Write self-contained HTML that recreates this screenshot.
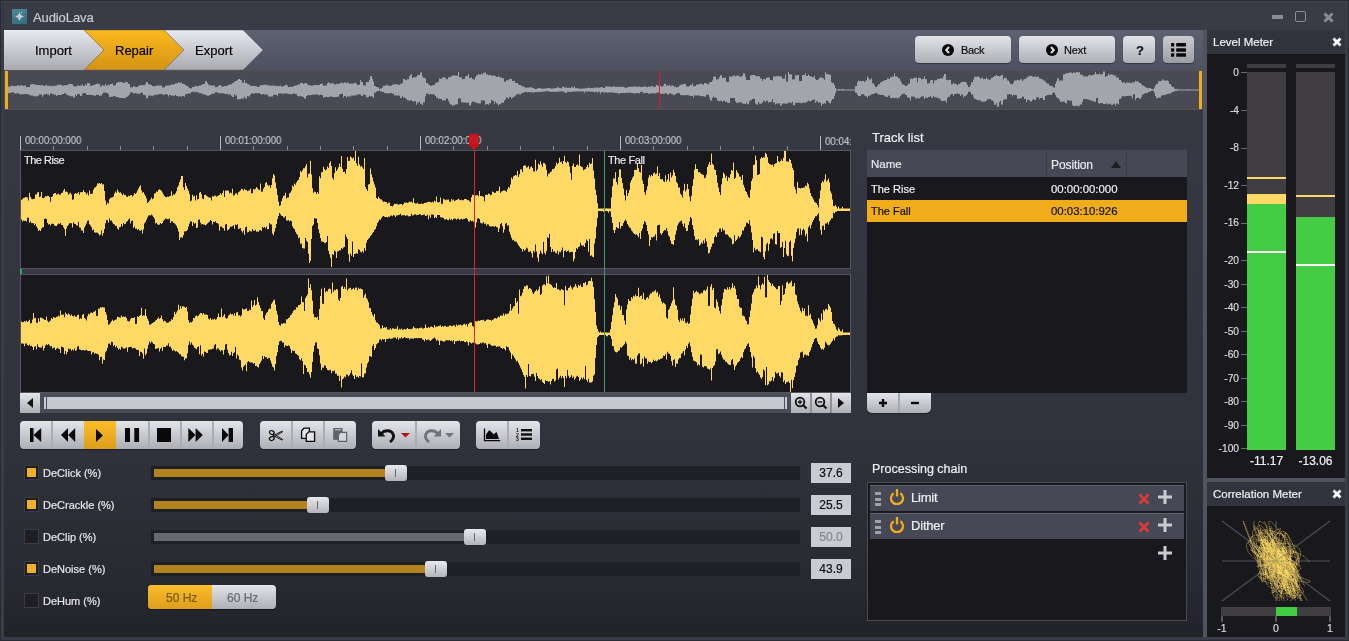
<!DOCTYPE html>
<html><head><meta charset="utf-8">
<style>
*{box-sizing:border-box;margin:0;padding:0}
html,body{width:1349px;height:641px;overflow:hidden;background:#2a2c33;font-family:"Liberation Sans",sans-serif;}
.a{position:absolute}
#frame{left:1px;top:1px;width:1347px;height:639px;background:#393b47}
#title{left:33px;top:9px;font-size:13px;color:#c9cacf;letter-spacing:-0.1px}
#icon{left:12px;top:9px;width:15px;height:15px;background:linear-gradient(160deg,#4a8797,#2f6d7e)}
#main{left:4px;top:30px;width:1199px;height:607px;background:linear-gradient(#363943 13%,#30333c 67%,#282a31 91%,#222329 100%)}
#tabbar{left:4px;top:30px;width:1199px;height:40px;background:linear-gradient(#5d6171,#4d5160)}
#ovbg{left:4px;top:70px;width:1199px;height:40px;background:#494a54;border-bottom:1px solid #56534e}
#split{left:1203px;top:30px;width:4px;height:607px;background:#50545f}
.tab{top:30px;height:40px;font-size:13px;line-height:40px;color:#050505}
.btn{border-radius:4px;background:linear-gradient(#e3e5eb,#aeafb5);box-shadow:0 1px 1px rgba(0,0,0,.35)}
.txt{white-space:nowrap;transform:translateY(1px);will-change:transform;-webkit-text-stroke:0.2px currentColor}
.wf{left:20px;width:831px;background:#19181d;border:1px solid #55555a}
.ruler{font-size:11px;color:#c4c5ca;top:133.8px;transform:translateY(0px) scaleX(0.88);transform-origin:0 0}
.tick{background:#8a8b90;width:1px}
.grp{top:421px;height:28px;border-radius:4px;background:linear-gradient(#e3e5eb,#aeafb5);box-shadow:0 1px 1px rgba(0,0,0,.4)}
.div{position:absolute;top:0;width:1px;height:27px;background:#9c9da3}
.cb{left:24px;width:15px;height:15px;border:1px solid #3c3c40;background:#1f1f23}
.cb i{position:absolute;left:2px;top:2px;width:9px;height:9px;background:#f0b12a}
.lbl{left:43px;font-size:11px;color:#e6e6e8}
.track{left:151px;width:649px;height:14px;background:#1f2025}
.fill{left:154px;height:8px;background:#b3831f}
.thumb{width:22px;height:16px;border-radius:3px;background:linear-gradient(#e8e9ee,#b4b5bb)}
.thumb i{position:absolute;left:10px;top:4px;width:1px;height:8px;background:#66676c}
.val{left:811px;width:40px;height:20px;background:#c9cbd2;font-size:12px;line-height:20px;text-align:center;color:#111;will-change:transform;-webkit-text-stroke:0.2px currentColor}
</style></head><body>
<div id="frame" class="a"></div>
<div class="a" style="left:1px;top:1px;width:1347px;height:2px;background:#3f414d"></div>
<div class="a" style="left:3px;top:3px;width:1342px;height:1px;background:#34363f"></div>
<div class="a" style="left:3px;top:3px;width:1px;height:27px;background:#34363f"></div>
<div id="icon" class="a">
 <svg width="15" height="15" viewBox="0 0 15 15" style="position:absolute;left:0;top:0">
  <path d="M7.5,3 L8.9,6.1 L12,7.5 L8.9,8.9 L7.5,12 L6.1,8.9 L3,7.5 L6.1,6.1Z" fill="#c8cacc"/>
  <circle cx="9.6" cy="3.6" r="0.7" fill="#cfd3d6"/>
 </svg>
</div>
<div id="title" class="a txt">AudioLava</div>
<!-- window controls -->
<div class="a" style="left:1272px;top:15px;width:11px;height:4px;background:#8a8c94"></div>
<div class="a" style="left:1295px;top:11px;width:11px;height:11px;border:1px solid #8a8c94;border-radius:2px"></div>
<svg class="a" style="left:1322px;top:11px" width="13" height="13" viewBox="0 0 13 13"><path d="M2.5,2.5L10.5,10.5M10.5,2.5L2.5,10.5" stroke="#8a8c94" stroke-width="3"/></svg>

<div id="main" class="a"></div>
<div id="tabbar" class="a"></div>
<svg class="a" style="left:4px;top:30px" width="270" height="40" viewBox="0 0 270 40">
 <defs>
  <linearGradient id="gw" x1="0" y1="0" x2="0" y2="1"><stop offset="0" stop-color="#e9eaef"/><stop offset="1" stop-color="#a9aab0"/></linearGradient>
  <linearGradient id="go" x1="0" y1="0" x2="0" y2="1"><stop offset="0" stop-color="#fbb91f"/><stop offset="1" stop-color="#d49414"/></linearGradient>
 </defs>
 <path d="M0,0 H80 L100,20 L80,40 H0Z" fill="url(#gw)"/>
 <path d="M80,0 H160 L180,20 L160,40 H80 L100,20Z" fill="url(#go)" stroke="#7a6a4a" stroke-width="0.6"/>
 <path d="M160,0 H239 L259,20 L239,40 H160 L180,20Z" fill="url(#gw)" stroke="#6a6c74" stroke-width="0.6"/>
</svg>
<div class="a tab txt" style="left:35px">Import</div>
<div class="a tab txt" style="left:115px">Repair</div>
<div class="a tab txt" style="left:195px">Export</div>

<div class="a btn" style="left:915px;top:36px;width:96px;height:27px"></div>
<div class="a btn" style="left:1019px;top:36px;width:96px;height:27px"></div>
<div class="a btn" style="left:1123px;top:36px;width:32px;height:27px"></div>
<div class="a btn" style="left:1163px;top:36px;width:31px;height:27px;background:linear-gradient(#c9cbd1,#9c9da3)"></div>
<svg class="a" style="left:942px;top:44px" width="12" height="12" viewBox="0 0 12 12"><circle cx="6" cy="6" r="6" fill="#0a0a0a"/><path d="M7,3 L4.2,6 L7,9" stroke="#e0e0e0" stroke-width="2" fill="none"/></svg>
<div class="a txt" style="left:961px;top:43px;font-size:11px;color:#111;letter-spacing:-0.3px">Back</div>
<svg class="a" style="left:1046px;top:44px" width="12" height="12" viewBox="0 0 12 12"><circle cx="6" cy="6" r="6" fill="#0a0a0a"/><path d="M5,3 L7.8,6 L5,9" stroke="#e0e0e0" stroke-width="2" fill="none"/></svg>
<div class="a txt" style="left:1064px;top:43px;font-size:11px;color:#111;letter-spacing:-0.1px">Next</div>
<div class="a txt" style="left:1135.5px;top:42px;font-size:13px;font-weight:bold;color:#111">?</div>
<svg class="a" style="left:1171px;top:43px" width="16" height="14" viewBox="0 0 16 14"><g fill="#0a0a0a"><rect x="0" y="0" width="3.2" height="3.6" rx="0.6"/><rect x="5.2" y="0" width="9.8" height="3.6" rx="0.4"/><rect x="0" y="5.3" width="3.2" height="3.4" rx="0.6"/><rect x="5.2" y="5.3" width="9.8" height="3.4" rx="0.4"/><rect x="0" y="10.2" width="3.2" height="3.6" rx="0.6"/><rect x="5.2" y="10.2" width="9.8" height="3.6" rx="0.4"/></g></svg>

<div id="ovbg" class="a"></div>
<div class="a" style="left:4px;top:70px;width:1199px;height:1px;background:#55524e"></div>
<svg class="a" style="left:0;top:0" width="1349" height="641"><path d="M8,86.5H9V86.5H10V86.5H11V85.6H12V85.6H13V86.6H14V86.1H15V86.1H16V86.0H17V85.2H18V85.2H19V86.3H20V85.0H21V85.4H22V85.4H23V85.9H24V85.6H25V85.6H26V87.2H27V87.0H28V87.0H29V87.2H30V84.6H31V84.2H32V84.2H33V83.9H34V84.6H35V84.6H36V85.0H37V85.1H38V85.1H39V85.1H40V85.3H41V85.3H42V85.2H43V85.7H44V85.8H45V85.8H46V84.5H47V86.1H48V86.1H49V85.5H50V86.2H51V86.2H52V85.7H53V85.9H54V85.7H55V85.7H56V85.7H57V84.8H58V84.8H59V84.7H60V84.7H61V84.7H62V86.1H63V85.5H64V85.3H65V85.3H66V85.2H67V84.8H68V84.8H69V83.8H70V84.0H71V84.0H72V84.3H73V86.3H74V86.3H75V86.5H76V86.3H77V85.5H78V85.5H79V85.8H80V85.6H81V85.6H82V84.3H83V85.9H84V85.9H85V84.3H86V85.2H87V82.9H88V82.9H89V83.5H90V85.8H91V85.8H92V85.6H93V85.0H94V85.0H95V84.3H96V84.1H97V83.8H98V83.8H99V84.1H100V86.5H101V86.5H102V84.7H103V85.8H104V85.8H105V83.9H106V85.6H107V85.6H108V84.6H109V85.3H110V83.9H111V83.9H112V83.5H113V85.4H114V85.4H115V85.0H116V82.8H117V82.8H118V82.0H119V82.2H120V82.1H121V82.1H122V82.2H123V83.0H124V83.0H125V81.6H126V82.3H127V82.3H128V83.7H129V84.0H130V87.2H131V87.2H132V87.6H133V86.2H134V86.2H135V87.0H136V87.1H137V87.1H138V86.1H139V85.2H140V85.2H141V85.2H142V85.0H143V85.2H144V85.2H145V84.1H146V82.1H147V82.1H148V84.3H149V84.4H150V84.4H151V84.9H152V86.0H153V86.2H154V86.2H155V86.2H156V85.4H157V85.4H158V85.7H159V85.4H160V85.4H161V85.6H162V87.2H163V87.4H164V87.4H165V85.8H166V85.4H167V85.4H168V85.5H169V85.3H170V85.3H171V84.6H172V84.4H173V84.4H174V84.2H175V83.6H176V83.2H177V83.2H178V82.1H179V82.7H180V82.7H181V82.4H182V83.7H183V83.7H184V84.3H185V85.1H186V85.7H187V85.7H188V87.1H189V88.3H190V88.3H191V88.2H192V87.0H193V87.0H194V86.7H195V85.7H196V86.3H197V86.3H198V85.9H199V85.4H200V85.4H201V84.9H202V84.2H203V84.2H204V83.8H205V81.2H206V81.2H207V83.1H208V84.6H209V85.3H210V85.3H211V85.5H212V85.4H213V85.4H214V85.4H215V87.3H216V87.3H217V86.5H218V86.1H219V84.9H220V84.9H221V86.6H222V86.5H223V86.5H224V86.1H225V85.9H226V85.9H227V85.5H228V85.0H229V84.6H230V84.6H231V84.3H232V83.1H233V83.1H234V81.7H235V81.0H236V81.0H237V80.1H238V78.9H239V78.9H240V80.0H241V80.2H242V82.7H243V82.7H244V79.8H245V83.1H246V83.1H247V84.0H248V84.4H249V84.4H250V85.7H251V85.9H252V85.8H253V85.8H254V85.9H255V85.9H256V85.9H257V86.9H258V86.7H259V86.7H260V85.0H261V85.2H262V85.0H263V85.0H264V84.7H265V84.7H266V84.7H267V85.3H268V85.3H269V85.3H270V86.0H271V85.4H272V85.4H273V85.5H274V85.9H275V85.8H276V85.8H277V86.2H278V86.0H279V86.0H280V85.5H281V86.4H282V86.4H283V86.1H284V86.0H285V84.8H286V84.8H287V85.4H288V86.9H289V86.9H290V86.5H291V87.0H292V87.0H293V86.0H294V86.0H295V85.6H296V85.6H297V84.9H298V84.6H299V84.6H300V82.9H301V83.0H302V83.0H303V84.0H304V83.3H305V83.3H306V82.9H307V84.2H308V84.9H309V84.9H310V85.7H311V85.6H312V85.6H313V85.6H314V85.1H315V85.1H316V85.1H317V85.2H318V85.0H319V85.0H320V84.1H321V83.7H322V83.7H323V86.1H324V85.5H325V85.5H326V85.5H327V83.3H328V82.5H329V82.5H330V83.9H331V83.2H332V83.2H333V83.6H334V84.6H335V84.6H336V83.7H337V83.9H338V83.9H339V83.6H340V83.1H341V82.7H342V82.7H343V83.5H344V82.5H345V82.5H346V83.3H347V82.6H348V82.6H349V83.9H350V83.5H351V83.5H352V83.5H353V84.0H354V82.7H355V82.7H356V83.8H357V85.0H358V85.0H359V84.6H360V80.1H361V82.1H362V82.1H363V85.3H364V85.5H365V85.5H366V82.1H367V82.1H368V82.1H369V79.9H370V76.3H371V76.3H372V79.1H373V81.4H374V86.1H375V86.1H376V86.9H377V87.2H378V87.2H379V88.9H380V88.5H381V88.5H382V87.6H383V85.7H384V85.7H385V85.7H386V84.6H387V85.6H388V85.6H389V85.8H390V85.7H391V85.7H392V84.8H393V84.6H394V84.3H395V84.3H396V83.9H397V84.8H398V84.8H399V84.8H400V83.7H401V83.7H402V82.7H403V78.9H404V78.9H405V80.3H406V79.8H407V79.2H408V79.2H409V76.4H410V74.6H411V74.6H412V78.0H413V77.3H414V77.3H415V77.3H416V76.7H417V74.9H418V74.9H419V75.1H420V72.4H421V72.4H422V76.2H423V77.7H424V77.7H425V78.6H426V83.0H427V83.0H428V84.2H429V85.1H430V85.8H431V85.8H432V85.3H433V85.1H434V85.1H435V83.0H436V82.6H437V82.6H438V81.6H439V78.5H440V78.7H441V78.7H442V77.5H443V77.2H444V77.2H445V78.1H446V79.3H447V79.3H448V77.2H449V77.2H450V76.4H451V76.4H452V75.5H453V75.4H454V75.4H455V75.6H456V75.7H457V75.7H458V72.0H459V77.3H460V77.3H461V77.3H462V79.3H463V79.0H464V79.0H465V76.4H466V75.9H467V75.9H468V73.9H469V77.9H470V77.9H471V77.2H472V78.8H473V79.5H474V79.5H475V77.0H476V75.2H477V75.2H478V73.8H479V74.4H480V74.4H481V73.4H482V74.7H483V72.7H484V72.7H485V72.4H486V74.4H487V74.4H488V75.3H489V75.0H490V75.0H491V75.6H492V75.8H493V75.8H494V75.3H495V76.3H496V76.9H497V76.9H498V76.0H499V77.2H500V77.2H501V77.4H502V78.3H503V78.3H504V81.5H505V82.0H506V80.2H507V80.2H508V80.2H509V79.1H510V79.1H511V79.1H512V80.9H513V80.9H514V80.7H515V82.9H516V83.1H517V83.1H518V84.5H519V85.0H520V85.0H521V85.7H522V86.4H523V86.4H524V87.0H525V87.7H526V87.7H527V87.6H528V87.6H529V87.5H530V87.5H531V87.0H532V87.9H533V87.9H534V88.8H535V88.9H536V88.9H537V88.3H538V88.3H539V88.3H540V88.3H541V88.5H542V88.8H543V88.8H544V88.4H545V88.4H546V88.4H547V88.1H548V88.1H549V88.3H550V88.3H551V88.7H552V88.5H553V88.5H554V88.5H555V87.9H556V87.9H557V86.8H558V87.8H559V87.8H560V88.0H561V88.4H562V86.7H563V86.7H564V87.8H565V87.5H566V87.5H567V87.9H568V87.7H569V87.7H570V88.0H571V86.7H572V87.6H573V87.6H574V86.4H575V88.3H576V88.3H577V88.1H578V88.4H579V88.4H580V88.7H581V88.7H582V88.5H583V88.5H584V88.4H585V88.3H586V88.3H587V88.0H588V87.7H589V87.7H590V88.2H591V88.0H592V88.0H593V88.2H594V87.6H595V87.8H596V87.8H597V87.3H598V87.7H599V87.7H600V87.2H601V87.2H602V87.2H603V87.9H604V87.9H605V86.6H606V86.6H607V86.5H608V86.5H609V86.5H610V86.4H611V87.0H612V87.0H613V86.1H614V86.5H615V87.1H616V87.1H617V86.4H618V87.0H619V87.0H620V86.8H621V86.8H622V86.8H623V86.7H624V87.4H625V87.4H626V88.1H627V87.3H628V87.1H629V87.1H630V86.8H631V86.8H632V86.8H633V86.4H634V86.4H635V86.4H636V86.7H637V87.0H638V86.5H639V86.5H640V87.0H641V87.1H642V87.1H643V86.6H644V86.6H645V86.6H646V86.8H647V87.2H648V86.5H649V86.5H650V86.8H651V85.9H652V85.9H653V87.2H654V86.8H655V86.8H656V85.1H657V85.5H658V85.5H659V85.4H660V85.7H661V86.5H662V86.5H663V85.6H664V83.8H665V83.8H666V85.7H667V85.4H668V85.4H669V84.8H670V86.4H671V85.6H672V85.6H673V85.8H674V86.8H675V86.8H676V87.4H677V87.0H678V87.0H679V85.5H680V85.0H681V84.6H682V84.6H683V84.3H684V84.1H685V84.1H686V86.3H687V86.5H688V86.5H689V86.1H690V85.0H691V85.0H692V83.6H693V86.5H694V86.0H695V86.0H696V84.8H697V84.6H698V84.6H699V83.8H700V83.7H701V83.7H702V84.6H703V84.4H704V83.1H705V83.1H706V83.6H707V84.2H708V84.2H709V82.4H710V82.0H711V82.0H712V80.4H713V77.1H714V76.6H715V76.6H716V79.4H717V79.3H718V79.3H719V77.2H720V75.2H721V75.2H722V77.9H723V77.8H724V77.8H725V77.8H726V81.4H727V81.9H728V81.9H729V76.4H730V76.4H731V76.4H732V76.6H733V75.6H734V75.6H735V76.4H736V75.7H737V75.5H738V75.5H739V76.8H740V76.6H741V76.6H742V75.7H743V73.3H744V73.3H745V76.4H746V80.2H747V80.0H748V80.0H749V79.9H750V75.2H751V75.2H752V75.0H753V75.1H754V75.1H755V75.7H756V76.2H757V76.2H758V76.0H759V76.5H760V78.4H761V78.4H762V80.8H763V79.1H764V79.1H765V79.5H766V77.8H767V77.8H768V77.3H769V78.0H770V80.1H771V80.1H772V80.7H773V76.5H774V76.5H775V76.5H776V76.3H777V76.3H778V75.8H779V76.6H780V76.5H781V76.5H782V78.9H783V78.4H784V78.4H785V74.5H786V81.5H787V81.5H788V71.9H789V74.2H790V74.2H791V74.4H792V79.6H793V79.2H794V79.2H795V75.2H796V75.2H797V75.2H798V74.9H799V81.1H800V81.1H801V81.1H802V75.0H803V75.0H804V75.0H805V73.1H806V75.9H807V75.9H808V74.4H809V76.0H810V76.0H811V76.6H812V77.2H813V77.2H814V75.7H815V79.1H816V80.1H817V80.1H818V79.2H819V77.8H820V77.8H821V77.0H822V78.3H823V78.3H824V79.8H825V72.0H826V74.0H827V74.0H828V74.3H829V74.8H830V74.8H831V82.3H832V82.9H833V82.9H834V85.1H835V88.1H836V89.6H837V89.6H838V89.2H839V89.2H840V89.2H841V89.6H842V89.1H843V89.1H844V89.6H845V89.6H846V89.6H847V89.6H848V89.6H849V89.6H850V89.6H851V89.6H852V89.6H853V89.6H854V89.6H855V85.9H856V85.9H857V82.3H858V80.5H859V80.9H860V80.9H861V81.4H862V81.0H863V81.0H864V82.2H865V80.5H866V80.5H867V76.4H868V77.9H869V79.4H870V79.4H871V78.5H872V83.2H873V83.2H874V85.2H875V86.9H876V86.9H877V85.8H878V84.3H879V84.3H880V82.4H881V82.1H882V81.1H883V81.1H884V80.2H885V79.9H886V79.9H887V78.6H888V78.8H889V78.8H890V77.3H891V77.2H892V76.5H893V76.5H894V73.3H895V76.3H896V76.3H897V77.0H898V78.2H899V78.2H900V80.5H901V82.5H902V84.5H903V84.5H904V84.9H905V86.1H906V86.1H907V85.1H908V83.5H909V83.5H910V78.6H911V78.9H912V78.9H913V78.3H914V77.7H915V77.8H916V77.8H917V82.2H918V77.8H919V77.8H920V77.9H921V79.2H922V79.2H923V78.7H924V76.2H925V79.2H926V79.2H927V83.5H928V83.2H929V83.2H930V80.5H931V80.0H932V80.0H933V83.6H934V80.4H935V80.2H936V80.2H937V79.1H938V78.9H939V78.9H940V78.0H941V78.4H942V78.4H943V76.3H944V74.0H945V74.0H946V79.9H947V80.2H948V79.7H949V79.7H950V80.1H951V84.3H952V84.3H953V82.8H954V83.7H955V83.7H956V84.3H957V85.3H958V83.9H959V83.9H960V83.1H961V82.0H962V82.0H963V81.8H964V81.9H965V81.9H966V82.7H967V84.9H968V86.9H969V86.9H970V85.2H971V82.3H972V82.3H973V79.4H974V76.8H975V76.8H976V77.1H977V76.6H978V76.6H979V77.5H980V79.1H981V77.7H982V77.7H983V79.3H984V79.0H985V79.0H986V77.6H987V79.3H988V79.3H989V80.0H990V79.5H991V77.7H992V77.7H993V77.1H994V75.9H995V75.9H996V75.1H997V75.9H998V75.9H999V76.5H1000V76.0H1001V75.0H1002V75.0H1003V79.6H1004V77.8H1005V77.8H1006V78.4H1007V80.5H1008V80.5H1009V81.9H1010V83.9H1011V83.9H1012V84.6H1013V82.7H1014V80.6H1015V80.6H1016V80.6H1017V80.0H1018V80.0H1019V80.4H1020V79.2H1021V79.2H1022V80.9H1023V79.5H1024V78.9H1025V78.9H1026V77.9H1027V76.8H1028V76.8H1029V75.7H1030V75.9H1031V75.9H1032V76.6H1033V77.1H1034V76.5H1035V76.5H1036V77.0H1037V76.6H1038V76.6H1039V78.6H1040V78.7H1041V78.7H1042V79.4H1043V80.6H1044V80.6H1045V81.8H1046V83.0H1047V83.5H1048V83.5H1049V85.6H1050V85.8H1051V85.8H1052V86.2H1053V87.6H1054V87.6H1055V83.8H1056V81.4H1057V78.6H1058V78.6H1059V80.8H1060V80.5H1061V80.5H1062V80.6H1063V74.4H1064V74.4H1065V73.4H1066V73.5H1067V73.0H1068V73.0H1069V72.6H1070V72.4H1071V72.4H1072V73.2H1073V72.4H1074V72.4H1075V73.0H1076V71.9H1077V71.9H1078V72.4H1079V72.3H1080V74.5H1081V74.5H1082V75.1H1083V76.3H1084V76.3H1085V76.5H1086V76.4H1087V76.4H1088V75.5H1089V74.7H1090V75.3H1091V75.3H1092V75.3H1093V74.6H1094V74.6H1095V71.7H1096V74.3H1097V74.3H1098V74.2H1099V73.2H1100V74.6H1101V74.6H1102V74.1H1103V71.4H1104V71.4H1105V77.0H1106V76.0H1107V76.0H1108V73.8H1109V74.8H1110V74.8H1111V74.3H1112V74.4H1113V75.5H1114V75.5H1115V75.4H1116V77.4H1117V77.4H1118V77.8H1119V80.1H1120V80.1H1121V81.3H1122V83.0H1123V82.3H1124V82.3H1125V83.4H1126V82.6H1127V82.6H1128V82.5H1129V82.7H1130V82.7H1131V83.3H1132V82.0H1133V82.4H1134V82.4H1135V80.7H1136V81.4H1137V81.4H1138V81.4H1139V82.9H1140V82.9H1141V84.3H1142V85.4H1143V85.4H1144V86.6H1145V87.2H1146V87.7H1147V87.7H1148V88.4H1149V88.1H1150V88.1H1151V89.0H1152V89.2H1153V89.2H1154V87.6H1155V85.4H1156V84.0H1157V84.0H1158V81.3H1159V81.2H1160V81.2H1161V80.9H1162V79.4H1163V79.4H1164V81.0H1165V80.5H1166V80.6H1167V80.6H1168V81.2H1169V83.9H1170V83.9H1171V85.7H1172V87.0H1173V87.0H1174V88.6H1175V89.2H1176V89.2H1177V88.7H1178V89.4H1179V89.5H1180V89.5H1181V89.4H1182V89.6H1183V89.6H1184V89.6H1185V89.6H1186V89.6H1187V88.9H1188V89.6H1189V89.6H1190V89.6H1191V89.6H1192V89.6H1193V89.6H1194V89.6H1195V89.6H1196V89.6H1197V89.6H1198V89.6H1199V90.4H1198V90.7H1197V90.4H1196V90.4H1195V90.4H1194V90.4H1193V90.4H1192V90.4H1191V90.4H1190V90.4H1189V90.4H1188V90.4H1187V90.4H1186V90.4H1185V90.4H1184V90.5H1183V90.5H1182V90.4H1181V90.4H1180V90.4H1179V90.4H1178V90.4H1177V91.1H1176V91.1H1175V91.0H1174V92.0H1173V92.0H1172V92.4H1171V93.5H1170V93.5H1169V94.0H1168V94.0H1167V94.0H1166V95.3H1165V94.7H1164V95.3H1163V95.3H1162V95.8H1161V97.4H1160V97.4H1159V97.8H1158V98.3H1157V98.3H1156V95.9H1155V93.2H1154V90.7H1153V90.7H1152V90.8H1151V91.6H1150V91.6H1149V92.1H1148V92.9H1147V92.9H1146V93.2H1145V93.6H1144V94.5H1143V94.5H1142V96.9H1141V98.7H1140V98.7H1139V97.5H1138V98.1H1137V98.1H1136V99.9H1135V94.3H1134V94.3H1133V98.5H1132V96.2H1131V95.7H1130V95.7H1129V95.7H1128V96.0H1127V96.0H1126V96.5H1125V96.3H1124V96.3H1123V96.0H1122V97.5H1121V99.1H1120V99.1H1119V104.6H1118V103.6H1117V103.6H1116V106.1H1115V103.8H1114V103.8H1113V104.9H1112V104.9H1111V103.8H1110V103.8H1109V104.6H1108V103.5H1107V103.5H1106V103.7H1105V104.1H1104V104.1H1103V102.9H1102V102.9H1101V102.9H1100V103.7H1099V102.9H1098V97.9H1097V97.9H1096V102.3H1095V101.5H1094V101.5H1093V100.9H1092V100.6H1091V100.6H1090V99.9H1089V99.6H1088V99.3H1087V99.3H1086V98.7H1085V99.1H1084V99.1H1083V102.0H1082V104.5H1081V104.5H1080V105.6H1079V106.4H1078V105.7H1077V105.7H1076V106.3H1075V106.1H1074V106.1H1073V105.2H1072V100.8H1071V100.8H1070V100.8H1069V100.2H1068V100.2H1067V103.6H1066V103.1H1065V101.4H1064V101.4H1063V101.6H1062V101.7H1061V101.7H1060V99.8H1059V98.3H1058V98.3H1057V97.0H1056V95.0H1055V92.6H1054V92.6H1053V93.3H1052V95.0H1051V95.0H1050V94.5H1049V94.9H1048V94.9H1047V95.5H1046V96.1H1045V99.9H1044V99.9H1043V97.8H1042V98.0H1041V98.0H1040V99.2H1039V97.3H1038V97.3H1037V97.4H1036V100.0H1035V100.0H1034V98.9H1033V100.1H1032V101.4H1031V101.4H1030V100.4H1029V99.8H1028V99.8H1027V102.1H1026V99.1H1025V99.1H1024V96.7H1023V96.5H1022V98.3H1021V98.3H1020V98.8H1019V98.8H1018V98.8H1017V95.2H1016V94.9H1015V94.9H1014V94.5H1013V96.4H1012V94.4H1011V94.4H1010V94.0H1009V94.4H1008V94.4H1007V99.5H1006V99.3H1005V99.3H1004V99.9H1003V104.4H1002V104.4H1001V100.8H1000V102.1H999V106.7H998V106.7H997V103.0H996V104.7H995V104.7H994V101.6H993V100.5H992V100.5H991V99.3H990V98.9H989V99.3H988V99.3H987V100.6H986V101.6H985V101.6H984V101.7H983V101.6H982V101.6H981V100.5H980V99.9H979V100.2H978V100.2H977V99.6H976V98.9H975V98.9H974V96.8H973V94.5H972V94.5H971V92.0H970V91.8H969V91.8H968V94.1H967V95.1H966V96.2H965V96.2H964V97.5H963V94.4H962V94.4H961V96.0H960V94.1H959V94.1H958V93.3H957V93.7H956V93.9H955V93.9H954V95.9H953V94.1H952V94.1H951V95.1H950V96.8H949V96.8H948V98.0H947V102.8H946V100.7H945V100.7H944V100.9H943V100.9H942V100.9H941V99.6H940V98.4H939V98.4H938V97.6H937V97.6H936V97.6H935V96.7H934V96.3H933V97.7H932V97.7H931V95.8H930V97.1H929V97.1H928V98.0H927V97.6H926V97.6H925V99.0H924V96.3H923V96.5H922V96.5H921V97.6H920V98.5H919V98.5H918V97.8H917V98.6H916V98.6H915V96.8H914V96.8H913V96.6H912V96.6H911V100.4H910V97.8H909V97.8H908V97.2H907V94.9H906V94.9H905V93.4H904V93.7H903V93.7H902V94.7H901V95.9H900V97.4H899V97.4H898V98.7H897V97.8H896V97.8H895V98.3H894V97.7H893V97.7H892V97.9H891V98.0H890V95.4H889V95.4H888V96.9H887V96.8H886V96.8H885V95.9H884V95.1H883V95.1H882V94.7H881V94.9H880V94.4H879V94.4H878V93.7H877V93.1H876V93.1H875V93.4H874V93.9H873V93.9H872V94.5H871V95.6H870V95.6H869V96.0H868V97.8H867V96.2H866V96.2H865V95.5H864V94.2H863V94.2H862V94.2H861V96.1H860V96.1H859V96.3H858V94.8H857V92.7H856V92.7H855V90.4H854V90.4H853V90.4H852V90.4H851V90.4H850V90.4H849V90.5H848V90.4H847V90.5H846V90.5H845V90.6H844V90.4H843V90.4H842V90.4H841V90.4H840V90.4H839V90.7H838V90.4H837V90.4H836V93.0H835V96.0H834V99.1H833V99.1H832V100.8H831V103.2H830V103.2H829V101.7H828V100.7H827V100.7H826V103.7H825V103.0H824V103.7H823V103.7H822V106.0H821V102.4H820V102.4H819V102.8H818V101.3H817V101.3H816V103.0H815V99.4H814V99.8H813V99.8H812V100.7H811V101.2H810V101.2H809V100.5H808V101.8H807V101.8H806V103.1H805V102.6H804V102.6H803V102.9H802V103.6H801V102.7H800V102.7H799V102.5H798V102.7H797V102.7H796V102.9H795V105.2H794V105.2H793V101.7H792V103.3H791V102.7H790V102.7H789V102.2H788V103.8H787V103.8H786V103.4H785V103.4H784V103.4H783V103.6H782V105.6H781V105.6H780V102.9H779V103.8H778V103.4H777V103.4H776V104.4H775V102.4H774V102.4H773V99.2H772V102.1H771V102.1H770V102.1H769V102.8H768V100.7H767V100.7H766V102.3H765V100.7H764V100.7H763V102.4H762V103.8H761V103.8H760V103.6H759V101.8H758V104.6H757V104.6H756V103.4H755V98.8H754V98.8H753V99.0H752V100.3H751V100.3H750V101.6H749V104.3H748V104.3H747V102.6H746V104.0H745V103.7H744V103.7H743V103.6H742V102.4H741V102.4H740V102.0H739V102.7H738V102.7H737V103.1H736V101.6H735V98.1H734V98.1H733V98.1H732V98.0H731V98.0H730V103.1H729V102.8H728V102.8H727V101.6H726V102.1H725V100.8H724V100.8H723V101.7H722V100.8H721V100.8H720V101.3H719V100.8H718V100.8H717V98.3H716V97.5H715V97.5H714V96.4H713V98.1H712V100.5H711V100.5H710V97.5H709V94.7H708V94.7H707V94.7H706V96.7H705V96.7H704V95.9H703V96.6H702V96.0H701V96.0H700V95.5H699V95.6H698V95.6H697V95.5H696V95.4H695V95.4H694V97.4H693V95.8H692V95.9H691V95.9H690V95.6H689V95.2H688V95.2H687V94.8H686V95.3H685V95.3H684V95.3H683V95.3H682V95.3H681V94.9H680V93.2H679V93.0H678V93.0H677V93.4H676V94.4H675V94.4H674V95.5H673V93.9H672V93.9H671V92.9H670V93.8H669V94.4H668V94.4H667V93.1H666V93.6H665V93.6H664V93.8H663V93.8H662V93.8H661V93.7H660V92.4H659V92.4H658V92.4H657V93.0H656V93.6H655V93.6H654V93.0H653V93.6H652V93.6H651V93.2H650V93.8H649V93.8H648V92.9H647V92.8H646V93.0H645V93.0H644V93.4H643V91.8H642V91.8H641V92.0H640V93.3H639V93.3H638V93.1H637V92.9H636V93.6H635V93.6H634V93.3H633V93.0H632V93.0H631V92.5H630V92.7H629V92.7H628V93.1H627V92.5H626V92.9H625V92.9H624V93.0H623V93.1H622V93.1H621V93.0H620V93.8H619V93.8H618V92.8H617V92.9H616V92.9H615V92.7H614V92.5H613V92.4H612V92.4H611V92.3H610V92.4H609V92.4H608V92.7H607V92.3H606V92.3H605V92.6H604V92.4H603V91.9H602V91.9H601V93.7H600V91.8H599V91.8H598V92.7H597V91.7H596V91.7H595V92.2H594V92.0H593V91.5H592V91.5H591V91.7H590V91.6H589V91.6H588V91.6H587V91.6H586V91.6H585V92.7H584V91.4H583V91.4H582V91.6H581V91.2H580V91.5H579V91.5H578V91.2H577V91.6H576V91.6H575V91.8H574V91.4H573V91.4H572V91.9H571V92.0H570V91.7H569V91.7H568V91.5H567V92.9H566V92.9H565V91.9H564V91.4H563V91.4H562V91.6H561V91.2H560V91.4H559V91.4H558V91.7H557V91.8H556V91.8H555V91.7H554V91.7H553V91.7H552V91.8H551V91.7H550V91.7H549V91.1H548V91.3H547V91.2H546V91.2H545V91.4H544V91.7H543V91.7H542V91.7H541V92.0H540V92.0H539V91.8H538V92.3H537V92.0H536V92.0H535V92.2H534V92.4H533V92.4H532V91.9H531V92.3H530V92.3H529V92.0H528V92.5H527V92.1H526V92.1H525V92.3H524V92.7H523V92.7H522V93.6H521V94.4H520V94.4H519V93.5H518V94.4H517V94.4H516V95.5H515V96.5H514V97.4H513V97.4H512V98.5H511V96.9H510V96.9H509V99.0H508V97.4H507V97.4H506V99.4H505V100.4H504V102.7H503V102.7H502V102.9H501V104.2H500V104.2H499V105.5H498V103.6H497V103.6H496V101.5H495V103.7H494V100.7H493V100.7H492V99.8H491V103.3H490V103.3H489V104.7H488V104.0H487V104.0H486V104.8H485V100.5H484V100.5H483V100.7H482V100.0H481V103.3H480V103.3H479V103.8H478V102.7H477V102.7H476V102.8H475V101.8H474V101.8H473V101.8H472V102.8H471V105.6H470V105.6H469V102.4H468V102.7H467V102.7H466V102.4H465V102.6H464V102.6H463V102.2H462V102.2H461V98.4H460V98.4H459V98.4H458V104.3H457V104.3H456V104.5H455V105.3H454V105.3H453V105.9H452V104.5H451V104.5H450V103.2H449V100.7H448V98.6H447V98.6H446V100.4H445V100.2H444V100.2H443V100.8H442V99.0H441V99.0H440V98.5H439V99.2H438V97.8H437V97.8H436V96.1H435V94.4H434V94.4H433V94.2H432V94.0H431V94.0H430V94.7H429V94.0H428V93.4H427V93.4H426V96.3H425V102.3H424V102.3H423V105.2H422V103.7H421V103.7H420V101.6H419V102.7H418V102.7H417V104.8H416V101.0H415V101.4H414V101.4H413V101.3H412V100.2H411V100.2H410V100.9H409V100.2H408V100.2H407V98.9H406V98.3H405V97.4H404V97.4H403V96.3H402V98.1H401V98.1H400V95.7H399V95.6H398V95.6H397V95.5H396V95.4H395V95.4H394V93.5H393V93.9H392V93.1H391V93.1H390V93.5H389V93.3H388V93.3H387V93.6H386V92.9H385V92.9H384V91.8H383V91.9H382V91.4H381V91.4H380V90.6H379V91.1H378V91.1H377V91.8H376V92.8H375V92.8H374V97.7H373V96.7H372V96.2H371V96.2H370V95.8H369V96.9H368V96.9H367V97.4H366V95.1H365V95.1H364V94.6H363V96.0H362V96.0H361V94.6H360V94.3H359V94.5H358V94.5H357V95.6H356V95.2H355V95.2H354V95.8H353V95.6H352V95.6H351V96.4H350V96.5H349V96.6H348V96.6H347V97.7H346V96.0H345V96.0H344V97.4H343V93.7H342V93.7H341V94.1H340V94.5H339V96.7H338V96.7H337V97.1H336V97.0H335V97.0H334V97.0H333V96.7H332V96.7H331V96.3H330V97.1H329V97.1H328V97.3H327V96.8H326V97.0H325V97.0H324V97.7H323V95.0H322V95.0H321V94.6H320V95.2H319V95.2H318V94.2H317V94.6H316V94.6H315V94.6H314V94.7H313V94.8H312V94.8H311V95.5H310V95.1H309V95.1H308V95.5H307V96.0H306V98.6H305V98.6H304V96.9H303V96.4H302V96.4H301V95.7H300V96.2H299V96.2H298V95.9H297V94.1H296V94.1H295V93.4H294V93.4H293V94.3H292V94.3H291V94.5H290V94.0H289V94.0H288V93.5H287V93.6H286V93.6H285V93.3H284V94.2H283V93.4H282V93.4H281V93.4H280V93.4H279V93.4H278V95.7H277V95.1H276V95.1H275V94.6H274V94.9H273V96.6H272V96.6H271V96.5H270V96.4H269V96.4H268V94.8H267V94.5H266V94.5H265V94.6H264V94.1H263V94.1H262V94.7H261V94.1H260V93.1H259V93.1H258V93.5H257V93.1H256V93.1H255V93.7H254V93.5H253V93.5H252V93.4H251V94.4H250V96.5H249V96.5H248V96.0H247V98.6H246V98.6H245V96.7H244V98.5H243V98.5H242V98.6H241V99.1H240V99.3H239V99.3H238V99.5H237V95.4H236V95.4H235V94.3H234V97.1H233V97.1H232V95.8H231V94.5H230V94.5H229V94.5H228V93.8H227V94.0H226V94.0H225V93.7H224V93.3H223V93.3H222V93.3H221V93.2H220V93.2H219V92.9H218V92.5H217V92.3H216V92.3H215V93.3H214V93.7H213V93.7H212V94.0H211V94.9H210V94.9H209V95.7H208V95.9H207V95.1H206V95.1H205V94.6H204V94.2H203V94.2H202V93.2H201V93.2H200V93.2H199V92.3H198V92.2H197V92.2H196V91.4H195V92.4H194V91.8H193V91.8H192V92.0H191V93.4H190V93.4H189V93.3H188V93.9H187V93.9H186V94.3H185V96.7H184V96.0H183V96.0H182V96.8H181V96.3H180V96.3H179V96.8H178V95.9H177V95.9H176V94.7H175V95.8H174V95.7H173V95.7H172V95.7H171V95.0H170V95.0H169V96.6H168V94.6H167V94.6H166V94.1H165V94.8H164V94.8H163V94.5H162V93.8H161V94.1H160V94.1H159V94.5H158V94.6H157V94.6H156V94.9H155V95.3H154V95.3H153V96.2H152V95.8H151V95.6H150V95.6H149V95.8H148V98.2H147V98.2H146V95.5H145V95.0H144V95.0H143V92.8H142V92.6H141V93.5H140V93.5H139V94.0H138V93.6H137V93.6H136V93.1H135V93.4H134V93.4H133V92.2H132V92.5H131V92.5H130V94.2H129V95.7H128V96.8H127V96.8H126V97.9H125V98.2H124V98.2H123V97.9H122V98.0H121V98.0H120V97.7H119V97.5H118V97.0H117V97.0H116V96.5H115V96.1H114V96.1H113V97.0H112V96.7H111V96.7H110V96.9H109V94.2H108V92.9H107V92.9H106V92.4H105V92.6H104V92.6H103V93.9H102V95.4H101V95.4H100V95.9H99V94.7H98V94.7H97V94.7H96V95.8H95V95.4H94V95.4H93V95.1H92V95.0H91V95.0H90V94.6H89V94.9H88V94.9H87V94.5H86V93.2H85V92.9H84V92.9H83V93.9H82V96.0H81V96.0H80V94.3H79V93.9H78V93.9H77V96.0H76V95.0H75V97.4H74V97.4H73V96.3H72V96.3H71V96.3H70V95.8H69V95.3H68V95.3H67V94.4H66V93.3H65V93.3H64V94.0H63V94.1H62V94.9H61V94.9H60V94.9H59V95.0H58V95.0H57V96.0H56V94.8H55V94.8H54V94.4H53V93.8H52V93.5H51V93.5H50V95.4H49V94.5H48V94.5H47V94.0H46V94.3H45V94.3H44V95.0H43V96.8H42V94.6H41V94.6H40V94.6H39V95.7H38V95.7H37V96.8H36V96.2H35V96.2H34V96.2H33V95.4H32V95.4H31V95.4H30V95.0H29V94.3H28V94.3H27V93.9H26V94.1H25V94.1H24V94.3H23V94.2H22V94.2H21V94.6H20V94.2H19V93.3H18V93.3H17V93.6H16V93.6H15V93.6H14V92.3H13V92.4H12V92.4H11V92.7H10V92.9H9V92.9H8Z" fill="#a4a4ac"/></svg>
<div class="a" style="left:5px;top:71px;width:3px;height:38px;background:#f0ac1a"></div>
<div class="a" style="left:1199px;top:71px;width:3px;height:38px;background:#f0ac1a"></div>
<div class="a" style="left:659px;top:71px;width:1px;height:38px;background:#d8202a"></div>

<div id="split" class="a"></div>

<!-- ruler -->
<div class="a tick" style="left:20px;top:136px;height:14px;width:1px;background:#b4b5ba"></div>
<div class="a tick" style="left:220px;top:136px;height:14px;width:1px;background:#b4b5ba"></div>
<div class="a tick" style="left:420px;top:136px;height:14px;width:1px;background:#b4b5ba"></div>
<div class="a tick" style="left:620px;top:136px;height:14px;width:1px;background:#b4b5ba"></div>
<div class="a tick" style="left:820px;top:136px;height:14px;width:1px;background:#b4b5ba"></div>
<div class="a tick" style="left:53px;top:146px;height:4px"></div>
<div class="a tick" style="left:87px;top:146px;height:4px"></div>
<div class="a tick" style="left:120px;top:146px;height:4px"></div>
<div class="a tick" style="left:153px;top:146px;height:4px"></div>
<div class="a tick" style="left:187px;top:146px;height:4px"></div>
<div class="a tick" style="left:253px;top:146px;height:4px"></div>
<div class="a tick" style="left:287px;top:146px;height:4px"></div>
<div class="a tick" style="left:320px;top:146px;height:4px"></div>
<div class="a tick" style="left:353px;top:146px;height:4px"></div>
<div class="a tick" style="left:387px;top:146px;height:4px"></div>
<div class="a tick" style="left:453px;top:146px;height:4px"></div>
<div class="a tick" style="left:487px;top:146px;height:4px"></div>
<div class="a tick" style="left:520px;top:146px;height:4px"></div>
<div class="a tick" style="left:553px;top:146px;height:4px"></div>
<div class="a tick" style="left:587px;top:146px;height:4px"></div>
<div class="a tick" style="left:653px;top:146px;height:4px"></div>
<div class="a tick" style="left:687px;top:146px;height:4px"></div>
<div class="a tick" style="left:720px;top:146px;height:4px"></div>
<div class="a tick" style="left:753px;top:146px;height:4px"></div>
<div class="a tick" style="left:787px;top:146px;height:4px"></div>
<div class="a ruler txt" style="left:25px">00:00:00:000</div>
<div class="a ruler txt" style="left:225px">00:01:00:000</div>
<div class="a ruler txt" style="left:425px">00:02:00:000</div>
<div class="a ruler txt" style="left:625px">00:03:00:000</div>
<div class="a" style="left:825px;top:130px;width:26px;height:20px;overflow:hidden"><div class="a ruler txt" style="left:0;top:5px">00:04:</div></div>

<div class="a wf" style="top:150px;height:119px"></div>
<div class="a" style="left:20px;top:269px;width:831px;height:5px;background:#373a45;border-left:1px solid #55555a"></div>
<div class="a" style="left:20px;top:269px;width:2px;height:5px;background:#2fae55"></div>
<div class="a wf" style="top:274px;height:119px"></div>
<svg class="a" style="left:0;top:0;filter:blur(0.3px)" width="1349" height="641">
 <clipPath id="c1"><rect x="21" y="151" width="829" height="117"/></clipPath>
 <clipPath id="c2"><rect x="21" y="275" width="829" height="117"/></clipPath>
 <path d="M21,199.7H22V199.3H23V198.1H24V197.7H25V196.9H26V197.3H27V197.4H28V200.6H29V192.8H30V196.8H31V198.8H32V199.2H33V199.0H34V198.7H35V194.5H36V194.6H37V192.4H38V192.1H39V196.9H40V196.6H41V192.1H42V198.0H43V198.3H44V197.6H45V196.0H46V196.6H47V195.8H48V196.0H49V197.1H50V201.7H51V196.9H52V196.4H53V193.7H54V193.3H55V193.1H56V194.4H57V194.2H58V193.8H59V194.7H60V194.5H61V193.1H62V192.8H63V190.5H64V189.0H65V191.8H66V191.6H67V192.2H68V194.8H69V193.4H70V192.8H71V194.4H72V199.7H73V199.2H74V194.1H75V192.9H76V193.8H77V193.3H78V191.9H79V194.4H80V192.2H81V192.2H82V192.0H83V190.0H84V192.1H85V192.6H86V194.5H87V192.8H88V195.4H89V190.5H90V194.1H91V193.7H92V193.5H93V189.7H94V187.8H95V187.3H96V186.1H97V183.5H98V183.5H99V183.1H100V183.9H101V183.1H102V184.4H103V184.3H104V191.1H105V200.4H106V204.7H107V202.6H108V203.6H109V199.2H110V197.7H111V197.7H112V197.2H113V196.4H114V193.5H115V191.6H116V192.8H117V189.5H118V191.4H119V192.8H120V192.2H121V193.7H122V195.2H123V193.5H124V195.2H125V194.8H126V196.4H127V196.9H128V195.8H129V196.3H130V195.3H131V195.1H132V196.5H133V195.2H134V193.1H135V194.0H136V192.8H137V190.4H138V188.6H139V186.7H140V185.3H141V190.3H142V192.8H143V192.0H144V194.3H145V196.0H146V198.5H147V203.0H148V202.0H149V200.7H150V199.5H151V197.6H152V199.2H153V198.2H154V193.4H155V193.2H156V191.5H157V191.8H158V190.0H159V189.3H160V190.0H161V190.7H162V192.4H163V194.4H164V196.1H165V196.9H166V197.3H167V196.5H168V196.8H169V196.2H170V196.1H171V191.3H172V195.7H173V194.2H174V194.8H175V193.3H176V191.2H177V187.2H178V185.4H179V182.1H180V179.5H181V176.1H182V176.0H183V187.2H184V190.0H185V182.9H186V186.1H187V188.5H188V190.8H189V194.0H190V201.2H191V200.5H192V194.7H193V196.6H194V195.8H195V200.6H196V195.3H197V199.5H198V199.0H199V192.8H200V192.1H201V194.3H202V198.6H203V199.2H204V194.9H205V194.8H206V195.7H207V196.4H208V197.2H209V197.5H210V197.8H211V200.6H212V196.0H213V196.8H214V195.5H215V195.7H216V196.8H217V196.1H218V195.4H219V195.1H220V193.3H221V194.7H222V193.0H223V190.4H224V196.9H225V190.8H226V190.6H227V190.6H228V190.8H229V193.5H230V192.5H231V193.3H232V188.8H233V195.6H234V195.3H235V193.4H236V193.2H237V194.7H238V192.2H239V191.5H240V190.6H241V188.8H242V189.3H243V190.4H244V188.8H245V190.1H246V190.0H247V191.2H248V190.4H249V190.5H250V188.6H251V193.4H252V193.0H253V188.9H254V189.6H255V188.7H256V187.1H257V188.2H258V189.6H259V190.0H260V183.5H261V191.8H262V191.4H263V188.5H264V187.0H265V182.9H266V182.1H267V184.8H268V185.8H269V185.3H270V187.8H271V184.9H272V178.2H273V174.1H274V175.5H275V182.6H276V188.6H277V195.0H278V201.6H279V206.1H280V205.2H281V201.0H282V198.3H283V196.0H284V195.6H285V192.8H286V198.4H287V197.6H288V197.5H289V193.3H290V192.6H291V190.6H292V185.5H293V186.8H294V183.5H295V184.7H296V182.6H297V180.7H298V179.7H299V177.1H300V170.9H301V172.3H302V170.2H303V168.2H304V168.3H305V166.3H306V163.9H307V177.5H308V174.0H309V173.3H310V160.8H311V174.5H312V188.2H313V192.7H314V191.6H315V192.1H316V194.0H317V192.1H318V193.7H319V176.2H320V178.3H321V172.2H322V172.1H323V166.8H324V168.9H325V170.6H326V169.5H327V166.4H328V167.9H329V162.9H330V161.3H331V166.0H332V177.8H333V179.4H334V173.1H335V167.2H336V171.1H337V169.2H338V167.2H339V163.5H340V166.8H341V155.9H342V168.8H343V172.0H344V171.8H345V173.7H346V169.1H347V156.9H348V161.1H349V160.8H350V156.5H351V157.5H352V158.4H353V157.6H354V160.8H355V150.4H356V163.2H357V165.7H358V156.7H359V164.5H360V166.7H361V165.8H362V167.4H363V168.9H364V158.1H365V187.0H366V188.9H367V190.9H368V184.4H369V184.1H370V168.4H371V174.2H372V177.4H373V181.6H374V184.5H375V187.5H376V197.9H377V198.9H378V196.8H379V198.3H380V199.3H381V199.5H382V200.7H383V201.9H384V201.5H385V201.9H386V201.9H387V203.7H388V202.8H389V202.5H390V206.0H391V205.9H392V206.5H393V205.2H394V203.7H395V204.0H396V203.7H397V204.3H398V204.8H399V204.2H400V204.1H401V203.9H402V205.3H403V204.0H404V202.6H405V202.7H406V202.6H407V202.9H408V202.4H409V201.4H410V201.9H411V201.8H412V202.7H413V198.3H414V203.0H415V203.5H416V203.4H417V202.8H418V203.7H419V204.1H420V204.1H421V203.4H422V204.0H423V203.8H424V202.7H425V203.0H426V202.5H427V202.3H428V201.8H429V202.1H430V201.9H431V202.5H432V201.7H433V202.6H434V200.7H435V201.4H436V196.6H437V202.3H438V202.6H439V202.0H440V197.5H441V203.7H442V203.7H443V198.8H444V199.6H445V200.2H446V199.5H447V199.7H448V199.5H449V201.6H450V201.9H451V199.1H452V200.4H453V199.5H454V201.2H455V200.5H456V200.0H457V199.4H458V198.7H459V199.8H460V200.2H461V199.8H462V200.2H463V200.3H464V199.1H465V199.0H466V199.2H467V200.3H468V199.9H469V201.3H470V201.9H471V197.2H472V194.7H473V194.9H474V194.5H475V195.5H476V195.2H477V195.1H478V196.2H479V191.1H480V196.0H481V196.0H482V196.2H483V197.0H484V201.3H485V195.0H486V194.6H487V195.0H488V193.6H489V194.0H490V195.2H491V194.8H492V191.4H493V192.1H494V193.1H495V192.7H496V191.0H497V191.3H498V190.8H499V186.6H500V192.9H501V191.6H502V191.0H503V190.6H504V190.6H505V190.7H506V191.7H507V189.3H508V187.0H509V187.8H510V184.6H511V177.5H512V179.2H513V176.6H514V175.7H515V174.9H516V175.4H517V170.8H518V177.0H519V174.3H520V169.2H521V169.5H522V172.1H523V166.1H524V165.2H525V165.4H526V167.5H527V167.3H528V166.1H529V169.0H530V167.3H531V166.2H532V168.1H533V171.2H534V171.5H535V159.7H536V171.0H537V169.3H538V163.6H539V164.8H540V161.2H541V164.6H542V167.0H543V162.7H544V163.1H545V164.6H546V169.7H547V176.4H548V173.8H549V173.5H550V172.0H551V171.5H552V168.9H553V169.2H554V168.3H555V166.1H556V162.5H557V164.3H558V162.9H559V157.8H560V162.3H561V161.6H562V163.9H563V161.0H564V155.7H565V162.0H566V162.9H567V161.2H568V162.2H569V166.4H570V172.7H571V179.7H572V165.7H573V163.4H574V167.1H575V167.0H576V164.9H577V164.6H578V165.4H579V154.6H580V165.9H581V166.8H582V167.2H583V170.3H584V169.5H585V168.9H586V167.0H587V165.1H588V167.6H589V162.7H590V164.0H591V163.6H592V158.0H593V170.5H594V178.6H595V189.8H596V194.9H597V203.2H598V208.6H599V208.6H600V208.4H601V208.6H602V208.6H603V208.5H604V208.3H605V208.6H606V208.3H607V208.6H608V208.6H609V208.6H610V208.6H611V197.5H612V186.3H613V178.2H614V178.7H615V172.3H616V182.0H617V184.6H618V177.2H619V169.5H620V169.2H621V178.0H622V183.1H623V188.4H624V195.3H625V200.6H626V190.0H627V196.1H628V193.1H629V189.8H630V182.3H631V179.9H632V177.7H633V176.2H634V170.0H635V169.7H636V169.9H637V163.3H638V168.3H639V172.1H640V172.6H641V165.0H642V180.5H643V184.1H644V192.2H645V194.7H646V190.3H647V186.2H648V177.8H649V175.1H650V176.5H651V174.7H652V176.0H653V173.2H654V172.5H655V174.2H656V173.5H657V166.5H658V176.1H659V173.1H660V178.9H661V179.6H662V179.0H663V181.2H664V182.1H665V175.2H666V181.4H667V179.4H668V174.0H669V181.5H670V172.6H671V177.4H672V175.4H673V169.7H674V172.6H675V175.9H676V181.9H677V183.6H678V187.6H679V187.5H680V193.8H681V195.0H682V197.4H683V190.5H684V183.8H685V191.6H686V189.5H687V183.9H688V189.0H689V196.6H690V201.3H691V195.8H692V186.1H693V179.3H694V169.8H695V164.3H696V169.1H697V169.1H698V172.2H699V172.1H700V173.2H701V174.0H702V174.6H703V174.9H704V178.2H705V177.4H706V174.5H707V167.1H708V164.5H709V162.0H710V165.0H711V153.5H712V163.8H713V165.1H714V169.5H715V170.1H716V174.9H717V182.8H718V187.6H719V191.9H720V195.0H721V184.6H722V178.2H723V172.6H724V173.9H725V177.7H726V175.8H727V180.9H728V177.3H729V178.0H730V174.2H731V169.9H732V170.7H733V162.5H734V179.0H735V177.8H736V170.1H737V172.2H738V173.5H739V176.4H740V176.7H741V180.0H742V174.9H743V184.8H744V187.5H745V191.1H746V192.1H747V194.4H748V196.9H749V197.9H750V189.7H751V181.0H752V178.4H753V165.1H754V164.6H755V155.4H756V160.2H757V175.0H758V174.8H759V174.1H760V158.8H761V157.2H762V157.9H763V157.3H764V157.4H765V152.7H766V154.3H767V157.2H768V162.8H769V164.1H770V164.4H771V164.9H772V164.5H773V166.8H774V164.0H775V163.4H776V163.1H777V155.9H778V161.2H779V162.2H780V161.1H781V159.6H782V161.1H783V157.7H784V148.6H785V147.1H786V161.6H787V161.2H788V161.9H789V158.8H790V159.9H791V163.4H792V167.7H793V169.9H794V186.8H795V189.6H796V193.6H797V182.1H798V187.7H799V187.9H800V188.6H801V187.9H802V187.9H803V187.6H804V187.5H805V185.5H806V186.3H807V182.7H808V184.3H809V188.6H810V193.0H811V195.9H812V197.5H813V199.6H814V201.7H815V202.4H816V202.9H817V204.9H818V207.6H819V198.4H820V190.5H821V183.1H822V180.9H823V182.3H824V179.6H825V174.2H826V181.6H827V180.2H828V178.6H829V182.2H830V191.2H831V193.6H832V199.6H833V205.9H834V206.2H835V205.0H836V206.8H837V208.5H838V206.5H839V208.5H840V208.6H841V208.6H842V206.8H843V208.6H844V208.6H845V208.6H846V208.6H847V208.6H848V208.6H849V208.6H850V208.6H851V211.0H850V211.0H849V211.0H848V211.0H847V211.0H846V211.0H845V211.0H844V211.0H843V211.0H842V211.0H841V211.0H840V211.0H839V211.0H838V211.1H837V211.8H836V211.8H835V213.4H834V212.7H833V218.2H832V218.2H831V220.0H830V221.4H829V224.4H828V222.3H827V223.6H826V223.4H825V230.1H824V225.6H823V225.9H822V234.8H821V229.8H820V220.9H819V213.2H818V214.8H817V216.2H816V216.3H815V218.1H814V220.1H813V222.0H812V224.8H811V228.5H810V225.6H809V227.2H808V241.4H807V233.8H806V236.3H805V230.2H804V228.7H803V230.3H802V235.1H801V228.7H800V235.3H799V228.3H798V228.7H797V232.0H796V238.6H795V243.2H794V248.0H793V261.5H792V255.8H791V240.4H790V242.0H789V255.8H788V256.3H787V254.2H786V240.7H785V248.0H784V257.0H783V242.0H782V247.0H781V247.8H780V233.0H779V233.1H778V231.1H777V244.6H776V244.3H775V233.3H774V233.9H773V239.5H772V238.2H771V238.8H770V244.1H769V250.8H768V242.7H767V244.2H766V251.3H765V259.2H764V256.9H763V237.5H762V236.7H761V252.2H760V251.6H759V251.0H758V249.1H757V249.5H756V250.2H755V247.7H754V252.5H753V240.1H752V232.4H751V225.7H750V220.3H749V223.9H748V222.8H747V222.8H746V226.2H745V227.5H744V230.7H743V230.2H742V234.6H741V236.5H740V237.7H739V236.0H738V238.6H737V239.9H736V241.2H735V235.2H734V243.7H733V244.3H732V239.3H731V237.5H730V237.4H729V235.7H728V234.4H727V234.6H726V234.2H725V230.3H724V230.4H723V228.2H722V231.7H721V228.6H720V228.7H719V232.3H718V232.8H717V236.9H716V235.5H715V237.3H714V243.2H713V243.8H712V246.7H711V249.2H710V252.8H709V253.6H708V246.9H707V241.4H706V238.5H705V243.3H704V240.6H703V243.7H702V242.4H701V244.4H700V245.5H699V239.1H698V240.2H697V239.6H696V239.8H695V236.1H694V229.2H693V225.0H692V218.6H691V217.0H690V221.5H689V225.1H688V230.8H687V230.9H686V228.1H685V223.6H684V226.6H683V223.8H682V220.4H681V221.2H680V222.0H679V223.4H678V225.6H677V230.4H676V234.6H675V240.1H674V244.9H673V244.1H672V243.7H671V240.5H670V236.7H669V235.5H668V231.2H667V227.9H666V230.6H665V230.0H664V231.3H663V233.1H662V234.7H661V233.2H660V224.8H659V225.0H658V225.6H657V240.6H656V234.2H655V236.6H654V236.4H653V237.8H652V236.9H651V240.1H650V246.0H649V234.6H648V231.0H647V225.0H646V222.2H645V221.3H644V224.2H643V228.6H642V230.9H641V239.0H640V232.9H639V237.3H638V235.5H637V234.3H636V234.8H635V234.0H634V233.3H633V231.4H632V230.4H631V228.1H630V227.5H629V225.8H628V223.9H627V221.2H626V219.5H625V221.0H624V223.0H623V225.7H622V225.9H621V228.6H620V222.0H619V228.6H618V227.9H617V226.9H616V229.7H615V232.9H614V230.1H613V223.0H612V217.3H611V211.4H610V211.0H609V212.8H608V211.2H607V211.0H606V211.1H605V211.6H604V211.7H603V211.1H602V211.3H601V211.0H600V211.0H599V211.0H598V218.0H597V226.8H596V238.6H595V243.5H594V257.3H593V256.8H592V255.2H591V256.0H590V239.1H589V251.7H588V241.1H587V239.6H586V243.1H585V246.9H584V245.5H583V245.8H582V245.3H581V242.7H580V246.4H579V247.0H578V248.9H577V248.1H576V252.1H575V258.7H574V261.4H573V252.0H572V251.7H571V252.1H570V252.6H569V250.4H568V250.9H567V251.9H566V250.3H565V251.1H564V257.2H563V247.4H562V250.2H561V252.2H560V251.8H559V254.6H558V250.7H557V253.4H556V252.8H555V251.3H554V251.8H553V249.1H552V252.0H551V247.0H550V233.9H549V237.9H548V237.2H547V250.9H546V254.6H545V252.8H544V242.1H543V254.2H542V252.8H541V250.4H540V254.0H539V261.7H538V257.4H537V251.6H536V244.5H535V252.2H534V250.8H533V257.6H532V253.2H531V251.2H530V251.7H529V251.7H528V248.5H527V247.6H526V249.8H525V250.8H524V249.0H523V251.4H522V249.1H521V247.9H520V246.4H519V245.4H518V243.6H517V241.8H516V241.6H515V241.2H514V239.8H513V240.2H512V237.7H511V234.8H510V231.7H509V225.3H508V225.8H507V223.0H506V223.7H505V229.5H504V232.8H503V226.2H502V223.0H501V224.1H500V228.5H499V232.1H498V227.4H497V226.9H496V225.9H495V226.7H494V226.4H493V226.2H492V226.5H491V226.4H490V226.3H489V224.5H488V224.2H487V225.4H486V223.4H485V223.9H484V222.0H483V223.2H482V223.4H481V222.8H480V219.0H479V218.3H478V218.6H477V222.4H476V227.6H475V222.6H474V221.8H473V220.7H472V221.2H471V220.2H470V221.6H469V221.3H468V219.3H467V218.0H466V218.3H465V219.1H464V219.1H463V219.5H462V218.7H461V219.2H460V219.7H459V218.4H458V218.7H457V219.8H456V218.4H455V218.7H454V218.7H453V220.2H452V219.1H451V220.1H450V218.5H449V220.3H448V220.0H447V219.0H446V219.6H445V219.5H444V218.1H443V217.4H442V217.4H441V217.2H440V215.0H439V214.9H438V214.9H437V218.0H436V217.0H435V217.9H434V214.8H433V214.6H432V214.5H431V217.8H430V215.5H429V219.2H428V214.7H427V215.7H426V216.0H425V214.6H424V214.8H423V215.0H422V215.3H421V214.4H420V214.1H419V215.1H418V214.8H417V215.3H416V214.3H415V214.5H414V215.3H413V215.4H412V213.8H411V216.2H410V216.0H409V216.4H408V215.4H407V215.3H406V216.1H405V215.0H404V215.3H403V215.3H402V215.6H401V213.8H400V214.7H399V215.0H398V215.6H397V215.4H396V217.1H395V215.5H394V215.0H393V216.3H392V215.6H391V215.8H390V217.1H389V216.5H388V217.4H387V216.9H386V216.9H385V216.7H384V216.0H383V216.6H382V218.0H381V219.8H380V219.6H379V221.6H378V223.1H377V226.2H376V229.0H375V230.0H374V232.0H373V233.2H372V235.1H371V236.1H370V237.7H369V238.8H368V240.0H367V242.8H366V250.7H365V248.0H364V252.5H363V250.9H362V252.6H361V251.7H360V250.1H359V249.3H358V253.7H357V253.3H356V253.7H355V253.9H354V257.0H353V241.6H352V255.7H351V253.4H350V261.7H349V254.3H348V239.1H347V236.9H346V234.5H345V247.0H344V247.6H343V249.0H342V248.1H341V250.3H340V250.3H339V251.0H338V251.4H337V258.0H336V251.6H335V250.4H334V255.0H333V253.9H332V266.9H331V257.7H330V254.3H329V250.7H328V236.0H327V242.0H326V243.2H325V242.8H324V241.9H323V241.6H322V241.4H321V238.0H320V233.3H319V229.2H318V223.1H317V218.6H316V218.4H315V218.2H314V224.4H313V226.0H312V239.0H311V260.8H310V262.9H309V253.7H308V242.0H307V240.7H306V238.1H305V248.6H304V248.6H303V248.1H302V243.6H301V243.8H300V237.6H299V238.3H298V234.7H297V233.7H296V231.7H295V229.1H294V228.3H293V226.2H292V221.3H291V220.4H290V221.5H289V220.0H288V220.5H287V220.6H286V216.1H285V217.8H284V217.3H283V215.9H282V215.7H281V214.3H280V213.1H279V215.9H278V218.9H277V224.0H276V228.0H275V231.5H274V235.3H273V233.6H272V224.5H271V224.3H270V222.9H269V229.1H268V229.3H267V226.6H266V228.2H265V227.1H264V227.8H263V227.1H262V231.0H261V229.9H260V230.3H259V231.7H258V231.6H257V231.8H256V229.8H255V230.9H254V230.5H253V229.0H252V231.4H251V231.2H250V230.4H249V232.0H248V232.4H247V226.7H246V227.3H245V234.7H244V230.6H243V232.5H242V230.7H241V227.9H240V228.5H239V229.1H238V224.3H237V224.9H236V224.5H235V228.7H234V225.3H233V226.2H232V226.7H231V226.5H230V228.4H229V229.8H228V230.4H227V223.9H226V224.4H225V230.8H224V228.3H223V227.7H222V226.5H221V226.4H220V230.8H219V224.2H218V223.1H217V223.0H216V221.2H215V221.9H214V221.8H213V224.4H212V220.9H211V219.9H210V221.4H209V222.5H208V223.4H207V224.4H206V225.3H205V224.7H204V224.5H203V224.0H202V224.4H201V222.8H200V219.6H199V219.8H198V227.6H197V227.9H196V223.0H195V223.8H194V222.2H193V225.9H192V221.5H191V221.3H190V223.6H189V226.4H188V229.8H187V230.9H186V231.2H185V231.6H184V235.3H183V237.7H182V237.3H181V237.4H180V239.9H179V231.4H178V228.3H177V225.7H176V224.6H175V223.2H174V222.8H173V221.6H172V221.3H171V223.1H170V218.4H169V219.3H168V219.3H167V218.7H166V218.5H165V219.8H164V220.8H163V222.9H162V224.1H161V223.1H160V224.5H159V224.9H158V224.2H157V222.8H156V223.6H155V218.8H154V217.0H153V215.5H152V214.6H151V215.5H150V215.3H149V215.4H148V217.5H147V219.8H146V222.1H145V223.2H144V229.5H143V233.5H142V229.8H141V230.8H140V230.5H139V228.9H138V229.9H137V228.6H136V228.7H135V226.5H134V227.9H133V220.4H132V221.0H131V223.6H130V218.5H129V219.5H128V221.1H127V222.0H126V223.8H125V224.3H124V222.9H123V226.2H122V223.9H121V227.0H120V227.2H119V229.7H118V228.5H117V225.8H116V226.1H115V224.4H114V224.0H113V222.4H112V220.6H111V220.7H110V218.6H109V222.8H108V220.2H107V219.9H106V223.3H105V229.0H104V233.0H103V235.8H102V230.5H101V234.4H100V235.5H99V233.8H98V232.8H97V232.4H96V232.7H95V232.2H94V229.4H93V230.2H92V227.3H91V225.5H90V224.3H89V220.6H88V220.8H87V223.5H86V225.6H85V227.4H84V232.9H83V230.5H82V230.5H81V227.8H80V227.6H79V222.1H78V225.5H77V225.4H76V224.0H75V223.8H74V222.5H73V227.5H72V223.3H71V223.3H70V223.3H69V224.8H68V225.9H67V228.6H66V235.8H65V229.3H64V227.3H63V225.1H62V224.9H61V223.0H60V223.9H59V223.5H58V224.6H57V226.1H56V226.0H55V225.4H54V223.9H53V223.5H52V223.9H51V225.6H50V223.9H49V224.6H48V222.9H47V218.9H46V218.4H45V219.1H44V227.2H43V227.2H42V228.6H41V231.0H40V230.1H39V231.1H38V228.3H37V226.6H36V223.8H35V225.3H34V223.3H33V223.1H32V222.9H31V221.6H30V222.8H29V217.7H28V217.8H27V221.4H26V220.8H25V221.0H24V220.6H23V221.5H22V219.4H21Z" fill="#ffd966" clip-path="url(#c1)"/>
 <path d="M21,321.5H22V322.2H23V322.0H24V321.0H25V321.8H26V320.6H27V321.9H28V320.9H29V319.7H30V323.5H31V322.9H32V319.4H33V312.9H34V318.2H35V317.8H36V322.7H37V322.8H38V318.2H39V321.4H40V317.6H41V317.8H42V318.2H43V319.1H44V319.7H45V319.9H46V316.6H47V320.8H48V322.2H49V321.5H50V320.4H51V318.1H52V319.1H53V317.0H54V317.6H55V317.7H56V316.7H57V316.7H58V315.4H59V316.3H60V310.6H61V314.7H62V314.7H63V314.4H64V317.3H65V312.5H66V314.0H67V314.8H68V313.3H69V314.5H70V315.8H71V314.5H72V316.0H73V316.6H74V315.6H75V316.7H76V316.7H77V315.1H78V314.8H79V319.3H80V318.3H81V318.8H82V314.8H83V314.1H84V318.0H85V319.0H86V320.6H87V316.3H88V313.7H89V314.4H90V312.8H91V312.6H92V313.3H93V311.7H94V311.8H95V310.4H96V316.1H97V315.8H98V308.4H99V308.7H100V307.2H101V307.4H102V307.1H103V307.6H104V307.5H105V311.9H106V314.6H107V320.0H108V324.7H109V324.2H110V322.8H111V321.3H112V319.7H113V321.0H114V320.2H115V319.7H116V319.3H117V316.8H118V317.1H119V317.5H120V317.4H121V315.6H122V317.1H123V316.5H124V317.0H125V316.5H126V317.9H127V320.7H128V321.5H129V321.3H130V319.3H131V317.9H132V318.1H133V318.0H134V317.3H135V324.1H136V323.8H137V316.2H138V316.9H139V315.7H140V315.1H141V307.8H142V315.9H143V315.3H144V315.6H145V309.0H146V316.0H147V318.8H148V320.7H149V324.5H150V324.5H151V323.7H152V323.1H153V322.2H154V321.9H155V320.4H156V320.0H157V318.6H158V317.6H159V318.9H160V318.0H161V315.5H162V319.2H163V321.6H164V320.7H165V321.2H166V322.8H167V322.7H168V322.5H169V321.6H170V321.3H171V319.3H172V319.8H173V316.9H174V311.7H175V314.2H176V312.5H177V310.4H178V304.8H179V309.4H180V306.0H181V308.5H182V306.0H183V306.5H184V306.8H185V307.9H186V307.1H187V311.4H188V320.2H189V322.8H190V322.0H191V322.6H192V321.3H193V318.1H194V318.2H195V316.3H196V315.5H197V316.5H198V315.6H199V314.3H200V313.0H201V313.1H202V314.5H203V313.1H204V314.6H205V314.5H206V314.5H207V314.9H208V318.7H209V319.4H210V318.1H211V320.0H212V319.3H213V319.5H214V318.8H215V319.8H216V319.2H217V317.0H218V313.6H219V317.3H220V316.9H221V308.6H222V317.3H223V315.8H224V314.1H225V317.8H226V318.8H227V318.1H228V315.5H229V314.7H230V313.2H231V314.5H232V314.1H233V315.4H234V313.3H235V315.8H236V312.6H237V311.9H238V315.4H239V315.2H240V316.5H241V315.3H242V308.5H243V309.4H244V309.5H245V309.0H246V308.2H247V311.0H248V310.9H249V309.4H250V310.0H251V300.5H252V307.0H253V304.9H254V299.9H255V305.6H256V304.5H257V297.3H258V302.0H259V305.3H260V307.9H261V310.9H262V310.9H263V318.2H264V319.9H265V315.3H266V313.0H267V311.9H268V309.8H269V308.4H270V308.7H271V303.8H272V302.2H273V300.5H274V299.4H275V304.6H276V310.7H277V314.6H278V321.9H279V324.9H280V325.7H281V323.4H282V324.1H283V322.9H284V323.3H285V323.5H286V319.2H287V319.3H288V317.9H289V317.6H290V315.3H291V314.4H292V312.7H293V310.8H294V309.8H295V309.8H296V307.3H297V307.5H298V305.2H299V304.9H300V304.3H301V296.4H302V301.9H303V302.3H304V311.0H305V298.0H306V296.2H307V294.5H308V278.6H309V288.0H310V284.2H311V290.3H312V300.7H313V313.7H314V317.2H315V316.9H316V317.8H317V316.5H318V319.9H319V309.1H320V296.1H321V288.8H322V303.5H323V303.9H324V287.7H325V292.2H326V291.1H327V291.6H328V289.3H329V288.6H330V289.2H331V293.6H332V282.6H333V291.7H334V289.8H335V290.2H336V288.9H337V289.5H338V299.5H339V300.9H340V298.0H341V286.8H342V285.9H343V289.1H344V287.0H345V289.0H346V278.6H347V290.4H348V288.7H349V288.3H350V287.8H351V289.8H352V289.0H353V288.1H354V289.6H355V287.7H356V287.4H357V290.3H358V287.8H359V288.9H360V288.4H361V289.0H362V289.6H363V297.8H364V295.2H365V293.5H366V297.9H367V299.6H368V302.2H369V307.7H370V308.2H371V311.9H372V314.7H373V316.5H374V314.0H375V320.3H376V322.6H377V322.5H378V324.1H379V325.2H380V328.5H381V328.5H382V325.2H383V328.0H384V327.2H385V327.8H386V327.1H387V329.5H388V329.6H389V329.5H390V328.3H391V329.8H392V328.2H393V328.5H394V329.0H395V328.7H396V328.7H397V326.2H398V329.9H399V328.7H400V329.5H401V328.4H402V329.8H403V329.5H404V329.1H405V329.6H406V328.9H407V327.9H408V329.1H409V329.1H410V329.2H411V329.1H412V328.6H413V326.6H414V327.7H415V328.3H416V328.4H417V328.1H418V328.8H419V327.9H420V327.8H421V327.4H422V328.4H423V328.4H424V327.9H425V324.5H426V327.7H427V328.0H428V326.9H429V327.7H430V326.8H431V326.6H432V327.0H433V327.7H434V325.0H435V326.9H436V326.5H437V326.5H438V326.1H439V325.8H440V325.2H441V326.9H442V325.9H443V326.8H444V326.1H445V325.7H446V326.9H447V326.4H448V326.5H449V325.4H450V325.5H451V326.0H452V326.2H453V325.1H454V325.6H455V326.7H456V324.6H457V325.8H458V324.8H459V325.1H460V324.6H461V325.6H462V325.2H463V324.3H464V323.7H465V324.7H466V323.9H467V326.4H468V324.0H469V322.8H470V322.5H471V322.6H472V325.9H473V326.7H474V321.8H475V321.0H476V321.5H477V321.3H478V320.4H479V321.0H480V320.2H481V320.0H482V320.2H483V319.7H484V321.2H485V320.9H486V319.7H487V319.6H488V319.6H489V320.0H490V319.7H491V320.7H492V320.1H493V319.3H494V318.4H495V318.0H496V318.8H497V317.7H498V316.6H499V317.3H500V315.5H501V315.6H502V315.8H503V313.5H504V315.4H505V313.4H506V314.2H507V313.7H508V313.6H509V311.2H510V304.1H511V310.4H512V308.4H513V306.5H514V305.9H515V298.0H516V302.7H517V301.3H518V313.8H519V289.6H520V296.2H521V295.4H522V292.7H523V289.1H524V286.3H525V286.6H526V285.3H527V285.6H528V289.2H529V288.1H530V288.6H531V289.4H532V292.4H533V294.0H534V292.3H535V291.1H536V289.6H537V290.9H538V289.6H539V286.4H540V295.1H541V293.8H542V285.5H543V284.6H544V284.3H545V285.6H546V276.2H547V283.2H548V275.6H549V283.8H550V284.2H551V285.0H552V286.7H553V287.9H554V287.2H555V287.9H556V283.0H557V289.5H558V288.9H559V290.2H560V290.6H561V289.0H562V289.8H563V290.3H564V305.2H565V286.0H566V290.3H567V290.6H568V288.1H569V287.6H570V285.6H571V287.4H572V289.4H573V287.5H574V286.5H575V284.1H576V286.2H577V287.9H578V284.7H579V286.1H580V284.4H581V287.1H582V286.9H583V282.9H584V283.2H585V282.0H586V285.4H587V284.6H588V281.2H589V280.8H590V281.0H591V277.7H592V281.5H593V287.0H594V299.3H595V312.1H596V325.5H597V328.8H598V331.4H599V332.6H600V331.6H601V332.6H602V332.6H603V332.6H604V332.6H605V332.6H606V332.6H607V332.6H608V332.6H609V332.6H610V329.3H611V322.0H612V315.3H613V307.5H614V302.3H615V294.1H616V296.9H617V298.8H618V305.6H619V305.1H620V309.7H621V306.2H622V315.1H623V315.0H624V320.6H625V324.6H626V309.6H627V304.6H628V298.9H629V301.0H630V300.9H631V297.3H632V298.5H633V295.7H634V296.6H635V294.6H636V296.3H637V296.1H638V287.8H639V297.2H640V296.0H641V295.5H642V298.9H643V292.7H644V299.4H645V300.0H646V298.0H647V297.1H648V298.4H649V295.2H650V293.5H651V293.2H652V291.7H653V291.8H654V291.3H655V289.9H656V292.8H657V291.8H658V296.4H659V294.2H660V298.2H661V301.4H662V303.5H663V302.5H664V303.5H665V304.6H666V317.6H667V318.7H668V310.1H669V308.6H670V305.9H671V303.3H672V300.8H673V287.2H674V299.2H675V304.7H676V305.7H677V309.9H678V319.7H679V321.9H680V318.6H681V320.4H682V318.4H683V321.0H684V317.9H685V322.7H686V323.2H687V321.8H688V324.0H689V322.9H690V314.5H691V306.1H692V298.8H693V290.8H694V293.3H695V291.9H696V290.7H697V292.3H698V292.6H699V294.2H700V293.6H701V292.8H702V293.2H703V290.6H704V289.9H705V291.1H706V289.4H707V286.5H708V306.1H709V305.8H710V286.7H711V284.3H712V290.0H713V288.0H714V307.6H715V308.6H716V299.3H717V302.0H718V306.5H719V311.0H720V313.4H721V305.3H722V299.0H723V292.6H724V288.8H725V289.3H726V289.7H727V287.2H728V289.4H729V286.9H730V289.4H731V287.8H732V283.2H733V287.8H734V285.7H735V288.7H736V294.9H737V299.1H738V299.0H739V306.8H740V307.8H741V307.9H742V315.4H743V315.7H744V316.6H745V319.4H746V321.0H747V324.2H748V324.3H749V316.9H750V310.4H751V303.5H752V294.4H753V292.2H754V289.2H755V288.4H756V285.5H757V287.7H758V276.6H759V285.0H760V289.2H761V285.1H762V283.3H763V284.6H764V276.7H765V297.5H766V297.3H767V273.3H768V280.2H769V282.0H770V282.9H771V285.8H772V283.8H773V285.7H774V286.7H775V287.7H776V289.3H777V289.0H778V285.9H779V286.0H780V304.9H781V300.9H782V285.3H783V295.1H784V293.9H785V288.4H786V282.6H787V281.7H788V284.0H789V282.9H790V282.6H791V280.7H792V286.6H793V285.9H794V283.1H795V294.5H796V295.2H797V301.6H798V304.5H799V307.4H800V310.8H801V312.5H802V307.7H803V311.0H804V308.6H805V315.7H806V315.5H807V316.3H808V305.2H809V315.3H810V313.7H811V319.1H812V320.4H813V323.5H814V325.8H815V328.7H816V328.6H817V325.3H818V318.0H819V319.4H820V321.6H821V313.6H822V319.7H823V309.7H824V311.3H825V309.3H826V308.7H827V309.9H828V304.0H829V305.8H830V307.6H831V312.1H832V321.0H833V323.6H834V324.2H835V326.4H836V329.5H837V330.8H838V327.5H839V329.3H840V331.2H841V331.6H842V329.6H843V332.6H844V332.6H845V332.6H846V332.6H847V332.6H848V332.6H849V332.6H850V332.6H851V335.0H850V335.0H849V335.0H848V335.0H847V335.0H846V335.0H845V335.0H844V335.0H843V335.0H842V335.4H841V335.3H840V335.5H839V335.0H838V336.6H837V336.6H836V337.5H835V340.4H834V338.6H833V340.7H832V342.2H831V343.7H830V345.2H829V345.2H828V344.7H827V343.2H826V341.7H825V347.8H824V349.7H823V348.8H822V349.5H821V347.7H820V344.9H819V343.9H818V341.4H817V338.0H816V338.0H815V339.1H814V342.0H813V344.3H812V347.2H811V350.2H810V352.2H809V356.1H808V355.3H807V355.5H806V354.5H805V354.7H804V357.4H803V351.5H802V352.2H801V352.5H800V357.9H799V360.0H798V365.2H797V365.9H796V372.8H795V377.0H794V379.9H793V388.2H792V379.7H791V392.1H790V382.9H789V381.2H788V382.1H787V382.2H786V384.1H785V380.2H784V382.0H783V372.5H782V372.3H781V377.5H780V376.0H779V372.5H778V373.6H777V373.5H776V371.8H775V378.0H774V381.2H773V377.1H772V380.6H771V381.5H770V381.2H769V384.2H768V385.3H767V367.1H766V385.2H765V370.7H764V369.5H763V377.1H762V379.0H761V377.6H760V375.0H759V373.2H758V371.5H757V372.5H756V368.2H755V357.7H754V355.8H753V367.4H752V357.2H751V352.1H750V346.9H749V343.3H748V344.3H747V345.9H746V348.6H745V349.4H744V352.3H743V358.0H742V356.9H741V358.4H740V361.1H739V361.9H738V362.7H737V365.1H736V366.4H735V369.9H734V364.6H733V358.9H732V360.2H731V365.1H730V365.0H729V364.3H728V363.3H727V361.8H726V361.7H725V359.8H724V359.5H723V357.6H722V354.7H721V351.5H720V353.3H719V354.2H718V349.1H717V349.5H716V361.4H715V365.2H714V366.2H713V368.1H712V380.5H711V368.2H710V369.8H709V369.1H708V368.6H707V366.6H706V366.2H705V366.1H704V367.5H703V366.7H702V354.7H701V354.6H700V365.5H699V364.3H698V365.6H697V362.3H696V361.5H695V361.0H694V360.4H693V356.8H692V352.3H691V346.2H690V342.3H689V343.7H688V347.9H687V345.9H686V349.6H685V355.6H684V350.9H683V352.8H682V354.1H681V358.1H680V358.1H679V359.6H678V363.7H677V363.6H676V366.9H675V359.3H674V360.0H673V365.4H672V361.3H671V355.7H670V353.8H669V353.5H668V351.7H667V359.5H666V354.3H665V355.9H664V355.7H663V357.9H662V358.8H661V358.7H660V359.8H659V359.3H658V360.5H657V361.4H656V360.5H655V361.0H654V359.7H653V361.9H652V363.3H651V362.0H650V362.0H649V361.5H648V363.7H647V358.6H646V358.6H645V356.7H644V366.7H643V358.7H642V363.5H641V364.3H640V353.3H639V353.8H638V355.5H637V363.7H636V363.4H635V358.4H634V360.1H633V359.1H632V360.3H631V357.8H630V359.8H629V356.0H628V355.5H627V343.4H626V341.6H625V344.3H624V345.2H623V346.4H622V347.8H621V347.3H620V350.2H619V350.8H618V351.9H617V352.6H616V352.0H615V350.5H614V346.2H613V346.0H612V339.0H611V336.0H610V335.0H609V335.0H608V336.3H607V336.2H606V335.0H605V335.0H604V335.0H603V335.0H602V335.0H601V335.0H600V335.0H599V336.3H598V337.2H597V345.1H596V358.0H595V374.6H594V375.7H593V381.4H592V382.6H591V382.5H590V382.5H589V378.7H588V381.8H587V379.9H586V366.0H585V379.3H584V377.6H583V379.2H582V377.5H581V379.5H580V381.0H579V377.0H578V375.7H577V376.6H576V378.2H575V379.7H574V376.6H573V377.8H572V375.3H571V377.1H570V378.0H569V375.7H568V370.0H567V378.3H566V376.1H565V386.9H564V378.0H563V375.9H562V378.2H561V375.8H560V377.4H559V379.5H558V368.5H557V369.2H556V380.6H555V381.6H554V378.8H553V379.1H552V381.1H551V384.6H550V381.2H549V381.8H548V381.0H547V381.0H546V380.2H545V384.0H544V383.1H543V381.9H542V379.3H541V380.3H540V379.0H539V378.3H538V376.1H537V373.0H536V381.1H535V376.7H534V373.7H533V374.0H532V374.2H531V376.4H530V375.9H529V364.0H528V377.0H527V374.9H526V388.6H525V376.7H524V374.9H523V372.3H522V369.4H521V367.5H520V365.2H519V363.0H518V360.8H517V361.6H516V359.5H515V357.8H514V355.7H513V354.6H512V358.9H511V352.6H510V350.6H509V347.5H508V347.0H507V346.3H506V350.4H505V349.0H504V347.9H503V349.1H502V347.9H501V347.5H500V346.3H499V346.5H498V346.6H497V346.9H496V345.7H495V345.4H494V345.7H493V346.1H492V345.4H491V344.8H490V343.7H489V343.8H488V348.0H487V344.7H486V343.1H485V343.5H484V342.5H483V342.4H482V343.5H481V342.8H480V344.1H479V344.3H478V344.4H477V344.2H476V343.3H475V346.3H474V342.5H473V342.8H472V343.4H471V342.8H470V342.0H469V345.6H468V342.3H467V341.3H466V342.3H465V341.9H464V340.9H463V340.9H462V341.0H461V341.4H460V340.3H459V341.0H458V340.7H457V341.3H456V341.2H455V344.1H454V340.3H453V341.5H452V340.4H451V341.1H450V339.9H449V340.4H448V340.3H447V340.3H446V340.4H445V341.8H444V341.5H443V341.1H442V340.8H441V340.5H440V344.9H439V340.8H438V339.7H437V340.7H436V338.7H435V337.6H434V338.3H433V339.0H432V340.1H431V341.0H430V340.3H429V339.5H428V339.8H427V340.3H426V339.1H425V341.2H424V339.8H423V339.6H422V337.9H421V338.2H420V338.0H419V337.9H418V338.2H417V337.9H416V338.3H415V337.9H414V338.7H413V338.6H412V338.4H411V338.6H410V339.4H409V338.0H408V338.2H407V337.9H406V337.7H405V337.0H404V337.9H403V338.5H402V337.3H401V338.4H400V338.3H399V339.8H398V337.3H397V338.9H396V337.5H395V337.7H394V337.5H393V338.6H392V338.7H391V338.8H390V338.3H389V338.7H388V339.0H387V339.0H386V341.9H385V339.1H384V339.5H383V339.1H382V340.4H381V339.3H380V339.7H379V342.7H378V343.6H377V344.6H376V348.0H375V350.1H374V344.3H373V346.2H372V357.0H371V356.3H370V356.3H369V361.7H368V363.4H367V367.4H366V373.3H365V373.8H364V377.2H363V377.3H362V363.6H361V376.6H360V376.1H359V377.7H358V376.5H357V376.9H356V375.1H355V379.0H354V375.9H353V374.6H352V370.2H351V372.9H350V375.3H349V376.2H348V374.7H347V374.6H346V377.6H345V376.5H344V378.2H343V379.4H342V387.4H341V375.7H340V380.9H339V375.8H338V375.7H337V373.8H336V373.8H335V370.5H334V371.3H333V370.9H332V373.2H331V369.7H330V370.2H329V370.2H328V370.0H327V368.0H326V365.7H325V365.2H324V367.8H323V367.6H322V370.2H321V363.4H320V355.2H319V349.1H318V348.4H317V342.3H316V342.8H315V345.7H314V351.8H313V361.9H312V372.0H311V377.8H310V374.5H309V371.8H308V371.9H307V367.9H306V365.4H305V364.8H304V373.9H303V361.1H302V358.3H301V360.2H300V359.2H299V355.7H298V354.9H297V353.9H296V353.4H295V350.7H294V351.1H293V350.4H292V353.0H291V348.8H290V346.2H289V345.2H288V345.9H287V346.1H286V345.2H285V347.3H284V342.6H283V342.6H282V341.1H281V340.8H280V341.4H279V345.1H278V352.3H277V356.1H276V364.0H275V370.4H274V367.4H273V366.6H272V363.6H271V360.4H270V357.8H269V358.0H268V359.0H267V357.3H266V357.3H265V356.3H264V358.9H263V356.0H262V360.4H261V362.5H260V364.0H259V367.4H258V367.0H257V365.7H256V365.9H255V362.9H254V363.7H253V362.8H252V362.4H251V362.4H250V361.9H249V360.9H248V362.2H247V371.3H246V364.6H245V365.5H244V366.7H243V370.4H242V367.5H241V360.3H240V359.8H239V355.7H238V354.5H237V358.4H236V347.1H235V352.3H234V352.9H233V356.1H232V351.8H231V355.0H230V355.5H229V353.1H228V349.7H227V344.1H226V344.4H225V349.8H224V354.4H223V350.6H222V350.0H221V351.5H220V350.0H219V348.6H218V348.6H217V349.4H216V343.9H215V344.9H214V348.4H213V348.7H212V349.6H211V349.6H210V349.4H209V349.8H208V353.0H207V352.7H206V352.1H205V351.6H204V356.4H203V353.8H202V355.4H201V345.3H200V354.3H199V346.6H198V346.9H197V349.2H196V348.5H195V347.7H194V345.8H193V344.7H192V342.5H191V344.6H190V341.5H189V344.9H188V353.3H187V358.3H186V358.4H185V360.3H184V356.7H183V356.4H182V356.2H181V354.3H180V354.2H179V352.7H178V352.0H177V351.0H176V351.6H175V350.8H174V349.8H173V350.9H172V348.5H171V346.5H170V346.7H169V343.2H168V345.6H167V345.6H166V347.1H165V347.1H164V346.7H163V351.0H162V347.5H161V348.7H160V351.4H159V347.7H158V348.4H157V348.5H156V348.9H155V344.2H154V344.1H153V342.4H152V341.4H151V343.2H150V341.6H149V344.8H148V348.8H147V353.4H146V355.2H145V348.6H144V358.7H143V353.6H142V352.1H141V351.8H140V356.0H139V350.0H138V349.9H137V349.8H136V348.5H135V347.7H134V348.2H133V348.6H132V347.1H131V346.8H130V347.0H129V347.4H128V351.7H127V347.3H126V348.2H125V348.7H124V348.6H123V347.6H122V346.8H121V349.7H120V348.5H119V349.6H118V348.0H117V346.0H116V347.5H115V345.0H114V346.2H113V342.1H112V341.8H111V345.1H110V343.6H109V343.7H108V347.7H107V350.7H106V352.6H105V360.1H104V359.5H103V363.7H102V356.8H101V357.0H100V360.2H99V354.7H98V353.7H97V353.7H96V353.1H95V353.9H94V352.0H93V352.4H92V354.4H91V350.9H90V351.1H89V350.9H88V350.7H87V349.7H86V350.2H85V350.6H84V350.1H83V350.2H82V350.3H81V349.8H80V349.6H79V346.2H78V346.6H77V350.3H76V350.8H75V348.6H74V350.5H73V349.6H72V350.8H71V348.7H70V349.2H69V348.4H68V352.1H67V354.3H66V351.0H65V354.2H64V347.5H63V347.0H62V346.5H61V353.1H60V349.1H59V348.7H58V347.7H57V348.8H56V350.0H55V347.5H54V347.7H53V348.4H52V346.1H51V346.6H50V345.3H49V343.9H48V345.1H47V344.2H46V345.4H45V348.0H44V350.6H43V345.7H42V347.8H41V347.6H40V347.6H39V346.7H38V344.2H37V349.2H36V346.3H35V346.8H34V350.1H33V346.9H32V345.8H31V346.1H30V344.4H29V345.7H28V345.1H27V343.6H26V343.5H25V346.2H24V343.8H23V343.6H22V343.4H21Z" fill="#ffd966" clip-path="url(#c2)"/>
</svg>
<div class="a txt" style="left:24px;top:153px;font-size:11px;color:#e8e8ea;letter-spacing:-0.5px">The Rise</div>
<div class="a txt" style="left:608px;top:153px;font-size:11px;color:#e8e8ea;letter-spacing:-0.4px">The Fall</div>
<div class="a" style="left:474px;top:151px;width:1px;height:241px;background:#e0222a"></div>
<div class="a" style="left:604px;top:151px;width:1px;height:241px;background:#3a9a6a"></div>
<svg class="a" style="left:469px;top:134px" width="10" height="16" viewBox="0 0 10 16"><path d="M0,0H10V11.5L5,16L0,11.5Z" fill="#d01018" opacity="0.92"/></svg>

<!-- scrollbar -->
<div class="a" style="left:20px;top:393px;width:831px;height:20px;background:#4a4d57"></div>
<div class="a btn" style="left:20px;top:393px;width:20px;height:20px;border-radius:0;box-shadow:none"></div>
<svg class="a" style="left:26px;top:398px" width="8" height="10"><path d="M7,0V10L1,5Z" fill="#111"/></svg>
<div class="a" style="left:44px;top:397px;width:2px;height:12px;background:#c9cbd2"></div>
<div class="a" style="left:47px;top:397px;width:737px;height:12px;background:#c6c8cf"></div>
<div class="a" style="left:785px;top:397px;width:2px;height:12px;background:#c9cbd2"></div>
<div class="a btn" style="left:791px;top:393px;width:60px;height:20px;border-radius:0;box-shadow:none"></div>
<div class="a" style="left:810px;top:393px;width:2px;height:20px;background:#8e9096"></div>
<div class="a" style="left:830px;top:393px;width:2px;height:20px;background:#8e9096"></div>
<svg class="a" style="left:794px;top:396px" width="14" height="14" viewBox="0 0 14 14"><circle cx="6" cy="6" r="4.3" stroke="#111" stroke-width="1.8" fill="none"/><path d="M9,9L12.5,12.5" stroke="#111" stroke-width="2.2"/><path d="M6,3.8V8.2M3.8,6H8.2" stroke="#111" stroke-width="1.3"/></svg>
<svg class="a" style="left:814px;top:396px" width="14" height="14" viewBox="0 0 14 14"><circle cx="6" cy="6" r="4.3" stroke="#111" stroke-width="1.8" fill="none"/><path d="M9,9L12.5,12.5" stroke="#111" stroke-width="2.2"/><path d="M3.8,6H8.2" stroke="#111" stroke-width="1.3"/></svg>
<svg class="a" style="left:837px;top:398px" width="8" height="10"><path d="M1,0V10L7,5Z" fill="#111"/></svg>

<!-- transport -->
<div class="a grp" style="left:20px;width:223px"></div>
<div class="a" style="left:84px;top:421px;width:32px;height:28px;background:linear-gradient(#fbbd28,#dd9e1c)"></div>
<div class="a" style="left:51px;top:421px;width:2px;height:28px;background:#acadb3"></div>
<div class="a" style="left:148px;top:421px;width:2px;height:28px;background:#acadb3"></div>
<div class="a" style="left:180px;top:421px;width:2px;height:28px;background:#acadb3"></div>
<div class="a" style="left:212px;top:421px;width:2px;height:28px;background:#acadb3"></div>
<svg class="a" style="left:0;top:0" width="560" height="460"><g fill="#0a0a0a">
<rect x="30" y="428" width="3.5" height="14"/><path d="M41.2,428V442L33.5,435Z"/>
<path d="M68,428V442L61,435Z"/><path d="M75.2,428V442L68.2,435Z"/>
<path d="M96,429V442L103,435.5Z"/>
<rect x="125" y="428" width="5" height="14"/><rect x="134.3" y="428" width="4.8" height="14"/>
<rect x="157" y="428" width="14" height="14"/>
<path d="M188.3,428V442L195.5,435Z"/><path d="M195.6,428V442L202.8,435Z"/>
<path d="M222,428V442L228.6,435Z"/><rect x="228.6" y="428" width="4.4" height="14"/>
</g></svg>
<div class="a grp" style="left:260px;width:96px"></div>
<div class="a" style="left:291px;top:421px;width:2px;height:28px;background:#acadb3"></div>
<div class="a" style="left:323px;top:421px;width:2px;height:28px;background:#acadb3"></div>
<svg class="a" style="left:268px;top:428px" width="16" height="14" viewBox="0 0 16 14"><g stroke="#0a0a0a" fill="none" stroke-width="1.2"><ellipse cx="3.8" cy="4.6" rx="2.4" ry="1.9" transform="rotate(25 3.8 4.6)"/><ellipse cx="3.8" cy="10.6" rx="2.4" ry="1.9" transform="rotate(-25 3.8 10.6)"/></g><path d="M5.6,5.8L14.6,11.4L14.2,12.1L5.2,7.6Z M5.6,9.4L14.6,3.8L14.2,3.1L5.2,7.6Z" fill="#d8d9de" stroke="#0a0a0a" stroke-width="0.9"/></svg>
<svg class="a" style="left:300px;top:427px" width="17" height="16" viewBox="0 0 17 16"><g stroke="#0a0a0a" stroke-width="1.3" fill="#e2e3e8" stroke-linejoin="miter"><path d="M4,1.2H9.4V11.3H1.6V3.8Z"/><path d="M8.7,4.8H14.6V14.4H6.2V7.4Z"/></g></svg>
<svg class="a" style="left:332px;top:427px" width="17" height="16" viewBox="0 0 17 16"><rect x="1.2" y="1" width="9.3" height="11.8" fill="#606166"/><rect x="2.8" y="2.2" width="6.2" height="1.1" fill="#c9cacf"/><path d="M8.4,5.4H14.6V14.3H6.4V7.6Z" fill="#d4d5da" stroke="#606166" stroke-width="1.2"/></svg>
<div class="a grp" style="left:372px;width:88px"></div>
<div class="a" style="left:415px;top:421px;width:2px;height:28px;background:#acadb3"></div>
<svg class="a" style="left:378px;top:427px" width="19" height="16" viewBox="0 0 19 16"><path d="M3.5,6.5 C6,3 13,2.5 15,7 C16.5,10 14.5,13 12,15" stroke="#111" stroke-width="2.8" fill="none"/><path d="M0,2V9.5H7.5Z" fill="#111"/></svg>
<svg class="a" style="left:401px;top:433px" width="10" height="5"><path d="M0,0H9L4.5,4.5Z" fill="#b3121a"/></svg>
<svg class="a" style="left:422px;top:427px" width="19" height="16" viewBox="0 0 19 16"><path d="M15.5,6.5 C13,3 6,2.5 4,7 C2.5,10 4.5,13 7,15" stroke="#707278" stroke-width="2.8" fill="none"/><path d="M19,2V9.5H11.5Z" fill="#707278"/></svg>
<svg class="a" style="left:445px;top:433px" width="10" height="5"><path d="M0,0H9L4.5,4.5Z" fill="#707278"/></svg>
<div class="a grp" style="left:476px;width:64px"></div>
<div class="a" style="left:507px;top:421px;width:2px;height:28px;background:#acadb3"></div>
<svg class="a" style="left:483px;top:428px" width="18" height="14" viewBox="0 0 18 14"><path d="M1.5,0.6V12.6H17.2" stroke="#0a0a0a" stroke-width="1.3" fill="none"/><path d="M3,6.4 L6.3,2 L10.6,6.2 L13.6,4 L16,10.9 H3 Z" fill="#0a0a0a"/></svg>
<svg class="a" style="left:516px;top:427px" width="16" height="15" viewBox="0 0 16 15"><g fill="#111"><rect x="5" y="2" width="11" height="2.4"/><rect x="5" y="6.3" width="11" height="2.4"/><rect x="5" y="10.6" width="11" height="2.4"/></g><text x="0" y="5" font-size="5" font-family="Liberation Sans" font-weight="bold" fill="#111">1</text><text x="0" y="9.5" font-size="5" font-family="Liberation Sans" font-weight="bold" fill="#111">2</text><text x="0" y="14" font-size="5" font-family="Liberation Sans" font-weight="bold" fill="#111">3</text></svg>

<!-- sliders -->
<div class="a cb" style="top:465px"><i></i></div>
<div class="a lbl txt" style="top:466px">DeClick (%)</div>
<div class="a track" style="top:466px"></div>
<div class="a fill" style="top:469px;width:233px;background:#b3831f"></div>
<div class="a thumb" style="left:385px;top:465px"><i></i></div>
<div class="a val" style="top:463px;color:#111">37.6</div>
<div class="a cb" style="top:497px"><i></i></div>
<div class="a lbl txt" style="top:498px">DeCrackle (%)</div>
<div class="a track" style="top:498px"></div>
<div class="a fill" style="top:501px;width:155px;background:#b3831f"></div>
<div class="a thumb" style="left:307px;top:497px"><i></i></div>
<div class="a val" style="top:495px;color:#111">25.5</div>
<div class="a cb" style="top:529px"></div>
<div class="a lbl txt" style="top:530px">DeClip (%)</div>
<div class="a track" style="top:530px"></div>
<div class="a fill" style="top:533px;width:312px;background:#68696e"></div>
<div class="a thumb" style="left:464px;top:529px"><i></i></div>
<div class="a val" style="top:527px;color:#85868b">50.0</div>
<div class="a cb" style="top:561px"><i></i></div>
<div class="a lbl txt" style="top:562px">DeNoise (%)</div>
<div class="a track" style="top:562px"></div>
<div class="a fill" style="top:565px;width:273px;background:#b3831f"></div>
<div class="a thumb" style="left:425px;top:561px"><i></i></div>
<div class="a val" style="top:559px;color:#111">43.9</div>
<div class="a cb" style="top:593px"></div>
<div class="a lbl txt" style="top:594px">DeHum (%)</div>
<div class="a" style="left:148px;top:585px;width:128px;height:24px;border-radius:4px;background:linear-gradient(#e3e5eb,#aeafb5);box-shadow:0 1px 1px rgba(0,0,0,.4)"></div>
<div class="a" style="left:148px;top:585px;width:64px;height:24px;border-radius:4px 0 0 4px;background:linear-gradient(#fbbd28,#dd9e1c)"></div>
<div class="a txt" style="left:166px;top:589.5px;font-size:12px;color:#7a5a10">50 Hz</div>
<div class="a txt" style="left:227px;top:589.5px;font-size:12px;color:#6a6b70">60 Hz</div>

<!-- track list -->
<div class="a txt" style="left:872px;top:129px;font-size:13px;color:#eeeef0">Track list</div>
<div class="a" style="left:867px;top:150px;width:320px;height:243px;background:#19181d"></div>
<div class="a" style="left:867px;top:150px;width:320px;height:27px;background:#464955"></div>
<div class="a" style="left:1046px;top:150px;width:1px;height:27px;background:#3a3c46"></div>
<div class="a" style="left:1126px;top:150px;width:1px;height:27px;background:#3a3c46"></div>
<div class="a txt" style="left:871px;top:157px;font-size:11.5px;color:#e8e8ea">Name</div>
<div class="a txt" style="left:1051px;top:157px;font-size:12px;color:#e8e8ea;letter-spacing:-0.1px">Position</div>
<svg class="a" style="left:1111px;top:161px" width="10" height="7"><path d="M5,0L10,7H0Z" fill="#1e1e22"/></svg>
<div class="a" style="left:867px;top:200px;width:320px;height:22px;background:#f0ac1a"></div>
<div class="a txt" style="left:871px;top:182px;font-size:11px;color:#eeeef0">The Rise</div>
<div class="a txt" style="left:1051px;top:182px;font-size:11.4px;color:#eeeef0">00:00:00:000</div>
<div class="a txt" style="left:871px;top:204px;font-size:11px;color:#111">The Fall</div>
<div class="a txt" style="left:1051px;top:204px;font-size:11.4px;color:#111">00:03:10:926</div>
<div class="a btn" style="left:867px;top:393px;width:64px;height:20px;border-radius:0 0 5px 5px"></div>
<div class="a" style="left:898px;top:393px;width:2px;height:20px;background:#a6a7ad"></div>
<svg class="a" style="left:879px;top:399px" width="8" height="8"><path d="M4,0V8M0,4H8" stroke="#0a0a0a" stroke-width="2.4"/></svg>
<svg class="a" style="left:911px;top:399px" width="8" height="8"><path d="M0,4H8" stroke="#0a0a0a" stroke-width="2.4"/></svg>

<!-- processing chain -->
<div class="a txt" style="left:872px;top:461px;font-size:12.5px;color:#eeeef0">Processing chain</div>
<div class="a" style="left:867px;top:482px;width:320px;height:139px;background:#19181d;border:1px solid #4a4a4e"></div>
<div class="a" style="left:870px;top:485px;width:314px;height:26px;background:#464955;border-top:1px solid #62656f"></div>
<div class="a" style="left:875px;top:492.0px;width:6px;height:3px;background:#a0a2a8"></div>
<div class="a" style="left:875px;top:497.5px;width:6px;height:3px;background:#a0a2a8"></div>
<div class="a" style="left:875px;top:503.0px;width:6px;height:3px;background:#a0a2a8"></div>
<svg class="a" style="left:889px;top:488px" width="16" height="17" viewBox="0 0 16 17"><path d="M4.6,5.2 A6,6 0 1 0 11.4,5.2" stroke="#f0ac1a" stroke-width="2.3" fill="none"/><path d="M8,1V8.5" stroke="#f0ac1a" stroke-width="2.3"/></svg>
<div class="a txt" style="left:911px;top:489px;font-size:13px;color:#f0f0f2;letter-spacing:-0.2px">Limit</div>
<svg class="a" style="left:1138px;top:493px" width="12" height="12" viewBox="0 0 12 12"><path d="M1.5,1.5L10.5,10.5M10.5,1.5L1.5,10.5" stroke="#d93a3a" stroke-width="3"/></svg>
<svg class="a" style="left:1158px;top:490px" width="14" height="14" viewBox="0 0 14 14"><path d="M7,0V14M0,7H14" stroke="#c8cbd2" stroke-width="3"/></svg>
<div class="a" style="left:870px;top:513px;width:314px;height:26px;background:#464955;border-top:1px solid #62656f"></div>
<div class="a" style="left:875px;top:520.0px;width:6px;height:3px;background:#a0a2a8"></div>
<div class="a" style="left:875px;top:525.5px;width:6px;height:3px;background:#a0a2a8"></div>
<div class="a" style="left:875px;top:531.0px;width:6px;height:3px;background:#a0a2a8"></div>
<svg class="a" style="left:889px;top:516px" width="16" height="17" viewBox="0 0 16 17"><path d="M4.6,5.2 A6,6 0 1 0 11.4,5.2" stroke="#f0ac1a" stroke-width="2.3" fill="none"/><path d="M8,1V8.5" stroke="#f0ac1a" stroke-width="2.3"/></svg>
<div class="a txt" style="left:911px;top:517px;font-size:13px;color:#f0f0f2;letter-spacing:-0.2px">Dither</div>
<svg class="a" style="left:1138px;top:521px" width="12" height="12" viewBox="0 0 12 12"><path d="M1.5,1.5L10.5,10.5M10.5,1.5L1.5,10.5" stroke="#d93a3a" stroke-width="3"/></svg>
<svg class="a" style="left:1158px;top:518px" width="14" height="14" viewBox="0 0 14 14"><path d="M7,0V14M0,7H14" stroke="#c8cbd2" stroke-width="3"/></svg>
<svg class="a" style="left:1158px;top:546px" width="14" height="14" viewBox="0 0 14 14"><path d="M7,0V14M0,7H14" stroke="#c8cbd2" stroke-width="3"/></svg>

<!-- level meter -->
<div class="a" style="left:1207px;top:30px;width:138px;height:448px;background:#19181d"></div>
<div class="a" style="left:1207px;top:30px;width:138px;height:24px;background:#31343d"></div>
<div class="a txt" style="left:1213px;top:35px;font-size:11.5px;color:#f0f0f2">Level Meter</div>
<svg class="a" style="left:1332px;top:37px" width="10" height="10" viewBox="0 0 10 10"><path d="M1.5,1.5L8.5,8.5M8.5,1.5L1.5,8.5" stroke="#fff" stroke-width="2.8"/></svg>
<div class="a txt" style="left:1199px;width:40px;text-align:right;top:66.0px;font-size:10.2px;color:#d8d8dc">0</div>
<div class="a" style="left:1241px;top:72px;width:6px;height:1px;background:#6a6a70"></div>
<div class="a txt" style="left:1199px;width:40px;text-align:right;top:103.6px;font-size:10.2px;color:#d8d8dc">-4</div>
<div class="a" style="left:1241px;top:110px;width:6px;height:1px;background:#6a6a70"></div>
<div class="a txt" style="left:1199px;width:40px;text-align:right;top:141.2px;font-size:10.2px;color:#d8d8dc">-8</div>
<div class="a" style="left:1241px;top:148px;width:6px;height:1px;background:#6a6a70"></div>
<div class="a txt" style="left:1199px;width:40px;text-align:right;top:178.8px;font-size:10.2px;color:#d8d8dc">-12</div>
<div class="a" style="left:1241px;top:185px;width:6px;height:1px;background:#6a6a70"></div>
<div class="a txt" style="left:1199px;width:40px;text-align:right;top:216.4px;font-size:10.2px;color:#d8d8dc">-16</div>
<div class="a" style="left:1241px;top:223px;width:6px;height:1px;background:#6a6a70"></div>
<div class="a txt" style="left:1199px;width:40px;text-align:right;top:254.0px;font-size:10.2px;color:#d8d8dc">-20</div>
<div class="a" style="left:1241px;top:260px;width:6px;height:1px;background:#6a6a70"></div>
<div class="a txt" style="left:1199px;width:40px;text-align:right;top:277.5px;font-size:10.2px;color:#d8d8dc">-30</div>
<div class="a" style="left:1241px;top:284px;width:6px;height:1px;background:#6a6a70"></div>
<div class="a txt" style="left:1199px;width:40px;text-align:right;top:301.0px;font-size:10.2px;color:#d8d8dc">-40</div>
<div class="a" style="left:1241px;top:307px;width:6px;height:1px;background:#6a6a70"></div>
<div class="a txt" style="left:1199px;width:40px;text-align:right;top:324.5px;font-size:10.2px;color:#d8d8dc">-50</div>
<div class="a" style="left:1241px;top:331px;width:6px;height:1px;background:#6a6a70"></div>
<div class="a txt" style="left:1199px;width:40px;text-align:right;top:348.0px;font-size:10.2px;color:#d8d8dc">-60</div>
<div class="a" style="left:1241px;top:354px;width:6px;height:1px;background:#6a6a70"></div>
<div class="a txt" style="left:1199px;width:40px;text-align:right;top:371.5px;font-size:10.2px;color:#d8d8dc">-70</div>
<div class="a" style="left:1241px;top:378px;width:6px;height:1px;background:#6a6a70"></div>
<div class="a txt" style="left:1199px;width:40px;text-align:right;top:395.0px;font-size:10.2px;color:#d8d8dc">-80</div>
<div class="a" style="left:1241px;top:401px;width:6px;height:1px;background:#6a6a70"></div>
<div class="a txt" style="left:1199px;width:40px;text-align:right;top:418.5px;font-size:10.2px;color:#d8d8dc">-90</div>
<div class="a" style="left:1241px;top:425px;width:6px;height:1px;background:#6a6a70"></div>
<div class="a txt" style="left:1199px;width:40px;text-align:right;top:442.0px;font-size:10.2px;color:#d8d8dc">-100</div>
<div class="a" style="left:1241px;top:448px;width:6px;height:1px;background:#6a6a70"></div>
<div class="a" style="left:1247px;top:64px;width:39px;height:4px;background:#403e43"></div>
<div class="a" style="left:1247px;top:72px;width:39px;height:378px;background:#403e43"></div>
<div class="a" style="left:1247px;top:204px;width:39px;height:246px;background:#44cc44"></div>
<div class="a" style="left:1247px;top:194px;width:39px;height:10px;background:#ffd966"></div>
<div class="a" style="left:1247px;top:177px;width:39px;height:2px;background:#ffd966"></div>
<div class="a" style="left:1247px;top:251px;width:39px;height:2px;background:#f4f4f4"></div>
<div class="a txt" style="left:1237px;width:59px;text-align:center;top:453px;font-size:12px;color:#f0f0f2">-11.17</div>
<div class="a" style="left:1296px;top:64px;width:39px;height:4px;background:#403e43"></div>
<div class="a" style="left:1296px;top:72px;width:39px;height:378px;background:#403e43"></div>
<div class="a" style="left:1296px;top:217px;width:39px;height:233px;background:#44cc44"></div>
<div class="a" style="left:1296px;top:195px;width:39px;height:2px;background:#ffd966"></div>
<div class="a" style="left:1296px;top:264px;width:39px;height:2px;background:#f4f4f4"></div>
<div class="a txt" style="left:1286px;width:59px;text-align:center;top:453px;font-size:12px;color:#f0f0f2">-13.06</div>
<div class="a" style="left:1207px;top:478px;width:138px;height:4px;background:#4f535e"></div>

<!-- correlation -->
<div class="a" style="left:1207px;top:482px;width:138px;height:155px;background:#19181d"></div>
<div class="a" style="left:1207px;top:482px;width:138px;height:24px;background:#31343d"></div>
<div class="a txt" style="left:1213px;top:487px;font-size:11.5px;color:#f0f0f2">Correlation Meter</div>
<svg class="a" style="left:1332px;top:489px" width="10" height="10" viewBox="0 0 10 10"><path d="M1.5,1.5L8.5,8.5M8.5,1.5L1.5,8.5" stroke="#fff" stroke-width="2.8"/></svg>
<svg class="a" style="left:0;top:0" width="1349" height="641"><g stroke="#4a4b52" stroke-width="1.2"><path d="M1222,521L1330,601M1330,521L1222,601M1276,521V601M1222,561H1330"/></g><clipPath id="cc"><rect x="1222" y="521" width="108" height="80"/></clipPath><path d="M1287.9,556.2 L1286.5,553.9 L1285.0,551.9 L1283.4,550.0 L1281.6,548.4 L1279.8,547.0 L1277.9,545.8 L1276.0,544.9 L1274.1,544.2 L1272.1,543.7 L1270.2,543.5 L1268.4,543.5 L1266.6,543.8 L1264.9,544.2 L1263.5,544.9 L1262.1,545.7 L1261.0,546.7 L1260.1,547.8 L1259.5,549.1 L1259.1,550.4 L1259.1,551.9 L1259.3,553.4 L1259.8,554.9 L1260.6,556.5 L1261.7,558.1 L1263.1,559.7 L1264.8,561.3 L1266.7,562.9 L1268.9,564.4 L1271.3,565.9 L1273.8,567.3 L1276.6,568.6 L1279.4,569.9 L1282.3,571.1 L1285.2,572.3 L1288.2,573.4 L1291.1,574.4 L1293.9,575.4 L1296.6,576.2 L1299.1,577.1 L1301.4,577.8 L1303.5,578.5 L1305.4,579.2 L1307.0,579.8 L1308.2,580.3 L1309.2,580.8 L1309.9,581.2 L1310.2,581.6 L1310.2,581.8 L1309.9,582.1 L1309.3,582.2 L1308.3,582.3 L1307.2,582.3 L1305.7,582.2 L1304.1,582.0 L1302.2,581.8 L1300.2,581.4 L1298.1,580.9 L1295.9,580.3 L1293.6,579.6 L1291.3,578.7 L1289.1,577.8 L1286.8,576.7 L1284.7,575.5 L1282.7,574.3 L1280.8,572.9 L1279.0,571.4 L1277.4,569.8 L1276.0,568.2 L1274.8,566.5 L1273.8,564.8 L1273.0,563.0 L1272.4,561.3 L1271.9,559.5 L1271.7,557.8 L1271.6,556.2 L1271.7,554.6 L1271.9,553.2 L1272.2,551.8 L1272.6,550.6 L1273.1,549.6 L1273.7,548.7 L1274.2,548.0 L1274.8,547.5 L1275.4,547.3 L1276.0,547.2 L1276.5,547.3 L1276.9,547.7 L1277.3,548.3 L1277.7,549.0 L1277.9,550.0 L1278.1,551.2 L1278.2,552.5 L1278.3,554.0 L1278.3,555.7 L1278.3,557.4 L1278.2,559.2 L1278.1,561.1 L1278.0,563.1 L1278.0,565.0 L1278.0,567.0 L1278.0,568.9 L1278.1,570.7 L1278.3,572.5 L1278.5,574.1 L1278.9,575.6 L1279.4,577.0 L1280.1,578.2 L1280.8,579.2 L1281.7,580.0 L1282.7,580.7 L1283.8,581.2 L1285.1,581.4 L1286.4,581.5 L1287.8,581.4 L1289.3,581.0 L1290.8,580.6 L1292.3,580.0 L1293.8,579.2 L1295.3,578.3M1270.0,557.7 L1270.5,559.0 L1270.9,560.3 L1271.4,561.6 L1272.0,562.9 L1272.6,564.0 L1273.2,565.1 L1273.8,566.2 L1274.4,567.1 L1275.0,567.9 L1275.6,568.6 L1276.2,569.1 L1276.7,569.6 L1277.3,569.9 L1277.8,570.0 L1278.2,570.1 L1278.6,570.0 L1279.0,569.8 L1279.3,569.4 L1279.6,569.0 L1279.8,568.5 L1279.9,567.9 L1280.0,567.3 L1280.1,566.6 L1280.1,565.8 L1280.0,565.1 L1280.0,564.3 L1279.9,563.6 L1279.7,562.9 L1279.6,562.2 L1279.4,561.7 L1279.2,561.1 L1279.0,560.7 L1278.8,560.4 L1278.6,560.1 L1278.4,560.0 L1278.2,560.0 L1278.0,560.1 L1277.9,560.3 L1277.8,560.7 L1277.7,561.1 L1277.6,561.7 L1277.5,562.4 L1277.5,563.1 L1277.5,563.9 L1277.6,564.8 L1277.6,565.7 L1277.7,566.7 L1277.8,567.6 L1277.9,568.6 L1278.0,569.5 L1278.2,570.4 L1278.3,571.2 L1278.5,572.0 L1278.7,572.7 L1278.8,573.3 L1278.9,573.8 L1279.1,574.1 L1279.2,574.3 L1279.3,574.4 L1279.4,574.3 L1279.4,574.1 L1279.5,573.7 L1279.5,573.2 L1279.4,572.6 L1279.4,571.8 L1279.3,570.9 L1279.2,569.9 L1279.1,568.7 L1279.0,567.5 L1278.8,566.2 L1278.7,564.9 L1278.5,563.5 L1278.3,562.1 L1278.1,560.7 L1277.9,559.3 L1277.7,557.9 L1277.5,556.6 L1277.3,555.3 L1277.1,554.1 L1276.9,553.0 L1276.7,552.1 L1276.6,551.2 L1276.4,550.5 L1276.3,549.8 L1276.2,549.4 L1276.1,549.0 L1276.0,548.8 L1276.0,548.8 L1275.9,548.8 L1275.9,549.0 L1275.9,549.3 L1275.9,549.7 L1275.8,550.1 L1275.8,550.7 L1275.8,551.3 L1275.8,552.0 L1275.8,552.7 L1275.7,553.4 L1275.7,554.0 L1275.6,554.7 L1275.5,555.3 L1275.4,555.9 L1275.3,556.4 L1275.1,556.8 L1274.9,557.1 L1274.7,557.4 L1274.5,557.5 L1274.3,557.5 L1274.0,557.3 L1273.7,557.1 L1273.4,556.7 L1273.1,556.2 L1272.8,555.6 L1272.5,554.9 L1272.1,554.1 L1271.8,553.2 L1271.5,552.3 L1271.2,551.2 L1271.0,550.2M1268.1,552.7 L1267.4,552.6 L1266.7,552.5 L1266.1,552.4 L1265.5,552.3 L1265.0,552.2 L1264.5,552.1 L1264.1,552.0 L1263.7,551.8 L1263.3,551.7 L1263.1,551.6 L1262.8,551.4 L1262.6,551.3 L1262.5,551.1 L1262.4,551.0 L1262.4,550.8 L1262.4,550.6 L1262.5,550.5 L1262.5,550.3 L1262.7,550.1 L1262.8,550.0 L1263.1,549.8 L1263.3,549.7 L1263.5,549.5 L1263.8,549.4 L1264.1,549.2 L1264.5,549.1 L1264.8,549.0 L1265.2,548.9 L1265.5,548.8 L1265.9,548.8 L1266.2,548.7 L1266.6,548.7 L1266.9,548.7 L1267.3,548.7 L1267.6,548.7 L1267.9,548.8 L1268.2,548.8 L1268.5,548.9 L1268.8,549.1 L1269.0,549.2 L1269.2,549.4 L1269.4,549.5 L1269.5,549.7 L1269.6,550.0 L1269.7,550.2 L1269.8,550.5 L1269.8,550.8 L1269.8,551.1 L1269.8,551.4 L1269.7,551.8 L1269.7,552.2 L1269.6,552.5 L1269.4,552.9 L1269.3,553.3 L1269.1,553.7 L1268.9,554.2 L1268.7,554.6 L1268.5,555.0 L1268.3,555.4 L1268.1,555.9 L1267.9,556.3 L1267.6,556.7 L1267.4,557.1 L1267.2,557.5 L1267.0,557.9 L1266.8,558.3 L1266.6,558.7 L1266.5,559.0 L1266.3,559.4 L1266.2,559.7 L1266.1,559.9 L1266.1,560.2 L1266.1,560.4 L1266.1,560.7 L1266.1,560.8 L1266.2,561.0 L1266.3,561.1 L1266.5,561.2 L1266.7,561.3 L1266.9,561.3 L1267.2,561.4 L1267.5,561.3 L1267.8,561.3 L1268.2,561.2 L1268.6,561.1 L1269.1,561.0 L1269.6,560.8 L1270.1,560.7 L1270.7,560.5 L1271.3,560.2 L1271.9,560.0 L1272.5,559.7 L1273.1,559.4 L1273.8,559.1 L1274.5,558.8 L1275.2,558.5 L1275.8,558.2 L1276.5,557.8 L1277.2,557.5 L1277.9,557.1 L1278.6,556.8 L1279.3,556.4 L1279.9,556.1 L1280.5,555.7 L1281.1,555.4 L1281.7,555.0 L1282.3,554.7 L1282.8,554.4 L1283.3,554.0 L1283.8,553.7 L1284.2,553.5 L1284.5,553.2 L1284.9,552.9 L1285.2,552.7 L1285.4,552.5 L1285.6,552.2 L1285.8,552.0 L1285.9,551.9 L1285.9,551.7M1301.5,593.1 L1300.9,591.8 L1299.9,589.9 L1298.3,587.4 L1296.3,584.4 L1293.9,581.1 L1291.1,577.3 L1288.1,573.4 L1284.9,569.3 L1281.5,565.1 L1278.1,561.0 L1274.7,557.1 L1271.4,553.5 L1268.3,550.2 L1265.4,547.3 L1262.8,545.0 L1260.7,543.2 L1258.9,542.1 L1257.6,541.6 L1256.8,541.8 L1256.4,542.7 L1256.6,544.2 L1257.2,546.3 L1258.3,549.0 L1259.9,552.2 L1261.8,555.8 L1264.1,559.8 L1266.7,564.0 L1269.5,568.4 L1272.4,572.7 L1275.4,577.1 L1278.5,581.2 L1281.4,585.0 L1284.2,588.5 L1286.9,591.5 L1289.2,594.0 L1291.3,595.9 L1293.0,597.1 L1294.3,597.7 L1295.1,597.5 L1295.5,596.7 L1295.5,595.1 L1295.0,592.9 L1294.1,590.2 L1292.8,586.9 L1291.2,583.1 L1289.2,579.0 L1287.0,574.6 L1284.5,570.1 L1281.9,565.5 L1279.2,561.0 L1276.6,556.7 L1273.9,552.6 L1271.4,548.9 L1269.1,545.7 L1267.0,543.0 L1265.2,541.0 L1263.7,539.6 L1262.6,538.9 L1261.9,538.9 L1261.6,539.6 L1261.7,541.1 L1262.2,543.2 L1263.1,545.9 L1264.4,549.2 L1266.0,552.9 L1267.9,557.1 L1270.0,561.5 L1272.3,566.1 L1274.7,570.8 L1277.2,575.4 L1279.7,579.8 L1282.2,584.0 L1284.5,587.9 L1286.6,591.2 L1288.5,594.0 L1290.1,596.3 L1291.4,597.8 L1292.3,598.6 L1292.9,598.8 L1293.0,598.2 L1292.8,596.8 L1292.2,594.8 L1291.2,592.2 L1289.8,589.0 L1288.2,585.3 L1286.3,581.3 L1284.1,576.9 L1281.8,572.3 L1279.4,567.6 L1276.9,563.0 L1274.4,558.5 L1272.0,554.3 L1269.8,550.4 L1267.7,547.0 L1265.9,544.1 L1264.3,541.8 L1263.1,540.2 L1262.2,539.3 L1261.7,539.1 L1261.6,539.6 L1261.9,540.8 L1262.5,542.7 L1263.6,545.3 L1265.0,548.4 L1266.6,552.1 L1268.6,556.1 L1270.8,560.5 L1273.1,565.0 L1275.5,569.6 L1278.0,574.3 L1280.5,578.7 L1282.9,583.0 L1285.2,586.9 L1287.3,590.3 L1289.2,593.2 L1290.8,595.5 L1292.1,597.2 L1293.0,598.1 L1293.5,598.3M1275.3,559.9 L1275.5,560.3 L1275.7,560.7 L1276.0,561.2 L1276.2,561.8 L1276.5,562.3 L1276.8,562.9 L1277.1,563.5 L1277.3,564.1 L1277.5,564.7 L1277.7,565.2 L1277.9,565.6 L1278.0,566.0 L1278.1,566.3 L1278.1,566.5 L1278.1,566.7 L1278.0,566.7 L1277.9,566.7 L1277.8,566.6 L1277.5,566.4 L1277.3,566.1 L1277.0,565.7 L1276.7,565.3 L1276.4,564.9 L1276.1,564.4 L1275.8,564.0 L1275.4,563.5 L1275.2,563.1 L1274.9,562.6 L1274.6,562.2 L1274.5,561.9 L1274.3,561.6 L1274.2,561.4 L1274.2,561.3 L1274.2,561.3 L1274.3,561.3 L1274.4,561.5 L1274.6,561.7 L1274.9,561.9 L1275.2,562.3 L1275.5,562.7 L1275.9,563.1 L1276.3,563.5 L1276.8,564.0 L1277.2,564.5 L1277.7,564.9 L1278.1,565.4 L1278.6,565.7 L1279.0,566.1 L1279.4,566.3 L1279.7,566.5 L1280.0,566.6 L1280.3,566.5 L1280.5,566.4 L1280.6,566.2 L1280.7,565.8 L1280.8,565.4 L1280.8,564.9 L1280.7,564.2 L1280.7,563.5 L1280.5,562.8 L1280.4,562.0 L1280.3,561.1 L1280.1,560.3 L1279.9,559.4 L1279.8,558.6 L1279.7,557.8 L1279.6,557.1 L1279.6,556.5 L1279.6,555.9 L1279.6,555.4 L1279.7,555.1 L1279.9,554.9 L1280.1,554.8 L1280.5,554.8 L1280.8,555.0 L1281.3,555.3 L1281.8,555.7 L1282.3,556.2 L1282.9,556.9 L1283.5,557.6 L1284.2,558.3 L1284.8,559.1 L1285.5,560.0 L1286.1,560.8 L1286.7,561.7 L1287.3,562.5 L1287.8,563.2 L1288.3,563.9 L1288.6,564.4 L1288.9,564.9 L1289.1,565.2 L1289.2,565.4 L1289.2,565.5 L1289.1,565.4 L1288.9,565.1 L1288.6,564.7 L1288.1,564.2 L1287.6,563.6 L1287.0,562.8 L1286.3,562.0 L1285.6,561.0 L1284.8,560.1 L1283.9,559.1 L1283.0,558.0 L1282.1,557.0 L1281.3,556.1 L1280.4,555.2 L1279.6,554.4 L1278.8,553.8 L1278.1,553.2 L1277.4,552.9 L1276.9,552.7 L1276.4,552.6 L1276.0,552.8 L1275.7,553.2 L1275.5,553.7 L1275.4,554.5 L1275.4,555.4 L1275.5,556.5M1288.5,574.7 L1289.6,574.8 L1290.6,574.7 L1291.5,574.7 L1292.1,574.7 L1292.6,574.6 L1292.9,574.6 L1293.0,574.6 L1293.0,574.5 L1292.7,574.5 L1292.3,574.5 L1291.6,574.5 L1290.9,574.5 L1289.9,574.5 L1288.9,574.5 L1287.7,574.5 L1286.5,574.4 L1285.1,574.3 L1283.8,574.2 L1282.4,574.0 L1281.0,573.8 L1279.6,573.5 L1278.2,573.2 L1277.0,572.8 L1275.7,572.3 L1274.6,571.7 L1273.6,571.0 L1272.7,570.3 L1272.0,569.4 L1271.3,568.5 L1270.8,567.5 L1270.5,566.4 L1270.2,565.3 L1270.1,564.1 L1270.1,562.9 L1270.2,561.6 L1270.4,560.3 L1270.6,559.0 L1270.9,557.7 L1271.3,556.4 L1271.7,555.2 L1272.1,553.9 L1272.5,552.8 L1272.9,551.7 L1273.3,550.7 L1273.6,549.7 L1273.8,548.9 L1274.0,548.1 L1274.1,547.4 L1274.1,546.9 L1274.1,546.5 L1273.9,546.1 L1273.7,545.9 L1273.4,545.8 L1273.0,545.8 L1272.5,545.8 L1272.0,546.0 L1271.4,546.2 L1270.8,546.5 L1270.2,546.9 L1269.6,547.3 L1269.0,547.7 L1268.4,548.2 L1267.8,548.7 L1267.3,549.1 L1266.8,549.6 L1266.4,550.0 L1266.0,550.5 L1265.8,550.8 L1265.6,551.2 L1265.5,551.5 L1265.5,551.7 L1265.6,551.9 L1265.7,552.0 L1265.9,552.1 L1266.2,552.1 L1266.6,552.0 L1266.9,551.9 L1267.4,551.8 L1267.8,551.6 L1268.3,551.4 L1268.7,551.1 L1269.1,550.8 L1269.5,550.4 L1269.9,550.1 L1270.2,549.7 L1270.4,549.3 L1270.6,548.9 L1270.7,548.5 L1270.7,548.1 L1270.6,547.7 L1270.4,547.3 L1270.2,546.9 L1269.9,546.5 L1269.5,546.0 L1269.0,545.6 L1268.4,545.2 L1267.8,544.8 L1267.2,544.3 L1266.5,543.8 L1265.8,543.3 L1265.1,542.8 L1264.4,542.3 L1263.7,541.7 L1263.0,541.2 L1262.3,540.5 L1261.7,539.9 L1261.1,539.2 L1260.6,538.5 L1260.2,537.8 L1259.8,537.0 L1259.5,536.2 L1259.2,535.4 L1259.0,534.6 L1258.9,533.8 L1258.8,533.0 L1258.7,532.3 L1258.8,531.5 L1258.8,530.8 L1258.8,530.1M1308.9,561.7 L1308.4,561.0 L1307.8,560.2 L1307.0,559.3 L1306.1,558.4 L1305.2,557.5 L1304.1,556.6 L1303.0,555.8 L1301.8,555.0 L1300.6,554.3 L1299.4,553.7 L1298.2,553.2 L1297.0,552.8 L1295.9,552.6 L1294.8,552.5 L1293.8,552.5 L1292.9,552.7 L1292.1,553.0 L1291.4,553.5 L1290.8,554.1 L1290.3,554.9 L1289.9,555.7 L1289.7,556.7 L1289.5,557.8 L1289.5,558.9 L1289.6,560.1 L1289.7,561.3 L1290.0,562.6 L1290.3,563.8 L1290.7,565.0 L1291.1,566.2 L1291.6,567.2 L1292.1,568.2 L1292.5,569.0 L1293.0,569.7 L1293.4,570.2 L1293.8,570.6 L1294.1,570.8 L1294.4,570.7 L1294.5,570.4 L1294.6,570.0 L1294.5,569.3 L1294.3,568.3 L1294.0,567.2 L1293.5,565.8 L1292.9,564.2 L1292.2,562.5 L1291.3,560.5 L1290.3,558.4 L1289.1,556.2 L1287.8,553.8 L1286.4,551.4 L1284.9,548.9 L1283.3,546.3 L1281.5,543.7 L1279.8,541.1 L1277.9,538.6 L1276.0,536.1 L1274.1,533.8 L1272.2,531.5 L1270.3,529.4 L1268.4,527.5 L1266.6,525.8 L1264.9,524.2 L1263.2,522.9 L1261.6,521.9 L1260.2,521.1 L1258.8,520.5 L1257.6,520.2 L1256.6,520.1 L1255.7,520.3 L1255.0,520.8 L1254.4,521.5 L1254.0,522.4 L1253.8,523.5 L1253.7,524.8 L1253.9,526.3 L1254.1,528.0 L1254.6,529.7 L1255.2,531.6 L1255.9,533.5 L1256.8,535.5 L1257.7,537.5 L1258.8,539.4 L1260.0,541.4 L1261.2,543.3 L1262.5,545.1 L1263.9,546.7 L1265.3,548.3 L1266.7,549.7 L1268.1,550.9 L1269.5,552.0 L1270.9,552.9 L1272.3,553.6 L1273.6,554.0 L1274.8,554.3 L1276.0,554.4 L1277.1,554.3 L1278.2,554.0 L1279.1,553.6 L1280.0,553.0 L1280.8,552.3 L1281.5,551.4 L1282.2,550.5 L1282.8,549.5 L1283.3,548.4 L1283.7,547.4 L1284.1,546.3 L1284.4,545.3 L1284.7,544.3 L1284.9,543.4 L1285.2,542.6 L1285.4,541.9 L1285.6,541.4 L1285.8,541.1 L1286.0,540.9 L1286.3,540.9 L1286.5,541.1 L1286.8,541.5 L1287.2,542.2M1293.7,563.7 L1294.7,565.3 L1295.6,567.1 L1296.4,568.8 L1297.0,570.6 L1297.4,572.5 L1297.6,574.3 L1297.7,576.1 L1297.6,577.9 L1297.4,579.7 L1297.0,581.5 L1296.5,583.1 L1296.0,584.7 L1295.3,586.2 L1294.6,587.6 L1293.8,588.9 L1293.0,590.1 L1292.2,591.0 L1291.4,591.9 L1290.6,592.5 L1289.8,593.0 L1289.0,593.3 L1288.3,593.4 L1287.7,593.2 L1287.1,592.9 L1286.6,592.4 L1286.2,591.7 L1285.9,590.7 L1285.6,589.6 L1285.4,588.3 L1285.3,586.8 L1285.2,585.2 L1285.2,583.4 L1285.2,581.5 L1285.3,579.4 L1285.3,577.2 L1285.4,575.0 L1285.5,572.6 L1285.6,570.3 L1285.6,567.8 L1285.5,565.4 L1285.4,562.9 L1285.3,560.5 L1285.0,558.1 L1284.7,555.8 L1284.3,553.5 L1283.7,551.3 L1283.1,549.2 L1282.3,547.2 L1281.5,545.4 L1280.5,543.6 L1279.5,542.0 L1278.4,540.5 L1277.1,539.1 L1275.9,537.9 L1274.5,536.8 L1273.1,535.9 L1271.7,535.1 L1270.3,534.5 L1268.9,533.9 L1267.5,533.5 L1266.1,533.2 L1264.8,533.1 L1263.6,533.0 L1262.5,533.0 L1261.5,533.2 L1260.6,533.4 L1259.8,533.7 L1259.2,534.0 L1258.7,534.4 L1258.4,534.9 L1258.3,535.4 L1258.3,536.0 L1258.4,536.6 L1258.8,537.3 L1259.3,538.0 L1259.9,538.7 L1260.7,539.4 L1261.6,540.2 L1262.6,541.0 L1263.8,541.9 L1265.0,542.7 L1266.3,543.6 L1267.7,544.5 L1269.1,545.5 L1270.5,546.5 L1272.0,547.5 L1273.4,548.5 L1274.9,549.6 L1276.2,550.7 L1277.6,551.8 L1278.9,553.0 L1280.1,554.2 L1281.2,555.4 L1282.2,556.6 L1283.1,557.9 L1284.0,559.1 L1284.7,560.4 L1285.3,561.6 L1285.9,562.9 L1286.3,564.1 L1286.7,565.3 L1286.9,566.5 L1287.1,567.6 L1287.2,568.7 L1287.2,569.7 L1287.2,570.7 L1287.2,571.6 L1287.1,572.4 L1287.0,573.1 L1286.8,573.8 L1286.7,574.3 L1286.6,574.8 L1286.4,575.1 L1286.3,575.4 L1286.2,575.5 L1286.1,575.6 L1286.1,575.6 L1286.0,575.4 L1286.0,575.2M1288.2,577.1 L1287.3,575.7 L1286.3,574.3 L1285.4,572.9 L1284.4,571.4 L1283.5,569.9 L1282.6,568.5 L1281.7,567.0 L1280.9,565.5 L1280.2,564.1 L1279.5,562.7 L1278.9,561.3 L1278.4,560.0 L1278.0,558.7 L1277.7,557.5 L1277.4,556.3 L1277.3,555.3 L1277.3,554.3 L1277.4,553.3 L1277.6,552.5 L1277.9,551.7 L1278.3,551.0 L1278.8,550.4 L1279.4,549.9 L1280.0,549.5 L1280.8,549.1 L1281.6,548.8 L1282.4,548.7 L1283.3,548.5 L1284.2,548.5 L1285.1,548.5 L1286.0,548.6 L1286.9,548.7 L1287.8,548.9 L1288.6,549.1 L1289.4,549.3 L1290.2,549.6 L1290.9,549.9 L1291.4,550.2 L1291.9,550.5 L1292.3,550.9 L1292.6,551.2 L1292.8,551.5 L1292.9,551.8 L1292.8,552.0 L1292.6,552.3 L1292.2,552.5 L1291.7,552.6 L1291.1,552.8 L1290.4,552.8 L1289.5,552.9 L1288.5,552.9 L1287.4,552.8 L1286.1,552.8 L1284.8,552.6 L1283.4,552.4 L1281.9,552.2 L1280.3,552.0 L1278.7,551.7 L1277.0,551.4 L1275.3,551.0 L1273.5,550.6 L1271.8,550.3 L1270.1,549.9 L1268.4,549.5 L1266.7,549.1 L1265.1,548.7 L1263.6,548.3 L1262.1,548.0 L1260.8,547.7 L1259.6,547.4 L1258.4,547.1 L1257.4,546.9 L1256.6,546.8 L1255.9,546.7 L1255.3,546.7 L1254.9,546.7 L1254.7,546.8 L1254.6,547.0 L1254.7,547.2 L1254.9,547.5 L1255.3,547.9 L1255.9,548.4 L1256.6,548.9 L1257.5,549.6 L1258.5,550.2 L1259.6,551.0 L1260.9,551.8 L1262.2,552.7 L1263.7,553.6 L1265.2,554.6 L1266.8,555.6 L1268.5,556.6 L1270.2,557.7 L1271.9,558.8 L1273.7,559.9 L1275.4,561.1 L1277.2,562.2 L1278.9,563.3 L1280.6,564.4 L1282.2,565.5 L1283.8,566.5 L1285.3,567.5 L1286.7,568.5 L1288.0,569.4 L1289.2,570.3 L1290.3,571.0 L1291.3,571.8 L1292.2,572.4 L1293.0,573.0 L1293.6,573.5 L1294.2,573.9 L1294.6,574.2 L1294.9,574.4 L1295.1,574.6 L1295.1,574.7 L1295.1,574.7 L1295.0,574.6 L1294.8,574.4 L1294.5,574.2M1267.7,528.6 L1269.1,530.1 L1270.7,532.0 L1272.5,534.4 L1274.5,537.2 L1276.7,540.4 L1279.0,543.8 L1281.4,547.4 L1283.8,551.2 L1286.3,555.0 L1288.6,558.8 L1290.9,562.5 L1293.1,566.0 L1295.1,569.3 L1296.9,572.3 L1298.4,574.9 L1299.6,577.0 L1300.5,578.7 L1301.1,579.9 L1301.3,580.5 L1301.2,580.6 L1300.8,580.1 L1299.9,579.1 L1298.8,577.5 L1297.3,575.4 L1295.5,572.9 L1293.5,569.9 L1291.2,566.6 L1288.7,563.0 L1286.1,559.2 L1283.4,555.3 L1280.7,551.3 L1277.9,547.3 L1275.2,543.4 L1272.5,539.8 L1270.0,536.3 L1267.7,533.3 L1265.7,530.6 L1263.8,528.4 L1262.3,526.7 L1261.1,525.6 L1260.2,525.1 L1259.7,525.1 L1259.5,525.8 L1259.7,527.1 L1260.2,528.9 L1261.0,531.3 L1262.2,534.2 L1263.6,537.6 L1265.3,541.3 L1267.1,545.4 L1269.2,549.8 L1271.3,554.3 L1273.5,558.9 L1275.7,563.5 L1277.9,568.0 L1280.0,572.3 L1282.0,576.4 L1283.8,580.1 L1285.4,583.4 L1286.8,586.2 L1287.8,588.5 L1288.6,590.2 L1289.0,591.3 L1289.1,591.8 L1288.9,591.6 L1288.3,590.8 L1287.4,589.4 L1286.1,587.4 L1284.6,584.8 L1282.8,581.7 L1280.8,578.1 L1278.6,574.2 L1276.2,569.9 L1273.8,565.5 L1271.3,560.9 L1268.7,556.3 L1266.3,551.7 L1263.9,547.2 L1261.7,543.0 L1259.7,539.1 L1258.0,535.6 L1256.5,532.5 L1255.3,529.9 L1254.5,527.9 L1254.0,526.5 L1254.0,525.7 L1254.2,525.6 L1254.9,526.1 L1256.0,527.2 L1257.4,529.0 L1259.1,531.3 L1261.2,534.1 L1263.5,537.4 L1266.0,541.0 L1268.8,545.0 L1271.6,549.3 L1274.6,553.6 L1277.6,558.1 L1280.5,562.5 L1283.4,566.8 L1286.2,570.9 L1288.8,574.7 L1291.1,578.1 L1293.2,581.1 L1295.0,583.6 L1296.5,585.5 L1297.6,586.9 L1298.3,587.6 L1298.6,587.6 L1298.6,587.1 L1298.1,585.9 L1297.3,584.1 L1296.2,581.7 L1294.7,578.8 L1292.9,575.4 L1290.8,571.6 L1288.6,567.4 L1286.2,563.1 L1283.6,558.5M1286.0,570.3 L1285.7,571.1 L1285.4,572.0 L1285.1,573.1 L1284.8,574.3 L1284.6,575.6 L1284.3,576.9 L1284.0,578.3 L1283.7,579.7 L1283.4,581.0 L1283.1,582.3 L1282.7,583.5 L1282.4,584.6 L1281.9,585.6 L1281.5,586.4 L1281.1,587.1 L1280.6,587.6 L1280.1,587.9 L1279.5,588.0 L1279.0,587.9 L1278.5,587.6 L1278.0,587.1 L1277.4,586.4 L1277.0,585.5 L1276.5,584.5 L1276.1,583.3 L1275.8,582.0 L1275.5,580.5 L1275.3,579.0 L1275.2,577.5 L1275.1,575.9 L1275.2,574.3 L1275.4,572.7 L1275.7,571.2 L1276.1,569.7 L1276.6,568.3 L1277.2,567.1 L1278.0,565.9 L1278.8,564.9 L1279.7,564.1 L1280.7,563.4 L1281.8,562.8 L1282.9,562.4 L1284.0,562.1 L1285.2,562.0 L1286.4,562.0 L1287.5,562.1 L1288.7,562.2 L1289.7,562.5 L1290.7,562.8 L1291.6,563.2 L1292.5,563.6 L1293.2,564.0 L1293.7,564.3 L1294.2,564.6 L1294.5,564.9 L1294.6,565.0 L1294.6,565.1 L1294.4,565.1 L1294.1,565.0 L1293.6,564.8 L1293.0,564.4 L1292.3,564.0 L1291.5,563.4 L1290.5,562.7 L1289.5,562.0 L1288.4,561.2 L1287.3,560.3 L1286.1,559.3 L1284.9,558.4 L1283.8,557.4 L1282.6,556.5 L1281.6,555.5 L1280.6,554.7 L1279.7,553.9 L1278.9,553.1 L1278.2,552.5 L1277.7,552.0 L1277.2,551.6 L1277.0,551.3 L1276.8,551.1 L1276.8,551.1 L1276.9,551.2 L1277.2,551.4 L1277.6,551.7 L1278.0,552.2 L1278.6,552.7 L1279.2,553.3 L1279.9,554.0 L1280.7,554.7 L1281.4,555.5 L1282.2,556.3 L1282.9,557.0 L1283.5,557.8 L1284.2,558.4 L1284.7,559.1 L1285.1,559.6 L1285.4,560.1 L1285.6,560.5 L1285.7,560.8 L1285.6,561.0 L1285.3,561.1 L1285.0,561.1 L1284.4,561.0 L1283.8,560.8 L1283.0,560.5 L1282.0,560.2 L1281.0,559.8 L1279.9,559.4 L1278.7,559.0 L1277.4,558.5 L1276.1,558.1 L1274.7,557.7 L1273.4,557.4 L1272.1,557.2 L1270.8,557.0 L1269.6,557.0 L1268.5,557.0 L1267.4,557.2 L1266.5,557.5M1288.3,563.3 L1289.5,564.6 L1290.6,565.7 L1291.6,566.8 L1292.6,567.7 L1293.4,568.5 L1294.1,569.1 L1294.6,569.6 L1295.1,570.0 L1295.4,570.3 L1295.5,570.4 L1295.6,570.4 L1295.5,570.3 L1295.3,570.1 L1295.0,569.9 L1294.6,569.6 L1294.1,569.2 L1293.5,568.8 L1292.9,568.4 L1292.2,567.9 L1291.4,567.5 L1290.7,567.1 L1289.9,566.7 L1289.1,566.4 L1288.2,566.1 L1287.4,565.9 L1286.6,565.7 L1285.9,565.6 L1285.1,565.6 L1284.4,565.6 L1283.7,565.6 L1283.1,565.7 L1282.4,565.8 L1281.9,565.9 L1281.3,566.1 L1280.9,566.2 L1280.4,566.3 L1280.0,566.4 L1279.6,566.5 L1279.2,566.5 L1278.9,566.5 L1278.6,566.4 L1278.3,566.2 L1278.0,565.9 L1277.8,565.5 L1277.6,565.1 L1277.3,564.5 L1277.1,563.9 L1276.9,563.2 L1276.7,562.4 L1276.6,561.5 L1276.5,560.6 L1276.3,559.6 L1276.3,558.6 L1276.2,557.6 L1276.2,556.6 L1276.2,555.6 L1276.3,554.7 L1276.4,553.8 L1276.6,553.1 L1276.9,552.4 L1277.2,551.8 L1277.6,551.4 L1278.1,551.2 L1278.6,551.1 L1279.3,551.1 L1279.9,551.4 L1280.7,551.8 L1281.5,552.5 L1282.4,553.3 L1283.4,554.3 L1284.4,555.5 L1285.4,556.8 L1286.5,558.3 L1287.6,559.9 L1288.7,561.6 L1289.8,563.4 L1290.9,565.3 L1291.9,567.2 L1292.9,569.0 L1293.8,570.9 L1294.6,572.7 L1295.4,574.4 L1296.0,576.0 L1296.5,577.5 L1296.9,578.8 L1297.2,579.8 L1297.3,580.7 L1297.3,581.4 L1297.1,581.8 L1296.8,581.9 L1296.3,581.7 L1295.7,581.3 L1294.9,580.7 L1294.0,579.7 L1293.0,578.5 L1291.8,577.1 L1290.6,575.4 L1289.3,573.5 L1287.9,571.5 L1286.4,569.3 L1285.0,566.9 L1283.5,564.5 L1282.0,562.0 L1280.6,559.5 L1279.2,557.0 L1277.9,554.6 L1276.7,552.3 L1275.5,550.0 L1274.5,548.0 L1273.7,546.1 L1273.0,544.4 L1272.4,543.0 L1272.1,541.8 L1271.9,540.9 L1271.8,540.3 L1272.0,540.0 L1272.3,540.0 L1272.8,540.3 L1273.5,540.9M1283.6,578.4 L1283.7,579.4 L1283.9,580.4 L1284.1,581.3 L1284.3,582.2 L1284.6,583.1 L1285.0,583.9 L1285.4,584.6 L1285.8,585.2 L1286.3,585.8 L1286.8,586.3 L1287.4,586.7 L1287.9,586.9 L1288.5,587.1 L1289.1,587.2 L1289.7,587.1 L1290.3,587.0 L1290.8,586.7 L1291.3,586.4 L1291.8,586.0 L1292.3,585.5 L1292.7,584.9 L1293.0,584.3 L1293.3,583.6 L1293.5,582.8 L1293.7,582.0 L1293.8,581.2 L1293.8,580.3 L1293.8,579.5 L1293.6,578.6 L1293.5,577.7 L1293.2,576.9 L1292.9,576.1 L1292.6,575.3 L1292.2,574.5 L1291.8,573.9 L1291.4,573.2 L1290.9,572.7 L1290.5,572.2 L1290.0,571.7 L1289.6,571.4 L1289.1,571.1 L1288.7,570.9 L1288.4,570.8 L1288.1,570.8 L1287.8,570.9 L1287.7,571.1 L1287.6,571.3 L1287.5,571.6 L1287.6,572.0 L1287.7,572.5 L1287.9,573.1 L1288.2,573.7 L1288.5,574.4 L1289.0,575.2 L1289.5,576.0 L1290.1,576.9 L1290.7,577.8 L1291.4,578.8 L1292.1,579.8 L1292.8,580.8 L1293.6,581.9 L1294.4,582.9 L1295.1,584.0 L1295.9,585.1 L1296.6,586.2 L1297.3,587.3 L1297.9,588.4 L1298.5,589.4 L1299.1,590.4 L1299.5,591.4 L1299.9,592.3 L1300.2,593.2 L1300.4,594.1 L1300.5,594.8 L1300.5,595.5 L1300.4,596.2 L1300.2,596.7 L1300.0,597.2 L1299.6,597.5 L1299.2,597.8 L1298.7,598.0 L1298.1,598.1 L1297.5,598.1 L1296.8,597.9 L1296.1,597.7 L1295.3,597.4 L1294.6,597.0 L1293.8,596.5 L1293.0,595.8 L1292.3,595.1 L1291.5,594.4 L1290.8,593.5 L1290.2,592.6 L1289.6,591.6 L1289.0,590.5 L1288.5,589.4 L1288.1,588.3 L1287.7,587.2 L1287.5,586.0 L1287.3,584.8 L1287.1,583.7 L1287.1,582.6 L1287.1,581.5 L1287.2,580.4 L1287.3,579.4 L1287.5,578.5 L1287.8,577.6 L1288.1,576.8 L1288.5,576.1 L1288.9,575.6 L1289.3,575.1 L1289.7,574.7 L1290.2,574.4 L1290.6,574.2 L1291.1,574.1 L1291.6,574.2 L1292.0,574.3 L1292.5,574.6 L1292.9,574.9M1270.8,556.8 L1270.7,555.5 L1270.6,554.4 L1270.5,553.4 L1270.5,552.6 L1270.6,552.0 L1270.8,551.5 L1270.9,551.2 L1271.2,551.1 L1271.4,551.2 L1271.7,551.4 L1272.0,551.8 L1272.4,552.3 L1272.7,552.9 L1273.0,553.7 L1273.3,554.5 L1273.5,555.4 L1273.7,556.4 L1273.9,557.4 L1274.0,558.5 L1274.0,559.5 L1274.0,560.6 L1273.9,561.6 L1273.7,562.6 L1273.5,563.6 L1273.1,564.5 L1272.8,565.3 L1272.3,566.1 L1271.8,566.8 L1271.3,567.4 L1270.7,568.0 L1270.0,568.4 L1269.4,568.9 L1268.7,569.2 L1268.1,569.5 L1267.4,569.8 L1266.8,570.0 L1266.1,570.1 L1265.6,570.3 L1265.0,570.4 L1264.5,570.4 L1264.1,570.5 L1263.8,570.5 L1263.4,570.5 L1263.2,570.5 L1263.0,570.4 L1262.9,570.4 L1262.9,570.3 L1262.8,570.2 L1262.9,570.1 L1263.0,570.0 L1263.1,569.8 L1263.3,569.6 L1263.4,569.3 L1263.6,569.0 L1263.8,568.7 L1264.0,568.3 L1264.2,567.8 L1264.3,567.3 L1264.5,566.8 L1264.6,566.2 L1264.6,565.6 L1264.6,565.0 L1264.6,564.3 L1264.5,563.6 L1264.4,562.9 L1264.3,562.2 L1264.1,561.6 L1263.8,561.0 L1263.6,560.4 L1263.3,559.9 L1263.0,559.5 L1262.7,559.2 L1262.3,559.0 L1262.0,558.9 L1261.7,558.9 L1261.4,559.1 L1261.1,559.4 L1260.9,559.9 L1260.7,560.5 L1260.5,561.2 L1260.4,562.1 L1260.3,563.2 L1260.3,564.3 L1260.3,565.6 L1260.4,566.9 L1260.4,568.3 L1260.6,569.8 L1260.7,571.2 L1260.9,572.7 L1261.1,574.2 L1261.3,575.6 L1261.5,577.0 L1261.7,578.2 L1261.9,579.3 L1262.0,580.3 L1262.2,581.1 L1262.3,581.7 L1262.3,582.1 L1262.3,582.3 L1262.3,582.3 L1262.2,582.0 L1262.0,581.5 L1261.8,580.8 L1261.6,579.9 L1261.3,578.8 L1261.0,577.5 L1260.6,576.0 L1260.2,574.3 L1259.8,572.6 L1259.4,570.7 L1259.0,568.8 L1258.7,566.9 L1258.3,564.9 L1258.0,563.0 L1257.8,561.1 L1257.6,559.4 L1257.5,557.8 L1257.4,556.3 L1257.5,555.0M1270.8,579.8 L1271.6,577.5 L1272.4,575.2 L1273.4,572.7 L1274.4,570.2 L1275.6,567.7 L1276.7,565.3 L1277.9,563.0 L1279.1,560.8 L1280.2,558.8 L1281.3,557.0 L1282.3,555.4 L1283.2,554.1 L1283.9,553.1 L1284.6,552.4 L1285.1,552.0 L1285.5,551.9 L1285.7,552.2 L1285.7,552.8 L1285.6,553.7 L1285.4,555.0 L1284.9,556.5 L1284.4,558.2 L1283.7,560.3 L1282.9,562.5 L1282.1,564.8 L1281.1,567.3 L1280.1,569.9 L1279.1,572.6 L1278.1,575.2 L1277.1,577.8 L1276.2,580.3 L1275.3,582.7 L1274.5,584.9 L1273.8,586.9 L1273.2,588.7 L1272.7,590.2 L1272.4,591.4 L1272.2,592.3 L1272.1,592.8 L1272.2,593.1 L1272.5,593.0 L1272.9,592.5 L1273.4,591.8 L1274.0,590.7 L1274.7,589.3 L1275.6,587.6 L1276.4,585.7 L1277.4,583.5 L1278.3,581.2 L1279.3,578.7 L1280.2,576.2 L1281.1,573.5 L1282.0,570.9 L1282.8,568.2 L1283.4,565.6 L1284.0,563.2 L1284.4,560.8 L1284.7,558.7 L1284.9,556.8 L1284.9,555.1 L1284.7,553.7 L1284.4,552.6 L1284.0,551.8 L1283.4,551.3 L1282.7,551.2 L1281.9,551.4 L1281.1,551.9 L1280.1,552.7 L1279.1,553.9 L1278.1,555.3 L1277.0,557.0 L1276.0,558.9 L1275.0,561.0 L1274.0,563.3 L1273.2,565.7 L1272.4,568.2 L1271.8,570.8 L1271.3,573.4 L1270.9,575.9 L1270.7,578.3 L1270.7,580.7 L1270.8,582.9 L1271.1,584.9 L1271.5,586.8 L1272.1,588.3 L1272.9,589.7 L1273.7,590.7 L1274.7,591.5 L1275.8,591.9 L1276.9,592.1 L1278.1,591.9 L1279.3,591.4 L1280.6,590.7 L1281.8,589.6 L1282.9,588.3 L1284.0,586.8 L1285.0,585.0 L1285.9,583.1 L1286.6,581.0 L1287.2,578.8 L1287.6,576.5 L1287.9,574.1 L1287.9,571.7 L1287.8,569.4 L1287.5,567.1 L1287.0,564.9 L1286.4,562.8 L1285.6,560.9 L1284.6,559.1 L1283.5,557.6 L1282.3,556.3 L1281.0,555.2 L1279.6,554.4 L1278.2,553.8 L1276.8,553.5 L1275.4,553.5 L1274.1,553.8 L1272.8,554.3 L1271.6,555.1M1268.1,564.4 L1269.6,564.9 L1271.1,565.4 L1272.6,565.8 L1274.0,566.1 L1275.4,566.3 L1276.7,566.4 L1277.9,566.3 L1278.9,566.2 L1279.9,566.0 L1280.7,565.7 L1281.4,565.2 L1281.9,564.7 L1282.3,564.1 L1282.5,563.4 L1282.5,562.6 L1282.4,561.8 L1282.1,560.9 L1281.7,560.0 L1281.2,559.1 L1280.5,558.1 L1279.7,557.2 L1278.7,556.3 L1277.7,555.4 L1276.6,554.6 L1275.4,553.9 L1274.1,553.2 L1272.8,552.6 L1271.5,552.2 L1270.2,551.8 L1268.9,551.6 L1267.6,551.5 L1266.4,551.6 L1265.3,551.8 L1264.2,552.1 L1263.2,552.6 L1262.3,553.3 L1261.6,554.1 L1260.9,555.1 L1260.5,556.1 L1260.1,557.4 L1259.9,558.7 L1259.9,560.2 L1260.0,561.7 L1260.3,563.3 L1260.7,565.0 L1261.3,566.7 L1262.1,568.5 L1262.9,570.3 L1263.9,572.0 L1265.1,573.8 L1266.3,575.4 L1267.6,577.0 L1269.0,578.6 L1270.4,580.0 L1271.9,581.3 L1273.5,582.4 L1275.0,583.4 L1276.5,584.2 L1278.0,584.9 L1279.4,585.3 L1280.7,585.5 L1282.0,585.5 L1283.2,585.3 L1284.3,584.9 L1285.2,584.3 L1286.0,583.4 L1286.6,582.4 L1287.1,581.1 L1287.4,579.6 L1287.5,578.0 L1287.5,576.2 L1287.2,574.2 L1286.8,572.1 L1286.2,569.9 L1285.4,567.5 L1284.5,565.1 L1283.4,562.7 L1282.1,560.2 L1280.8,557.7 L1279.2,555.2 L1277.6,552.8 L1275.9,550.5 L1274.1,548.2 L1272.3,546.0 L1270.4,544.0 L1268.5,542.2 L1266.6,540.5 L1264.7,539.1 L1262.9,537.8 L1261.1,536.8 L1259.4,536.0 L1257.8,535.4 L1256.4,535.1 L1255.0,535.1 L1253.8,535.3 L1252.8,535.8 L1252.0,536.6 L1251.3,537.6 L1250.9,538.8 L1250.6,540.3 L1250.5,541.9 L1250.7,543.8 L1251.0,545.9 L1251.6,548.1 L1252.3,550.5 L1253.3,552.9 L1254.4,555.5 L1255.7,558.2 L1257.2,560.8 L1258.8,563.5 L1260.6,566.2 L1262.4,568.9 L1264.4,571.5 L1266.4,574.0 L1268.5,576.4 L1270.6,578.6 L1272.7,580.7 L1274.9,582.7 L1276.9,584.4M1264.6,541.5 L1264.5,541.8 L1264.4,542.3 L1264.3,543.0 L1264.2,543.8 L1264.2,544.8 L1264.2,545.9 L1264.1,547.3 L1264.2,548.7 L1264.2,550.4 L1264.3,552.1 L1264.4,554.0 L1264.5,555.9 L1264.6,557.9 L1264.7,559.9 L1264.9,561.9 L1265.0,563.9 L1265.2,565.8 L1265.3,567.7 L1265.4,569.3 L1265.5,570.9 L1265.6,572.2 L1265.5,573.3 L1265.5,574.2 L1265.4,574.8 L1265.2,575.2 L1264.9,575.2 L1264.5,574.9 L1264.1,574.3 L1263.6,573.4 L1263.0,572.2 L1262.3,570.7 L1261.6,568.9 L1260.7,566.8 L1259.8,564.5 L1258.8,561.9 L1257.8,559.2 L1256.7,556.3 L1255.6,553.3 L1254.4,550.2 L1253.3,547.1 L1252.1,544.0 L1251.0,540.9 L1249.9,537.9 L1248.8,535.1 L1247.8,532.4 L1246.8,529.9 L1246.0,527.6 L1245.2,525.6 L1244.5,524.0 L1244.0,522.6 L1243.5,521.6 L1243.2,520.9 L1243.0,520.6 L1243.0,520.7 L1243.1,521.1 L1243.3,521.9 L1243.6,523.0 L1244.1,524.4 L1244.7,526.2 L1245.5,528.2 L1246.3,530.5 L1247.2,532.9 L1248.2,535.6 L1249.3,538.4 L1250.5,541.3 L1251.7,544.2 L1252.9,547.2 L1254.2,550.1 L1255.5,553.0 L1256.8,555.7 L1258.0,558.4 L1259.3,560.8 L1260.5,563.0 L1261.6,565.0 L1262.7,566.8 L1263.7,568.3 L1264.7,569.5 L1265.6,570.4 L1266.4,571.0 L1267.1,571.3 L1267.7,571.3 L1268.3,571.0 L1268.8,570.5 L1269.2,569.7 L1269.5,568.7 L1269.8,567.5 L1270.0,566.1 L1270.1,564.6 L1270.2,562.9 L1270.3,561.2 L1270.3,559.4 L1270.2,557.6 L1270.2,555.8 L1270.1,554.1 L1270.0,552.3 L1269.9,550.7 L1269.8,549.2 L1269.7,547.8 L1269.6,546.6 L1269.5,545.5 L1269.4,544.6 L1269.3,543.8 L1269.1,543.2 L1269.0,542.7 L1268.9,542.4 L1268.8,542.3 L1268.6,542.3 L1268.4,542.3 L1268.3,542.5 L1268.0,542.8 L1267.8,543.0 L1267.5,543.4 L1267.2,543.7 L1266.9,544.0 L1266.5,544.3 L1266.0,544.5 L1265.6,544.6 L1265.0,544.6 L1264.5,544.5M1281.8,577.4 L1282.1,577.6 L1282.5,577.8 L1283.0,577.8 L1283.6,577.7 L1284.2,577.5 L1284.8,577.2 L1285.6,576.8 L1286.3,576.3 L1287.1,575.7 L1288.0,575.0 L1288.9,574.2 L1289.8,573.3 L1290.7,572.4 L1291.7,571.4 L1292.6,570.3 L1293.6,569.1 L1294.5,567.9 L1295.4,566.7 L1296.2,565.4 L1297.0,564.1 L1297.8,562.8 L1298.4,561.5 L1299.0,560.2 L1299.5,558.9 L1299.9,557.6 L1300.2,556.4 L1300.4,555.2 L1300.5,554.0 L1300.5,552.8 L1300.4,551.8 L1300.1,550.7 L1299.7,549.8 L1299.2,548.9 L1298.5,548.0 L1297.8,547.3 L1296.9,546.6 L1295.9,546.0 L1294.9,545.4 L1293.7,544.9 L1292.4,544.5 L1291.1,544.2 L1289.7,543.9 L1288.3,543.7 L1286.8,543.5 L1285.3,543.4 L1283.7,543.4 L1282.2,543.4 L1280.6,543.4 L1279.1,543.5 L1277.6,543.6 L1276.2,543.7 L1274.8,543.9 L1273.4,544.1 L1272.2,544.3 L1271.0,544.5 L1269.9,544.7 L1268.9,544.9 L1268.0,545.1 L1267.2,545.3 L1266.5,545.5 L1266.0,545.7 L1265.5,545.9 L1265.2,546.1 L1265.0,546.3 L1264.9,546.4 L1264.9,546.6 L1265.0,546.8 L1265.2,546.9 L1265.5,547.1 L1265.9,547.2 L1266.3,547.4 L1266.9,547.5 L1267.5,547.7 L1268.1,547.8 L1268.8,548.0 L1269.5,548.2 L1270.3,548.4 L1271.1,548.6 L1271.8,548.8 L1272.6,549.1 L1273.4,549.4 L1274.1,549.7 L1274.8,550.0 L1275.5,550.4 L1276.2,550.7 L1276.8,551.1 L1277.4,551.5 L1277.9,552.0 L1278.4,552.4 L1278.8,552.9 L1279.2,553.4 L1279.5,553.9 L1279.8,554.3 L1280.0,554.8 L1280.2,555.3 L1280.3,555.8 L1280.4,556.2 L1280.5,556.7 L1280.6,557.1 L1280.6,557.4 L1280.6,557.7 L1280.7,558.0 L1280.7,558.3 L1280.7,558.4 L1280.7,558.6 L1280.8,558.6 L1280.8,558.6 L1280.9,558.5 L1281.0,558.4 L1281.2,558.2 L1281.3,557.9 L1281.6,557.5 L1281.8,557.0 L1282.1,556.5 L1282.4,555.9 L1282.8,555.2 L1283.1,554.5 L1283.6,553.7 L1284.0,552.8M1275.7,572.8 L1274.7,573.3 L1273.6,573.9 L1272.6,574.4 L1271.6,574.9 L1270.6,575.4 L1269.7,575.9 L1268.9,576.3 L1268.2,576.6 L1267.6,576.9 L1267.1,577.1 L1266.8,577.3 L1266.6,577.3 L1266.6,577.3 L1266.7,577.3 L1267.0,577.1 L1267.5,576.9 L1268.1,576.7 L1268.9,576.3 L1269.8,576.0 L1270.8,575.6 L1271.9,575.2 L1273.1,574.7 L1274.4,574.3 L1275.7,573.9 L1277.0,573.4 L1278.4,573.1 L1279.7,572.8 L1281.0,572.5 L1282.2,572.3 L1283.3,572.2 L1284.3,572.2 L1285.2,572.3 L1286.0,572.4 L1286.6,572.7 L1287.1,573.1 L1287.4,573.6 L1287.5,574.3 L1287.5,575.0 L1287.3,575.8 L1287.0,576.7 L1286.5,577.7 L1285.8,578.8 L1285.1,579.9 L1284.2,581.1 L1283.3,582.3 L1282.3,583.5 L1281.2,584.7 L1280.2,585.9 L1279.1,587.1 L1278.1,588.1 L1277.1,589.2 L1276.2,590.1 L1275.4,590.9 L1274.7,591.6 L1274.1,592.2 L1273.6,592.6 L1273.3,592.9 L1273.2,593.0 L1273.2,592.9 L1273.3,592.7 L1273.6,592.4 L1274.1,591.9 L1274.7,591.2 L1275.4,590.4 L1276.2,589.4 L1277.2,588.4 L1278.1,587.2 L1279.2,585.9 L1280.2,584.5 L1281.3,583.1 L1282.3,581.7 L1283.3,580.2 L1284.2,578.7 L1285.0,577.2 L1285.7,575.7 L1286.2,574.3 L1286.6,572.9 L1286.8,571.7 L1286.8,570.5 L1286.6,569.3 L1286.2,568.3 L1285.6,567.4 L1284.8,566.7 L1283.8,566.0 L1282.7,565.4 L1281.3,565.0 L1279.9,564.7 L1278.3,564.4 L1276.6,564.3 L1274.8,564.3 L1272.9,564.3 L1271.0,564.4 L1269.2,564.6 L1267.3,564.8 L1265.6,565.0 L1263.9,565.2 L1262.3,565.5 L1260.9,565.7 L1259.7,565.9 L1258.7,566.1 L1257.8,566.3 L1257.2,566.4 L1256.8,566.5 L1256.7,566.5 L1256.8,566.4 L1257.1,566.4 L1257.7,566.2 L1258.5,566.0 L1259.5,565.8 L1260.7,565.6 L1262.1,565.3 L1263.6,565.0 L1265.3,564.7 L1267.1,564.5 L1268.9,564.2 L1270.8,564.0 L1272.7,563.9 L1274.5,563.8 L1276.3,563.8M1299.2,559.4 L1297.8,557.2 L1296.2,554.8 L1294.4,552.2 L1292.5,549.3 L1290.5,546.4 L1288.5,543.4 L1286.3,540.3 L1284.2,537.4 L1282.1,534.5 L1280.1,531.7 L1278.1,529.2 L1276.3,527.0 L1274.6,525.1 L1273.1,523.5 L1271.8,522.3 L1270.7,521.5 L1269.9,521.2 L1269.3,521.3 L1268.9,521.9 L1268.8,523.0 L1269.0,524.5 L1269.3,526.4 L1270.0,528.7 L1270.8,531.4 L1271.8,534.5 L1272.9,537.8 L1274.2,541.3 L1275.6,545.0 L1277.1,548.8 L1278.6,552.6 L1280.1,556.5 L1281.6,560.2 L1282.9,563.8 L1284.2,567.1 L1285.4,570.2 L1286.4,573.0 L1287.2,575.4 L1287.8,577.4 L1288.2,578.9 L1288.3,580.0 L1288.2,580.6 L1287.9,580.8 L1287.3,580.4 L1286.5,579.6 L1285.5,578.3 L1284.2,576.5 L1282.8,574.4 L1281.2,572.0 L1279.5,569.2 L1277.7,566.2 L1275.8,563.0 L1273.9,559.6 L1272.0,556.2 L1270.1,552.7 L1268.3,549.3 L1266.6,546.0 L1265.0,542.9 L1263.6,540.0 L1262.4,537.3 L1261.5,535.0 L1260.7,533.0 L1260.2,531.4 L1260.0,530.1 L1260.1,529.3 L1260.4,528.8 L1261.0,528.8 L1261.8,529.2 L1262.9,530.0 L1264.2,531.1 L1265.8,532.5 L1267.5,534.2 L1269.4,536.2 L1271.4,538.4 L1273.5,540.7 L1275.7,543.1 L1278.0,545.6 L1280.2,548.1 L1282.5,550.5 L1284.6,552.9 L1286.7,555.1 L1288.7,557.1 L1290.5,558.9 L1292.2,560.4 L1293.8,561.7 L1295.1,562.7 L1296.2,563.4 L1297.2,563.8 L1297.9,563.8 L1298.4,563.5 L1298.8,563.0 L1298.9,562.1 L1298.9,561.0 L1298.7,559.7 L1298.3,558.1 L1297.8,556.4 L1297.2,554.6 L1296.5,552.6 L1295.7,550.6 L1294.8,548.6 L1293.9,546.6 L1293.0,544.6 L1292.1,542.7 L1291.2,540.9 L1290.4,539.3 L1289.6,537.8 L1288.8,536.4 L1288.1,535.3 L1287.5,534.4 L1286.9,533.7 L1286.5,533.2 L1286.0,532.8 L1285.7,532.7 L1285.4,532.8 L1285.2,533.1 L1285.1,533.5 L1284.9,534.0 L1284.9,534.7 L1284.8,535.5 L1284.8,536.3M1267.1,565.9 L1268.1,568.0 L1269.1,570.3 L1270.1,572.6 L1271.3,575.0 L1272.4,577.4 L1273.6,579.8 L1274.7,582.1 L1275.8,584.3 L1276.8,586.3 L1277.7,588.1 L1278.5,589.6 L1279.1,590.8 L1279.6,591.8 L1279.9,592.4 L1280.0,592.7 L1280.0,592.7 L1279.7,592.3 L1279.3,591.6 L1278.8,590.5 L1278.1,589.2 L1277.2,587.6 L1276.2,585.8 L1275.2,583.7 L1274.0,581.6 L1272.9,579.3 L1271.7,576.9 L1270.5,574.5 L1269.3,572.1 L1268.2,569.8 L1267.2,567.7 L1266.3,565.6 L1265.5,563.8 L1264.8,562.2 L1264.3,560.8 L1264.0,559.7 L1263.9,558.9 L1263.9,558.3 L1264.1,558.0 L1264.5,558.0 L1265.0,558.3 L1265.7,558.8 L1266.5,559.5 L1267.5,560.4 L1268.5,561.5 L1269.6,562.6 L1270.8,563.9 L1272.0,565.1 L1273.2,566.4 L1274.4,567.6 L1275.5,568.8 L1276.6,569.8 L1277.6,570.7 L1278.5,571.4 L1279.4,571.9 L1280.1,572.2 L1280.6,572.3 L1281.1,572.2 L1281.4,571.8 L1281.6,571.2 L1281.7,570.5 L1281.6,569.5 L1281.5,568.4 L1281.3,567.2 L1281.1,565.8 L1280.8,564.4 L1280.5,563.0 L1280.2,561.6 L1280.0,560.3 L1279.8,559.1 L1279.6,557.9 L1279.6,557.0 L1279.6,556.2 L1279.8,555.7 L1280.1,555.4 L1280.6,555.3 L1281.1,555.5 L1281.9,556.0 L1282.7,556.7 L1283.7,557.6 L1284.8,558.7 L1286.0,560.1 L1287.3,561.6 L1288.6,563.3 L1290.0,565.0 L1291.4,566.8 L1292.8,568.6 L1294.2,570.4 L1295.5,572.1 L1296.7,573.7 L1297.9,575.1 L1298.9,576.3 L1299.7,577.3 L1300.4,578.1 L1300.9,578.5 L1301.2,578.7 L1301.3,578.5 L1301.3,578.1 L1301.0,577.3 L1300.5,576.2 L1299.9,574.8 L1299.1,573.2 L1298.1,571.3 L1297.0,569.2 L1295.8,567.0 L1294.5,564.7 L1293.1,562.2 L1291.7,559.8 L1290.3,557.3 L1289.0,554.9 L1287.6,552.7 L1286.4,550.5 L1285.2,548.6 L1284.2,546.9 L1283.3,545.5 L1282.5,544.4 L1281.9,543.6 L1281.5,543.0 L1281.2,542.9 L1281.1,543.0M1277.6,593.9 L1277.4,595.6 L1277.1,597.1 L1277.0,598.4 L1276.9,599.6 L1276.8,600.5 L1276.9,601.3 L1276.9,601.9 L1277.1,602.2 L1277.3,602.4 L1277.6,602.3 L1277.9,602.1 L1278.3,601.7 L1278.7,601.1 L1279.1,600.4 L1279.5,599.5 L1279.9,598.4 L1280.2,597.3 L1280.6,596.1 L1280.9,594.7 L1281.1,593.3 L1281.2,591.9 L1281.3,590.4 L1281.2,588.9 L1281.1,587.4 L1280.8,586.0 L1280.5,584.6 L1280.0,583.2 L1279.4,581.9 L1278.6,580.7 L1277.8,579.6 L1276.8,578.5 L1275.8,577.6 L1274.7,576.8 L1273.5,576.1 L1272.3,575.5 L1271.0,575.0 L1269.7,574.6 L1268.4,574.4 L1267.1,574.3 L1265.9,574.2 L1264.7,574.3 L1263.7,574.4 L1262.7,574.7 L1261.8,575.0 L1261.1,575.4 L1260.5,575.8 L1260.1,576.3 L1259.9,576.8 L1259.8,577.4 L1260.0,578.0 L1260.3,578.6 L1260.9,579.2 L1261.6,579.8 L1262.5,580.4 L1263.7,581.0 L1264.9,581.6 L1266.4,582.2 L1268.0,582.8 L1269.7,583.3 L1271.5,583.8 L1273.4,584.3 L1275.3,584.8 L1277.3,585.3 L1279.3,585.8 L1281.3,586.2 L1283.3,586.6 L1285.1,587.1 L1286.9,587.5 L1288.6,587.8 L1290.2,588.2 L1291.6,588.6 L1292.8,589.0 L1293.8,589.3 L1294.7,589.6 L1295.3,589.9 L1295.8,590.2 L1296.0,590.5 L1296.0,590.7 L1295.8,590.9 L1295.4,591.1 L1294.8,591.2 L1294.0,591.2 L1293.0,591.2 L1291.9,591.1 L1290.6,591.0 L1289.2,590.7 L1287.7,590.4 L1286.1,590.0 L1284.4,589.4 L1282.8,588.8 L1281.0,588.1 L1279.3,587.2 L1277.7,586.2 L1276.0,585.2 L1274.4,584.0 L1272.9,582.7 L1271.5,581.3 L1270.2,579.8 L1269.0,578.2 L1268.0,576.6 L1267.0,574.9 L1266.2,573.1 L1265.5,571.3 L1264.9,569.4 L1264.5,567.6 L1264.2,565.7 L1263.9,563.9 L1263.8,562.1 L1263.8,560.4 L1263.8,558.8 L1263.9,557.2 L1264.0,555.8 L1264.2,554.5 L1264.4,553.3 L1264.6,552.3 L1264.8,551.4 L1265.0,550.7 L1265.1,550.2 L1265.2,549.9M1269.6,563.3 L1270.1,564.2 L1270.7,565.1 L1271.2,565.9 L1271.7,566.6 L1272.2,567.2 L1272.7,567.7 L1273.2,568.1 L1273.6,568.3 L1274.0,568.4 L1274.4,568.4 L1274.7,568.2 L1274.9,567.9 L1275.1,567.4 L1275.3,566.8 L1275.3,566.1 L1275.3,565.2 L1275.2,564.1 L1275.1,563.0 L1274.9,561.7 L1274.6,560.3 L1274.3,558.9 L1274.0,557.4 L1273.6,555.8 L1273.1,554.2 L1272.6,552.6 L1272.1,551.0 L1271.6,549.4 L1271.0,547.9 L1270.4,546.4 L1269.9,545.0 L1269.3,543.7 L1268.8,542.6 L1268.3,541.5 L1267.8,540.6 L1267.3,539.9 L1266.9,539.3 L1266.5,538.9 L1266.2,538.7 L1265.9,538.7 L1265.7,538.8 L1265.5,539.2 L1265.4,539.7 L1265.3,540.5 L1265.3,541.4 L1265.4,542.5 L1265.5,543.7 L1265.6,545.1 L1265.8,546.7 L1266.0,548.3 L1266.2,550.1 L1266.5,551.9 L1266.8,553.8 L1267.1,555.8 L1267.4,557.8 L1267.7,559.7 L1268.0,561.7 L1268.3,563.6 L1268.6,565.5 L1268.8,567.3 L1269.0,569.0 L1269.2,570.6 L1269.4,572.1 L1269.5,573.4 L1269.6,574.6 L1269.6,575.7 L1269.6,576.5 L1269.5,577.2 L1269.4,577.7 L1269.3,578.1 L1269.1,578.2 L1268.9,578.2 L1268.6,578.0 L1268.4,577.6 L1268.1,577.1 L1267.8,576.5 L1267.5,575.7 L1267.1,574.8 L1266.8,573.7 L1266.5,572.6 L1266.2,571.4 L1266.0,570.2 L1265.8,568.9 L1265.6,567.6 L1265.5,566.3 L1265.4,565.0 L1265.4,563.8 L1265.5,562.6 L1265.6,561.5 L1265.8,560.4 L1266.0,559.4 L1266.4,558.6 L1266.8,557.8 L1267.3,557.2 L1267.9,556.7 L1268.5,556.3 L1269.2,556.1 L1270.0,556.0 L1270.8,556.0 L1271.6,556.2 L1272.5,556.5 L1273.4,556.9 L1274.4,557.4 L1275.3,558.0 L1276.3,558.6 L1277.2,559.4 L1278.1,560.2 L1279.0,561.0 L1279.9,561.9 L1280.7,562.8 L1281.4,563.7 L1282.0,564.5 L1282.6,565.4 L1283.1,566.1 L1283.5,566.8 L1283.8,567.5 L1283.9,568.0 L1284.0,568.4 L1283.9,568.7 L1283.7,568.9M1254.2,551.6 L1255.5,552.9 L1256.8,554.0 L1258.1,555.1 L1259.5,556.1 L1261.0,557.0 L1262.4,557.8 L1263.9,558.4 L1265.4,558.9 L1266.8,559.3 L1268.1,559.5 L1269.4,559.5 L1270.7,559.5 L1271.8,559.2 L1272.8,558.9 L1273.8,558.4 L1274.6,557.7 L1275.2,557.0 L1275.7,556.2 L1276.1,555.2 L1276.3,554.2 L1276.4,553.1 L1276.3,552.0 L1276.1,550.9 L1275.7,549.7 L1275.2,548.5 L1274.6,547.4 L1273.8,546.3 L1272.9,545.2 L1272.0,544.3 L1270.9,543.4 L1269.7,542.5 L1268.5,541.8 L1267.3,541.2 L1266.0,540.7 L1264.7,540.3 L1263.4,540.0 L1262.2,539.9 L1260.9,539.9 L1259.7,540.0 L1258.6,540.2 L1257.5,540.6 L1256.5,541.0 L1255.6,541.5 L1254.9,542.2 L1254.2,542.9 L1253.6,543.6 L1253.1,544.5 L1252.8,545.4 L1252.6,546.3 L1252.4,547.2 L1252.5,548.1 L1252.6,549.1 L1252.8,550.0 L1253.1,550.9 L1253.5,551.7 L1254.0,552.5 L1254.5,553.3 L1255.1,554.0 L1255.8,554.6 L1256.5,555.2 L1257.2,555.7 L1257.9,556.1 L1258.7,556.4 L1259.4,556.7 L1260.1,556.9 L1260.8,557.0 L1261.4,557.0 L1262.0,557.0 L1262.5,556.9 L1263.0,556.7 L1263.4,556.5 L1263.7,556.3 L1264.0,556.0 L1264.2,555.6 L1264.3,555.3 L1264.4,554.9 L1264.4,554.5 L1264.3,554.1 L1264.2,553.7 L1264.1,553.2 L1263.8,552.8 L1263.6,552.4 L1263.3,552.0 L1263.1,551.6 L1262.8,551.2 L1262.5,550.8 L1262.2,550.5 L1261.9,550.1 L1261.7,549.8 L1261.5,549.4 L1261.3,549.1 L1261.2,548.8 L1261.1,548.5 L1261.0,548.2 L1261.1,547.9 L1261.1,547.6 L1261.3,547.3 L1261.4,547.0 L1261.7,546.6 L1262.0,546.3 L1262.3,546.0 L1262.7,545.7 L1263.1,545.4 L1263.5,545.0 L1263.9,544.7 L1264.4,544.4 L1264.9,544.1 L1265.3,543.8 L1265.8,543.5 L1266.2,543.3 L1266.6,543.0 L1266.9,542.9 L1267.3,542.7 L1267.5,542.6 L1267.7,542.5 L1267.9,542.5 L1268.0,542.6 L1268.0,542.7 L1267.9,542.9M1263.2,551.7 L1262.8,552.1 L1262.4,552.5 L1262.1,552.8 L1261.9,553.1 L1261.8,553.4 L1261.8,553.7 L1261.9,554.0 L1262.1,554.2 L1262.4,554.5 L1262.8,554.7 L1263.3,555.0 L1263.9,555.2 L1264.5,555.5 L1265.3,555.8 L1266.1,556.1 L1266.9,556.4 L1267.8,556.8 L1268.7,557.3 L1269.6,557.7 L1270.5,558.2 L1271.3,558.8 L1272.2,559.4 L1273.0,560.0 L1273.7,560.7 L1274.4,561.4 L1275.0,562.1 L1275.5,562.9 L1275.9,563.7 L1276.2,564.5 L1276.4,565.3 L1276.6,566.0 L1276.6,566.8 L1276.5,567.5 L1276.4,568.1 L1276.1,568.7 L1275.8,569.2 L1275.4,569.6 L1275.0,569.9 L1274.5,570.1 L1273.9,570.2 L1273.4,570.1 L1272.7,569.9 L1272.1,569.6 L1271.5,569.1 L1270.8,568.4 L1270.2,567.5 L1269.6,566.5 L1268.9,565.4 L1268.3,564.1 L1267.8,562.7 L1267.2,561.1 L1266.7,559.4 L1266.2,557.6 L1265.6,555.7 L1265.2,553.8 L1264.7,551.7 L1264.2,549.7 L1263.7,547.6 L1263.2,545.6 L1262.8,543.5 L1262.3,541.5 L1261.8,539.6 L1261.2,537.8 L1260.7,536.1 L1260.1,534.5 L1259.5,533.1 L1258.9,531.8 L1258.3,530.7 L1257.7,529.8 L1257.0,529.1 L1256.4,528.6 L1255.8,528.3 L1255.2,528.3 L1254.6,528.4 L1254.1,528.8 L1253.6,529.4 L1253.2,530.2 L1252.9,531.2 L1252.7,532.3 L1252.6,533.7 L1252.6,535.2 L1252.7,536.9 L1253.0,538.7 L1253.5,540.6 L1254.0,542.6 L1254.8,544.7 L1255.7,546.8 L1256.7,549.0 L1258.0,551.2 L1259.3,553.4 L1260.8,555.6 L1262.4,557.8 L1264.2,559.9 L1266.0,562.0 L1267.9,564.0 L1269.9,565.9 L1271.9,567.7 L1273.9,569.4 L1275.9,571.0 L1277.9,572.5 L1279.8,573.8 L1281.6,575.0 L1283.2,576.1 L1284.8,577.0 L1286.1,577.8 L1287.3,578.4 L1288.3,578.9 L1289.0,579.3 L1289.6,579.5 L1289.8,579.5 L1289.9,579.4 L1289.6,579.2 L1289.1,578.8 L1288.4,578.3 L1287.4,577.7 L1286.2,576.9 L1284.7,576.0 L1283.1,575.0 L1281.3,573.9M1279.0,550.2 L1278.9,549.7 L1278.8,549.6 L1278.8,549.7 L1278.8,550.1 L1278.9,550.7 L1279.0,551.6 L1279.2,552.6 L1279.4,553.8 L1279.5,555.1 L1279.7,556.5 L1279.9,557.8 L1280.0,559.2 L1280.1,560.5 L1280.2,561.6 L1280.2,562.7 L1280.2,563.5 L1280.1,564.2 L1279.9,564.6 L1279.7,564.8 L1279.5,564.8 L1279.2,564.5 L1278.8,563.9 L1278.4,563.1 L1278.0,562.1 L1277.5,560.9 L1277.0,559.4 L1276.6,557.9 L1276.1,556.2 L1275.6,554.4 L1275.1,552.6 L1274.7,550.8 L1274.3,549.0 L1274.0,547.4 L1273.7,545.8 L1273.5,544.5 L1273.4,543.3 L1273.4,542.4 L1273.4,541.8 L1273.6,541.5 L1273.9,541.5 L1274.2,541.9 L1274.7,542.6 L1275.3,543.6 L1275.9,545.0 L1276.7,546.7 L1277.5,548.7 L1278.5,551.0 L1279.5,553.6 L1280.6,556.3 L1281.7,559.2 L1282.8,562.3 L1284.0,565.5 L1285.2,568.6 L1286.5,571.8 L1287.7,574.9 L1288.9,577.9 L1290.0,580.8 L1291.1,583.5 L1292.2,585.9 L1293.1,588.1 L1294.0,590.0 L1294.9,591.6 L1295.6,592.8 L1296.2,593.7 L1296.8,594.3 L1297.2,594.6 L1297.5,594.5 L1297.7,594.1 L1297.8,593.4 L1297.8,592.5 L1297.8,591.4 L1297.6,590.0 L1297.4,588.5 L1297.1,586.9 L1296.7,585.3 L1296.3,583.6 L1295.8,581.9 L1295.4,580.3 L1294.9,578.8 L1294.4,577.5 L1293.9,576.3 L1293.5,575.3 L1293.0,574.5 L1292.7,574.0 L1292.3,573.7 L1292.1,573.6 L1291.8,573.8 L1291.7,574.3 L1291.6,574.9 L1291.6,575.8 L1291.6,576.9 L1291.7,578.1 L1291.8,579.4 L1292.0,580.8 L1292.3,582.2 L1292.5,583.6 L1292.8,585.0 L1293.1,586.3 L1293.3,587.5 L1293.6,588.5 L1293.8,589.3 L1294.0,589.8 L1294.1,590.1 L1294.2,590.2 L1294.1,589.9 L1294.0,589.3 L1293.8,588.3 L1293.5,587.1 L1293.0,585.6 L1292.5,583.7 L1291.8,581.6 L1291.0,579.3 L1290.1,576.7 L1289.2,573.9 L1288.1,571.0 L1286.9,568.0 L1285.7,565.0 L1284.4,561.9 L1283.1,558.9M1274.4,557.2 L1275.5,558.3 L1276.7,559.5 L1278.0,560.7 L1279.3,561.9 L1280.7,563.0 L1282.1,564.0 L1283.5,565.0 L1284.9,565.8 L1286.3,566.6 L1287.7,567.3 L1289.0,567.9 L1290.3,568.3 L1291.5,568.6 L1292.7,568.8 L1293.7,568.9 L1294.7,568.9 L1295.6,568.7 L1296.4,568.4 L1297.1,568.1 L1297.7,567.6 L1298.2,567.1 L1298.6,566.4 L1298.9,565.8 L1299.1,565.0 L1299.2,564.3 L1299.2,563.5 L1299.1,562.7 L1298.9,562.0 L1298.7,561.2 L1298.4,560.5 L1298.0,559.8 L1297.5,559.1 L1296.9,558.5 L1296.3,558.0 L1295.7,557.6 L1295.0,557.2 L1294.3,556.9 L1293.5,556.7 L1292.7,556.6 L1291.8,556.5 L1291.0,556.5 L1290.1,556.6 L1289.2,556.8 L1288.2,557.0 L1287.3,557.3 L1286.4,557.6 L1285.4,558.0 L1284.5,558.4 L1283.5,558.8 L1282.5,559.3 L1281.6,559.7 L1280.7,560.1 L1279.8,560.5 L1278.9,560.9 L1278.0,561.3 L1277.1,561.7 L1276.3,562.0 L1275.5,562.2 L1274.8,562.4 L1274.1,562.6 L1273.4,562.7 L1272.8,562.8 L1272.3,562.9 L1271.8,562.9 L1271.4,562.9 L1271.1,562.8 L1270.8,562.8 L1270.7,562.7 L1270.6,562.6 L1270.6,562.5 L1270.7,562.4 L1270.9,562.4 L1271.2,562.3 L1271.6,562.3 L1272.0,562.4 L1272.6,562.5 L1273.3,562.6 L1274.0,562.8 L1274.8,563.0 L1275.7,563.3 L1276.7,563.7 L1277.7,564.1 L1278.8,564.6 L1279.9,565.1 L1281.0,565.7 L1282.2,566.3 L1283.4,566.9 L1284.5,567.6 L1285.7,568.3 L1286.8,569.0 L1287.8,569.7 L1288.8,570.4 L1289.7,571.0 L1290.6,571.6 L1291.3,572.2 L1291.9,572.6 L1292.4,573.1 L1292.8,573.4 L1293.1,573.6 L1293.2,573.7 L1293.1,573.8 L1292.9,573.7 L1292.6,573.5 L1292.1,573.1 L1291.4,572.7 L1290.6,572.1 L1289.6,571.4 L1288.6,570.6 L1287.4,569.7 L1286.0,568.8 L1284.6,567.7 L1283.1,566.6 L1281.5,565.4 L1279.8,564.2 L1278.1,562.9 L1276.4,561.7 L1274.7,560.5 L1272.9,559.3 L1271.3,558.1M1281.1,549.6 L1282.5,549.0 L1283.9,548.3 L1285.2,547.8 L1286.6,547.3 L1287.8,546.8 L1289.0,546.5 L1290.1,546.3 L1291.1,546.2 L1292.0,546.3 L1292.7,546.4 L1293.3,546.7 L1293.8,547.2 L1294.0,547.8 L1294.2,548.5 L1294.1,549.4 L1293.9,550.3 L1293.6,551.4 L1293.1,552.6 L1292.5,553.8 L1291.7,555.1 L1290.9,556.4 L1289.9,557.8 L1288.9,559.1 L1287.8,560.4 L1286.6,561.7 L1285.4,562.9 L1284.2,564.0 L1283.1,565.0 L1281.9,565.8 L1280.8,566.5 L1279.8,567.0 L1278.8,567.4 L1277.9,567.5 L1277.2,567.5 L1276.5,567.2 L1276.0,566.8 L1275.5,566.1 L1275.3,565.2 L1275.1,564.1 L1275.1,562.9 L1275.2,561.4 L1275.4,559.9 L1275.7,558.1 L1276.1,556.3 L1276.6,554.3 L1277.2,552.3 L1277.9,550.3 L1278.6,548.2 L1279.3,546.2 L1280.0,544.2 L1280.8,542.3 L1281.5,540.4 L1282.2,538.8 L1282.9,537.2 L1283.5,535.8 L1284.1,534.7 L1284.6,533.7 L1285.0,533.0 L1285.3,532.6 L1285.6,532.3 L1285.7,532.4 L1285.8,532.7 L1285.7,533.3 L1285.6,534.1 L1285.4,535.2 L1285.1,536.5 L1284.8,538.1 L1284.4,539.8 L1284.0,541.7 L1283.5,543.8 L1283.0,546.0 L1282.6,548.3 L1282.1,550.7 L1281.7,553.1 L1281.3,555.6 L1280.9,558.0 L1280.6,560.4 L1280.4,562.6 L1280.3,564.8 L1280.2,566.8 L1280.2,568.6 L1280.3,570.3 L1280.5,571.7 L1280.8,572.9 L1281.2,573.9 L1281.6,574.6 L1282.1,575.0 L1282.7,575.1 L1283.4,575.0 L1284.0,574.6 L1284.7,574.0 L1285.5,573.0 L1286.2,571.9 L1286.9,570.5 L1287.5,568.9 L1288.1,567.1 L1288.7,565.2 L1289.2,563.1 L1289.5,560.9 L1289.8,558.7 L1290.0,556.4 L1290.1,554.0 L1290.0,551.7 L1289.8,549.4 L1289.5,547.2 L1289.1,545.0 L1288.5,543.0 L1287.8,541.2 L1287.1,539.5 L1286.2,537.9 L1285.2,536.6 L1284.1,535.5 L1283.0,534.6 L1281.9,533.9 L1280.7,533.5 L1279.6,533.3 L1278.4,533.3 L1277.3,533.6 L1276.2,534.1M1281.1,593.8 L1281.8,592.1 L1282.5,590.2 L1283.3,588.1 L1284.1,585.8 L1285.0,583.3 L1285.9,580.7 L1286.7,578.1 L1287.5,575.4 L1288.3,572.6 L1289.0,569.9 L1289.6,567.2 L1290.1,564.6 L1290.5,562.2 L1290.8,559.9 L1291.0,557.7 L1291.0,555.8 L1290.9,554.0 L1290.6,552.6 L1290.2,551.3 L1289.7,550.4 L1289.0,549.8 L1288.3,549.4 L1287.4,549.3 L1286.4,549.5 L1285.4,550.1 L1284.3,550.8 L1283.1,551.9 L1282.0,553.2 L1280.8,554.7 L1279.7,556.4 L1278.6,558.4 L1277.6,560.4 L1276.7,562.6 L1275.8,564.9 L1275.1,567.3 L1274.6,569.7 L1274.2,572.1 L1273.9,574.5 L1273.8,576.9 L1273.9,579.2 L1274.2,581.4 L1274.6,583.4 L1275.2,585.3 L1275.9,587.1 L1276.8,588.6 L1277.8,590.0 L1279.0,591.1 L1280.2,592.0 L1281.5,592.7 L1282.9,593.2 L1284.3,593.4 L1285.7,593.5 L1287.1,593.3 L1288.5,592.8 L1289.8,592.2 L1291.0,591.4 L1292.0,590.4 L1293.0,589.3 L1293.8,588.0 L1294.5,586.6 L1295.0,585.1 L1295.3,583.5 L1295.4,581.8 L1295.3,580.1 L1295.0,578.4 L1294.5,576.7 L1293.9,575.0 L1293.0,573.3 L1292.1,571.6 L1290.9,570.0 L1289.7,568.5 L1288.3,567.1 L1286.9,565.8 L1285.4,564.6 L1283.9,563.5 L1282.4,562.5 L1280.9,561.6 L1279.4,560.9 L1278.0,560.3 L1276.7,559.9 L1275.6,559.5 L1274.6,559.3 L1273.7,559.2 L1273.0,559.3 L1272.5,559.5 L1272.1,559.7 L1272.0,560.1 L1272.1,560.6 L1272.4,561.2 L1272.9,561.8 L1273.5,562.6 L1274.4,563.4 L1275.3,564.3 L1276.5,565.3 L1277.7,566.3 L1279.1,567.3 L1280.5,568.4 L1282.0,569.5 L1283.5,570.7 L1285.0,571.8 L1286.5,573.0 L1287.9,574.2 L1289.3,575.4 L1290.5,576.5 L1291.6,577.6 L1292.6,578.8 L1293.4,579.8 L1294.0,580.9 L1294.5,581.8 L1294.8,582.8 L1294.8,583.6 L1294.7,584.4 L1294.3,585.1 L1293.8,585.7 L1293.1,586.2 L1292.3,586.6 L1291.2,586.9 L1290.1,587.1 L1288.8,587.2M1263.9,546.4 L1263.9,545.6 L1263.9,545.0 L1264.0,544.4 L1264.2,544.0 L1264.4,543.6 L1264.8,543.4 L1265.1,543.2 L1265.6,543.2 L1266.1,543.3 L1266.7,543.6 L1267.3,543.9 L1267.9,544.4 L1268.7,545.0 L1269.4,545.7 L1270.2,546.5 L1271.0,547.5 L1271.8,548.5 L1272.6,549.6 L1273.5,550.8 L1274.3,552.1 L1275.1,553.4 L1275.9,554.8 L1276.7,556.1 L1277.4,557.5 L1278.1,559.0 L1278.7,560.4 L1279.3,561.7 L1279.9,563.1 L1280.3,564.3 L1280.7,565.5 L1281.0,566.7 L1281.3,567.7 L1281.4,568.6 L1281.5,569.4 L1281.5,570.1 L1281.4,570.7 L1281.2,571.1 L1281.0,571.4 L1280.7,571.5 L1280.2,571.4 L1279.7,571.3 L1279.2,570.9 L1278.5,570.4 L1277.8,569.7 L1277.1,568.9 L1276.3,568.0 L1275.4,566.9 L1274.5,565.7 L1273.6,564.4 L1272.7,562.9 L1271.7,561.4 L1270.7,559.8 L1269.8,558.1 L1268.8,556.3 L1267.9,554.5 L1267.0,552.7 L1266.1,550.9 L1265.2,549.1 L1264.4,547.3 L1263.7,545.5 L1263.0,543.8 L1262.4,542.1 L1261.8,540.5 L1261.3,539.1 L1260.9,537.7 L1260.5,536.4 L1260.3,535.2 L1260.1,534.2 L1260.0,533.3 L1259.9,532.6 L1260.0,532.0 L1260.1,531.6 L1260.3,531.3 L1260.5,531.2 L1260.9,531.3 L1261.2,531.5 L1261.7,531.8 L1262.2,532.3 L1262.7,533.0 L1263.2,533.7 L1263.8,534.6 L1264.5,535.6 L1265.1,536.7 L1265.7,537.9 L1266.4,539.2 L1267.0,540.5 L1267.7,541.9 L1268.3,543.3 L1268.9,544.7 L1269.4,546.2 L1270.0,547.6 L1270.4,549.0 L1270.9,550.4 L1271.3,551.7 L1271.6,553.0 L1271.9,554.2 L1272.2,555.3 L1272.3,556.3 L1272.5,557.2 L1272.5,558.0 L1272.5,558.7 L1272.5,559.3 L1272.4,559.7 L1272.2,560.1 L1272.0,560.3 L1271.7,560.3 L1271.5,560.3 L1271.1,560.1 L1270.8,559.8 L1270.4,559.4 L1270.0,558.9 L1269.6,558.3 L1269.2,557.7 L1268.8,556.9 L1268.4,556.1 L1268.0,555.2 L1267.6,554.3 L1267.3,553.4 L1266.9,552.4M1277.8,565.6 L1278.0,567.1 L1278.3,568.6 L1278.4,570.1 L1278.6,571.7 L1278.6,573.3 L1278.6,574.9 L1278.6,576.4 L1278.5,577.9 L1278.3,579.3 L1278.0,580.7 L1277.7,582.0 L1277.3,583.1 L1276.9,584.2 L1276.4,585.1 L1275.8,586.0 L1275.2,586.6 L1274.6,587.2 L1273.9,587.6 L1273.2,587.8 L1272.4,587.9 L1271.7,587.9 L1271.0,587.7 L1270.2,587.4 L1269.5,587.0 L1268.8,586.5 L1268.2,585.9 L1267.6,585.1 L1267.0,584.3 L1266.6,583.5 L1266.2,582.5 L1265.8,581.6 L1265.6,580.6 L1265.4,579.6 L1265.4,578.6 L1265.5,577.6 L1265.6,576.7 L1265.9,575.8 L1266.3,575.0 L1266.8,574.2 L1267.4,573.5 L1268.1,572.9 L1268.9,572.4 L1269.8,572.0 L1270.7,571.7 L1271.8,571.5 L1272.9,571.4 L1274.1,571.4 L1275.4,571.6 L1276.7,571.8 L1278.0,572.1 L1279.3,572.5 L1280.6,573.0 L1281.9,573.6 L1283.2,574.3 L1284.4,575.0 L1285.6,575.7 L1286.7,576.5 L1287.7,577.3 L1288.6,578.1 L1289.5,578.9 L1290.2,579.7 L1290.8,580.5 L1291.2,581.2 L1291.6,581.9 L1291.7,582.6 L1291.8,583.1 L1291.7,583.7 L1291.4,584.1 L1291.0,584.4 L1290.4,584.7 L1289.7,584.8 L1288.9,584.9 L1288.0,584.9 L1286.9,584.8 L1285.7,584.6 L1284.4,584.3 L1283.0,583.9 L1281.6,583.5 L1280.1,583.0 L1278.6,582.4 L1277.0,581.8 L1275.4,581.1 L1273.8,580.5 L1272.2,579.8 L1270.7,579.1 L1269.2,578.3 L1267.8,577.7 L1266.4,577.0 L1265.2,576.3 L1264.0,575.7 L1263.0,575.2 L1262.1,574.6 L1261.3,574.2 L1260.7,573.8 L1260.2,573.5 L1259.8,573.2 L1259.6,573.1 L1259.6,573.0 L1259.7,572.9 L1259.9,573.0 L1260.3,573.1 L1260.9,573.2 L1261.5,573.5 L1262.3,573.7 L1263.2,574.0 L1264.2,574.4 L1265.3,574.7 L1266.5,575.1 L1267.7,575.5 L1269.0,575.9 L1270.3,576.3 L1271.6,576.6 L1273.0,576.9 L1274.3,577.2 L1275.6,577.4 L1276.9,577.5 L1278.1,577.6 L1279.2,577.6 L1280.2,577.5M1268.3,562.5 L1269.3,563.4 L1270.3,564.2 L1271.3,565.1 L1272.4,566.0 L1273.4,566.9 L1274.3,567.7 L1275.3,568.5 L1276.2,569.3 L1277.0,570.1 L1277.8,570.8 L1278.5,571.4 L1279.2,572.0 L1279.8,572.6 L1280.3,573.1 L1280.7,573.5 L1281.1,573.8 L1281.4,574.1 L1281.6,574.3 L1281.7,574.4 L1281.8,574.4 L1281.7,574.4 L1281.6,574.2 L1281.4,574.0 L1281.1,573.6 L1280.8,573.2 L1280.4,572.7 L1279.9,572.1 L1279.4,571.4 L1278.8,570.7 L1278.2,569.8 L1277.6,568.9 L1276.9,567.9 L1276.2,566.8 L1275.5,565.7 L1274.7,564.5 L1274.0,563.3 L1273.3,562.1 L1272.6,560.8 L1271.9,559.4 L1271.2,558.1 L1270.6,556.7 L1270.0,555.4 L1269.4,554.0 L1268.9,552.7 L1268.4,551.4 L1268.0,550.1 L1267.7,548.9 L1267.4,547.7 L1267.1,546.6 L1267.0,545.5 L1266.9,544.5 L1266.8,543.6 L1266.8,542.8 L1266.9,542.1 L1267.0,541.5 L1267.2,541.0 L1267.5,540.6 L1267.8,540.3 L1268.1,540.1 L1268.5,540.1 L1268.9,540.2 L1269.4,540.4 L1269.9,540.7 L1270.4,541.1 L1270.9,541.7 L1271.5,542.3 L1272.0,543.1 L1272.6,544.0 L1273.1,545.0 L1273.7,546.0 L1274.3,547.2 L1274.8,548.5 L1275.3,549.8 L1275.8,551.2 L1276.3,552.6 L1276.7,554.1 L1277.1,555.6 L1277.5,557.1 L1277.8,558.7 L1278.1,560.3 L1278.3,561.8 L1278.5,563.3 L1278.7,564.9 L1278.8,566.3 L1278.8,567.7 L1278.9,569.1 L1278.8,570.4 L1278.8,571.6 L1278.6,572.8 L1278.5,573.8 L1278.3,574.8 L1278.1,575.6 L1277.8,576.3 L1277.5,576.9 L1277.2,577.4 L1276.8,577.8 L1276.4,578.1 L1276.0,578.2 L1275.6,578.2 L1275.2,578.1 L1274.8,577.8 L1274.3,577.5 L1273.8,577.0 L1273.4,576.4 L1272.9,575.7 L1272.4,575.0 L1272.0,574.1 L1271.5,573.1 L1271.0,572.1 L1270.6,571.0 L1270.2,569.8 L1269.7,568.6 L1269.3,567.3 L1268.9,566.0 L1268.5,564.7 L1268.2,563.4 L1267.8,562.1 L1267.5,560.8 L1267.2,559.5M1292.7,555.7 L1292.6,555.3 L1292.5,554.9 L1292.2,554.5 L1291.9,554.2 L1291.5,553.9 L1291.1,553.6 L1290.6,553.3 L1290.0,553.1 L1289.3,552.9 L1288.7,552.8 L1287.9,552.8 L1287.2,552.8 L1286.5,552.8 L1285.7,552.9 L1285.0,553.1 L1284.2,553.2 L1283.5,553.5 L1282.8,553.7 L1282.1,554.0 L1281.5,554.3 L1280.9,554.7 L1280.3,555.0 L1279.8,555.4 L1279.4,555.7 L1279.0,556.0 L1278.6,556.3 L1278.3,556.5 L1278.1,556.7 L1277.9,556.9 L1277.7,557.0 L1277.6,557.0 L1277.5,557.0 L1277.4,556.9 L1277.4,556.7 L1277.4,556.5 L1277.3,556.1 L1277.3,555.7 L1277.3,555.2 L1277.3,554.6 L1277.2,553.9 L1277.1,553.2 L1277.0,552.4 L1276.8,551.6 L1276.6,550.6 L1276.4,549.7 L1276.0,548.7 L1275.7,547.7 L1275.3,546.6 L1274.8,545.6 L1274.2,544.5 L1273.7,543.5 L1273.0,542.5 L1272.3,541.6 L1271.6,540.7 L1270.8,539.8 L1270.0,539.1 L1269.2,538.4 L1268.4,537.8 L1267.5,537.3 L1266.7,536.9 L1265.9,536.7 L1265.1,536.6 L1264.3,536.6 L1263.6,536.7 L1263.0,537.0 L1262.4,537.4 L1261.9,537.9 L1261.5,538.6 L1261.2,539.4 L1261.0,540.4 L1260.9,541.4 L1260.9,542.6 L1261.0,543.9 L1261.3,545.3 L1261.7,546.8 L1262.2,548.4 L1262.8,550.0 L1263.6,551.7 L1264.5,553.4 L1265.4,555.2 L1266.5,557.0 L1267.7,558.8 L1269.0,560.5 L1270.3,562.3 L1271.7,564.0 L1273.2,565.6 L1274.6,567.2 L1276.1,568.7 L1277.6,570.1 L1279.1,571.3 L1280.6,572.5 L1282.0,573.6 L1283.4,574.5 L1284.6,575.2 L1285.8,575.8 L1286.9,576.3 L1287.9,576.6 L1288.8,576.7 L1289.5,576.7 L1290.1,576.5 L1290.5,576.1 L1290.8,575.6 L1291.0,574.9 L1290.9,574.1 L1290.8,573.1 L1290.4,572.0 L1289.9,570.7 L1289.3,569.3 L1288.5,567.8 L1287.6,566.2 L1286.6,564.5 L1285.4,562.7 L1284.2,560.9 L1282.9,559.0 L1281.5,557.0 L1280.1,555.1 L1278.7,553.1 L1277.2,551.1 L1275.7,549.2M1253.2,550.9 L1252.1,549.3 L1251.2,547.7 L1250.3,546.3 L1249.6,545.1 L1249.1,543.9 L1248.7,543.0 L1248.4,542.2 L1248.4,541.6 L1248.4,541.2 L1248.6,540.9 L1249.0,540.8 L1249.5,540.8 L1250.2,541.0 L1251.0,541.4 L1251.9,541.9 L1253.0,542.5 L1254.1,543.3 L1255.4,544.2 L1256.7,545.1 L1258.1,546.2 L1259.6,547.4 L1261.1,548.7 L1262.6,550.0 L1264.2,551.3 L1265.7,552.7 L1267.3,554.1 L1268.8,555.5 L1270.3,556.9 L1271.8,558.2 L1273.1,559.6 L1274.4,560.8 L1275.6,562.1 L1276.8,563.2 L1277.8,564.3 L1278.7,565.2 L1279.4,566.1 L1280.1,566.9 L1280.6,567.5 L1281.0,568.1 L1281.2,568.5 L1281.3,568.8 L1281.3,568.9 L1281.1,569.0 L1280.8,568.9 L1280.4,568.7 L1279.9,568.3 L1279.3,567.9 L1278.5,567.4 L1277.7,566.7 L1276.8,566.0 L1275.8,565.2 L1274.8,564.3 L1273.7,563.4 L1272.6,562.4 L1271.4,561.4 L1270.3,560.4 L1269.1,559.4 L1268.0,558.3 L1266.9,557.3 L1265.8,556.4 L1264.8,555.4 L1263.9,554.6 L1263.0,553.8 L1262.3,553.0 L1261.6,552.4 L1261.0,551.9 L1260.5,551.5 L1260.2,551.3 L1259.9,551.1 L1259.8,551.1 L1259.8,551.2 L1259.9,551.5 L1260.1,552.0 L1260.5,552.6 L1260.9,553.3 L1261.5,554.2 L1262.2,555.2 L1263.0,556.4 L1263.8,557.7 L1264.8,559.1 L1265.8,560.7 L1266.9,562.3 L1268.1,564.1 L1269.2,565.9 L1270.4,567.8 L1271.7,569.8 L1272.9,571.8 L1274.1,573.9 L1275.3,575.9 L1276.5,578.0 L1277.6,580.0 L1278.6,582.0 L1279.6,584.0 L1280.6,585.8 L1281.4,587.6 L1282.1,589.3 L1282.8,590.9 L1283.3,592.4 L1283.7,593.7 L1284.0,594.8 L1284.2,595.8 L1284.3,596.6 L1284.2,597.2 L1284.0,597.7 L1283.7,597.9 L1283.3,598.0 L1282.8,597.8 L1282.1,597.4 L1281.3,596.8 L1280.5,596.1 L1279.5,595.1 L1278.5,593.9 L1277.4,592.6 L1276.2,591.1 L1275.0,589.4 L1273.7,587.5 L1272.4,585.5 L1271.1,583.4 L1269.7,581.2M1284.6,570.6 L1285.9,570.7 L1287.0,570.7 L1287.9,570.5 L1288.5,570.1 L1288.9,569.6 L1289.2,568.9 L1289.2,568.1 L1289.0,567.2 L1288.6,566.2 L1288.0,565.2 L1287.4,564.1 L1286.6,563.0 L1285.7,561.9 L1284.8,560.8 L1283.9,559.8 L1283.0,558.8 L1282.1,557.9 L1281.3,557.1 L1280.6,556.5 L1280.0,556.0 L1279.5,555.6 L1279.2,555.4 L1279.1,555.3 L1279.2,555.3 L1279.4,555.5 L1279.9,555.9 L1280.5,556.3 L1281.3,556.9 L1282.3,557.5 L1283.4,558.3 L1284.6,559.1 L1285.9,559.9 L1287.3,560.7 L1288.7,561.5 L1290.1,562.3 L1291.4,563.1 L1292.7,563.7 L1294.0,564.3 L1295.0,564.8 L1295.9,565.1 L1296.7,565.4 L1297.2,565.4 L1297.5,565.3 L1297.5,565.1 L1297.3,564.7 L1296.8,564.2 L1296.1,563.5 L1295.1,562.7 L1293.8,561.8 L1292.3,560.8 L1290.6,559.7 L1288.7,558.5 L1286.7,557.3 L1284.5,556.1 L1282.2,554.9 L1279.8,553.7 L1277.4,552.5 L1275.0,551.5 L1272.7,550.5 L1270.4,549.6 L1268.3,548.9 L1266.3,548.3 L1264.5,547.8 L1263.0,547.6 L1261.6,547.5 L1260.5,547.6 L1259.7,547.8 L1259.2,548.3 L1258.9,548.9 L1258.9,549.7 L1259.2,550.6 L1259.8,551.6 L1260.6,552.8 L1261.6,554.0 L1262.9,555.4 L1264.3,556.7 L1265.8,558.1 L1267.5,559.5 L1269.2,560.9 L1271.0,562.2 L1272.7,563.5 L1274.5,564.6 L1276.1,565.7 L1277.7,566.6 L1279.2,567.4 L1280.5,568.0 L1281.6,568.5 L1282.6,568.8 L1283.3,569.0 L1283.9,569.0 L1284.3,568.8 L1284.4,568.5 L1284.3,568.0 L1284.1,567.4 L1283.7,566.7 L1283.2,565.9 L1282.5,565.1 L1281.7,564.2 L1280.9,563.2 L1280.0,562.3 L1279.1,561.3 L1278.3,560.4 L1277.5,559.6 L1276.8,558.8 L1276.2,558.1 L1275.7,557.5 L1275.4,557.1 L1275.3,556.7 L1275.3,556.5 L1275.6,556.4 L1276.1,556.5 L1276.8,556.7 L1277.6,557.0 L1278.7,557.4 L1280.0,558.0 L1281.4,558.6 L1282.9,559.3 L1284.6,560.1 L1286.3,560.9M1286.9,561.5 L1286.8,558.5 L1286.7,555.4 L1286.4,552.4 L1286.1,549.4 L1285.7,546.5 L1285.2,543.8 L1284.7,541.3 L1284.2,539.0 L1283.6,537.1 L1283.0,535.5 L1282.4,534.2 L1281.8,533.4 L1281.2,533.0 L1280.7,533.0 L1280.2,533.5 L1279.8,534.4 L1279.4,535.7 L1279.1,537.5 L1278.9,539.6 L1278.8,542.2 L1278.8,545.0 L1278.8,548.2 L1279.0,551.6 L1279.3,555.2 L1279.7,559.0 L1280.1,562.9 L1280.6,566.8 L1281.2,570.7 L1281.9,574.5 L1282.6,578.2 L1283.4,581.6 L1284.2,584.9 L1285.0,587.8 L1285.8,590.5 L1286.5,592.7 L1287.3,594.6 L1288.0,596.0 L1288.6,597.0 L1289.2,597.6 L1289.7,597.7 L1290.1,597.3 L1290.4,596.5 L1290.6,595.2 L1290.7,593.6 L1290.6,591.6 L1290.5,589.3 L1290.2,586.7 L1289.8,583.8 L1289.3,580.7 L1288.6,577.6 L1287.9,574.3 L1287.1,571.0 L1286.1,567.7 L1285.1,564.5 L1284.1,561.5 L1282.9,558.6 L1281.7,556.0 L1280.5,553.6 L1279.3,551.5 L1278.1,549.8 L1276.9,548.4 L1275.7,547.4 L1274.5,546.8 L1273.4,546.6 L1272.3,546.7 L1271.3,547.2 L1270.4,548.1 L1269.6,549.3 L1268.8,550.8 L1268.2,552.6 L1267.6,554.6 L1267.1,556.7 L1266.7,559.0 L1266.4,561.4 L1266.3,563.9 L1266.2,566.3 L1266.1,568.7 L1266.2,570.9 L1266.4,573.1 L1266.6,575.0 L1266.9,576.7 L1267.2,578.1 L1267.6,579.3 L1268.0,580.2 L1268.5,580.7 L1269.0,580.9 L1269.5,580.8 L1270.0,580.3 L1270.6,579.6 L1271.1,578.5 L1271.7,577.2 L1272.3,575.6 L1272.8,573.8 L1273.4,571.8 L1273.9,569.8 L1274.5,567.6 L1275.0,565.4 L1275.5,563.2 L1276.1,561.0 L1276.6,559.0 L1277.1,557.1 L1277.6,555.4 L1278.1,554.0 L1278.6,552.7 L1279.1,551.8 L1279.7,551.3 L1280.2,551.0 L1280.7,551.1 L1281.2,551.6 L1281.8,552.4 L1282.3,553.5 L1282.9,555.0 L1283.4,556.8 L1283.9,558.8 L1284.5,561.2 L1285.0,563.7 L1285.5,566.4 L1286.0,569.2 L1286.4,572.1M1289.7,571.9 L1291.5,572.9 L1293.2,573.7 L1294.7,574.4 L1296.0,574.8 L1297.0,575.1 L1297.8,575.1 L1298.3,574.9 L1298.5,574.5 L1298.5,573.9 L1298.2,573.1 L1297.7,572.1 L1296.8,570.9 L1295.8,569.5 L1294.4,567.9 L1292.9,566.2 L1291.1,564.4 L1289.2,562.5 L1287.1,560.5 L1284.8,558.4 L1282.4,556.3 L1279.9,554.3 L1277.4,552.2 L1274.8,550.2 L1272.3,548.2 L1269.7,546.3 L1267.2,544.6 L1264.8,543.0 L1262.5,541.6 L1260.3,540.3 L1258.3,539.2 L1256.5,538.3 L1254.8,537.7 L1253.4,537.2 L1252.3,537.0 L1251.3,537.0 L1250.7,537.3 L1250.2,537.7 L1250.1,538.4 L1250.2,539.3 L1250.6,540.4 L1251.2,541.6 L1252.0,543.1 L1253.1,544.6 L1254.4,546.3 L1255.9,548.1 L1257.6,550.0 L1259.5,551.9 L1261.4,553.8 L1263.5,555.8 L1265.7,557.7 L1267.9,559.6 L1270.1,561.4 L1272.4,563.1 L1274.6,564.8 L1276.8,566.3 L1279.0,567.6 L1281.0,568.8 L1282.9,569.8 L1284.7,570.7 L1286.4,571.4 L1287.8,571.9 L1289.1,572.2 L1290.3,572.3 L1291.2,572.2 L1291.9,571.9 L1292.4,571.5 L1292.7,570.9 L1292.8,570.1 L1292.7,569.3 L1292.5,568.3 L1292.0,567.2 L1291.3,566.0 L1290.5,564.7 L1289.6,563.4 L1288.5,562.1 L1287.3,560.7 L1286.0,559.4 L1284.6,558.0 L1283.1,556.8 L1281.6,555.5 L1280.1,554.4 L1278.6,553.3 L1277.1,552.3 L1275.6,551.5 L1274.1,550.7 L1272.7,550.0 L1271.4,549.5 L1270.1,549.1 L1269.0,548.8 L1267.9,548.6 L1266.9,548.5 L1266.1,548.5 L1265.3,548.6 L1264.7,548.8 L1264.2,549.1 L1263.8,549.5 L1263.5,549.9 L1263.3,550.3 L1263.2,550.8 L1263.2,551.3 L1263.3,551.8 L1263.5,552.3 L1263.7,552.8 L1264.1,553.2 L1264.4,553.6 L1264.9,554.0 L1265.3,554.4 L1265.8,554.7 L1266.4,554.9 L1266.9,555.1 L1267.5,555.2 L1268.0,555.3 L1268.6,555.3 L1269.1,555.3 L1269.6,555.2 L1270.2,555.1 L1270.7,555.0 L1271.2,554.9 L1271.6,554.8M1280.4,551.4 L1282.9,551.3 L1285.2,551.3 L1287.5,551.4 L1289.7,551.5 L1291.7,551.7 L1293.4,552.0 L1295.0,552.4 L1296.3,552.9 L1297.3,553.6 L1298.0,554.4 L1298.5,555.3 L1298.6,556.3 L1298.5,557.5 L1298.1,558.8 L1297.4,560.3 L1296.5,561.8 L1295.3,563.4 L1294.0,565.0 L1292.6,566.7 L1291.0,568.3 L1289.3,570.0 L1287.7,571.6 L1286.0,573.2 L1284.3,574.6 L1282.8,576.0 L1281.4,577.2 L1280.1,578.3 L1279.0,579.1 L1278.2,579.8 L1277.5,580.3 L1277.1,580.6 L1277.0,580.7 L1277.1,580.5 L1277.5,580.2 L1278.1,579.6 L1278.9,578.8 L1280.0,577.9 L1281.2,576.7 L1282.6,575.4 L1284.2,574.0 L1285.8,572.5 L1287.4,570.9 L1289.1,569.2 L1290.7,567.5 L1292.3,565.7 L1293.8,564.0 L1295.1,562.3 L1296.2,560.7 L1297.1,559.2 L1297.7,557.7 L1298.1,556.4 L1298.3,555.2 L1298.1,554.2 L1297.6,553.2 L1296.9,552.5 L1295.8,551.8 L1294.5,551.3 L1293.0,551.0 L1291.2,550.7 L1289.2,550.6 L1287.0,550.5 L1284.7,550.5 L1282.3,550.6 L1279.9,550.7 L1277.4,550.9 L1275.0,551.0 L1272.6,551.1 L1270.3,551.2 L1268.2,551.2 L1266.3,551.1 L1264.5,550.9 L1263.1,550.7 L1261.8,550.3 L1260.8,549.8 L1260.1,549.1 L1259.7,548.4 L1259.6,547.5 L1259.8,546.5 L1260.2,545.4 L1260.8,544.3 L1261.7,543.0 L1262.8,541.7 L1264.0,540.3 L1265.4,539.0 L1266.9,537.6 L1268.5,536.3 L1270.0,535.0 L1271.6,533.7 L1273.1,532.6 L1274.6,531.5 L1275.9,530.6 L1277.1,529.9 L1278.2,529.3 L1279.1,528.8 L1279.8,528.5 L1280.2,528.4 L1280.5,528.5 L1280.6,528.8 L1280.4,529.3 L1280.1,529.9 L1279.6,530.7 L1278.9,531.6 L1278.1,532.7 L1277.1,533.9 L1276.1,535.3 L1275.0,536.7 L1273.9,538.1 L1272.7,539.7 L1271.6,541.2 L1270.6,542.8 L1269.6,544.3 L1268.7,545.8 L1268.0,547.3 L1267.5,548.7 L1267.1,550.1 L1266.9,551.3 L1266.9,552.5 L1267.1,553.6 L1267.5,554.5M1272.8,531.0 L1273.0,531.1 L1273.3,531.4 L1273.6,532.0 L1274.0,532.8 L1274.4,533.9 L1274.9,535.1 L1275.4,536.7 L1276.0,538.4 L1276.6,540.3 L1277.2,542.5 L1277.9,544.8 L1278.6,547.2 L1279.3,549.8 L1280.0,552.5 L1280.7,555.3 L1281.5,558.1 L1282.2,561.0 L1282.9,563.9 L1283.6,566.8 L1284.3,569.7 L1285.0,572.5 L1285.6,575.2 L1286.2,577.9 L1286.8,580.4 L1287.3,582.8 L1287.8,585.0 L1288.3,587.0 L1288.7,588.9 L1289.0,590.5 L1289.3,591.9 L1289.6,593.0 L1289.7,593.9 L1289.9,594.6 L1289.9,595.0 L1289.9,595.1 L1289.8,594.9 L1289.7,594.5 L1289.5,593.8 L1289.2,592.9 L1288.8,591.7 L1288.4,590.3 L1288.0,588.6 L1287.4,586.8 L1286.8,584.7 L1286.2,582.4 L1285.5,580.0 L1284.7,577.5 L1283.9,574.8 L1283.1,572.0 L1282.2,569.2 L1281.3,566.3 L1280.3,563.4 L1279.4,560.4 L1278.4,557.5 L1277.4,554.7 L1276.4,551.9 L1275.4,549.2 L1274.4,546.7 L1273.4,544.2 L1272.5,542.0 L1271.5,539.9 L1270.7,538.0 L1269.8,536.3 L1269.0,534.9 L1268.3,533.7 L1267.6,532.7 L1266.9,532.0 L1266.4,531.6 L1265.9,531.4 L1265.5,531.5 L1265.2,531.8 L1265.0,532.4 L1264.9,533.3 L1264.9,534.4 L1265.0,535.7 L1265.1,537.3 L1265.4,539.1 L1265.8,541.1 L1266.3,543.3 L1266.8,545.6 L1267.5,548.1 L1268.2,550.7 L1269.1,553.3 L1270.0,556.1 L1271.0,558.9 L1272.1,561.8 L1273.2,564.6 L1274.4,567.5 L1275.6,570.2 L1276.9,573.0 L1278.2,575.6 L1279.6,578.1 L1280.9,580.5 L1282.3,582.7 L1283.6,584.8 L1284.9,586.7 L1286.2,588.4 L1287.5,589.8 L1288.7,591.1 L1289.8,592.1 L1290.9,592.9 L1291.9,593.4 L1292.8,593.6 L1293.6,593.6 L1294.4,593.4 L1295.0,592.9 L1295.5,592.1 L1295.9,591.2 L1296.1,590.0 L1296.3,588.5 L1296.3,586.9 L1296.2,585.1 L1295.9,583.1 L1295.6,580.9 L1295.1,578.6 L1294.4,576.1 L1293.7,573.6 L1292.9,571.0 L1291.9,568.3M1271.8,557.5 L1270.6,558.0 L1269.5,558.6 L1268.7,559.2 L1268.0,560.0 L1267.6,560.8 L1267.4,561.6 L1267.4,562.5 L1267.6,563.5 L1268.1,564.5 L1268.8,565.5 L1269.7,566.6 L1270.8,567.7 L1272.1,568.8 L1273.6,569.9 L1275.2,571.0 L1277.0,572.1 L1278.9,573.2 L1280.9,574.4 L1283.0,575.5 L1285.0,576.6 L1287.1,577.8 L1289.1,578.9 L1291.1,580.1 L1293.0,581.2 L1294.8,582.3 L1296.5,583.5 L1298.0,584.6 L1299.4,585.7 L1300.5,586.8 L1301.5,587.8 L1302.3,588.9 L1302.9,589.8 L1303.2,590.8 L1303.4,591.7 L1303.3,592.5 L1303.1,593.3 L1302.6,594.0 L1302.0,594.6 L1301.3,595.1 L1300.4,595.5 L1299.4,595.8 L1298.2,596.0 L1297.1,596.0 L1295.8,596.0 L1294.5,595.8 L1293.3,595.5 L1292.0,595.0 L1290.7,594.4 L1289.5,593.7 L1288.4,592.9 L1287.3,592.0 L1286.4,590.9 L1285.5,589.8 L1284.8,588.6 L1284.2,587.3 L1283.7,586.0 L1283.3,584.6 L1283.1,583.2 L1282.9,581.8 L1282.9,580.4 L1283.0,579.1 L1283.2,577.8 L1283.5,576.5 L1283.8,575.4 L1284.2,574.3 L1284.7,573.4 L1285.2,572.6 L1285.8,572.0 L1286.4,571.5 L1286.9,571.2 L1287.5,571.0 L1288.1,571.0 L1288.6,571.3 L1289.2,571.6 L1289.7,572.2 L1290.1,573.0 L1290.6,573.9 L1290.9,575.0 L1291.3,576.2 L1291.6,577.5 L1291.9,579.0 L1292.2,580.6 L1292.4,582.3 L1292.7,584.0 L1292.9,585.8 L1293.1,587.6 L1293.4,589.5 L1293.6,591.3 L1293.9,593.0 L1294.1,594.8 L1294.4,596.4 L1294.7,598.0 L1295.1,599.5 L1295.5,600.8 L1295.9,602.1 L1296.3,603.1 L1296.7,604.0 L1297.2,604.8 L1297.7,605.4 L1298.1,605.8 L1298.6,606.0 L1299.0,606.1 L1299.5,606.0 L1299.8,605.7 L1300.2,605.2 L1300.4,604.6 L1300.7,603.9 L1300.8,603.0 L1300.8,601.9 L1300.8,600.8 L1300.6,599.5 L1300.4,598.2 L1300.0,596.8 L1299.5,595.3 L1298.9,593.7 L1298.3,592.1 L1297.5,590.5 L1296.6,588.8 L1295.6,587.2M1259.7,560.4 L1260.5,558.6 L1261.4,556.6 L1262.4,554.6 L1263.5,552.6 L1264.6,550.6 L1265.8,548.7 L1267.0,546.8 L1268.3,545.2 L1269.6,543.7 L1271.0,542.5 L1272.3,541.6 L1273.6,541.0 L1275.0,540.7 L1276.3,540.8 L1277.5,541.3 L1278.8,542.1 L1279.9,543.3 L1281.0,544.9 L1282.0,546.8 L1282.8,549.0 L1283.6,551.6 L1284.3,554.4 L1284.8,557.4 L1285.2,560.6 L1285.4,563.9 L1285.6,567.4 L1285.6,570.8 L1285.4,574.3 L1285.1,577.6 L1284.7,580.9 L1284.2,584.0 L1283.5,586.8 L1282.8,589.4 L1282.0,591.7 L1281.1,593.7 L1280.1,595.4 L1279.2,596.6 L1278.2,597.5 L1277.2,598.0 L1276.3,598.1 L1275.3,597.8 L1274.5,597.2 L1273.7,596.2 L1273.1,594.9 L1272.5,593.2 L1272.1,591.3 L1271.9,589.2 L1271.7,586.9 L1271.8,584.5 L1272.0,582.0 L1272.3,579.4 L1272.8,576.8 L1273.5,574.3 L1274.3,571.8 L1275.2,569.5 L1276.3,567.3 L1277.4,565.3 L1278.6,563.5 L1279.9,562.0 L1281.2,560.7 L1282.5,559.7 L1283.7,558.9 L1284.9,558.3 L1286.1,558.1 L1287.1,558.0 L1287.9,558.2 L1288.6,558.6 L1289.1,559.1 L1289.4,559.8 L1289.5,560.6 L1289.4,561.5 L1288.9,562.4 L1288.3,563.4 L1287.4,564.2 L1286.2,565.1 L1284.8,565.8 L1283.2,566.4 L1281.3,566.9 L1279.3,567.2 L1277.1,567.3 L1274.8,567.2 L1272.3,566.9 L1269.8,566.3 L1267.2,565.6 L1264.6,564.7 L1262.1,563.6 L1259.6,562.2 L1257.3,560.8 L1255.1,559.2 L1253.1,557.5 L1251.3,555.7 L1249.7,553.9 L1248.5,552.1 L1247.5,550.2 L1246.8,548.5 L1246.5,546.8 L1246.5,545.3 L1246.9,543.9 L1247.6,542.6 L1248.6,541.6 L1249.9,540.8 L1251.6,540.2 L1253.5,539.9 L1255.6,539.8 L1257.9,540.0 L1260.5,540.4 L1263.1,541.0 L1265.8,541.9 L1268.6,543.1 L1271.4,544.4 L1274.2,545.9 L1276.8,547.5 L1279.4,549.3 L1281.7,551.2 L1283.9,553.2 L1285.8,555.2 L1287.5,557.2 L1288.9,559.3 L1290.0,561.2M1263.7,571.5 L1263.6,573.0 L1263.5,574.5 L1263.4,575.9 L1263.4,577.1 L1263.5,578.3 L1263.5,579.2 L1263.6,580.0 L1263.7,580.7 L1263.8,581.1 L1264.0,581.3 L1264.1,581.3 L1264.3,581.2 L1264.4,580.8 L1264.6,580.2 L1264.8,579.4 L1264.9,578.4 L1265.1,577.2 L1265.2,575.8 L1265.4,574.2 L1265.6,572.5 L1265.7,570.7 L1265.9,568.8 L1266.1,566.8 L1266.4,564.7 L1266.6,562.5 L1266.9,560.3 L1267.2,558.1 L1267.5,556.0 L1267.9,553.9 L1268.3,551.8 L1268.7,549.8 L1269.2,548.0 L1269.8,546.2 L1270.4,544.6 L1271.0,543.2 L1271.6,541.9 L1272.4,540.8 L1273.1,539.8 L1273.9,539.1 L1274.7,538.6 L1275.5,538.2 L1276.3,538.1 L1277.1,538.1 L1278.0,538.3 L1278.8,538.7 L1279.6,539.3 L1280.4,540.0 L1281.1,540.8 L1281.8,541.8 L1282.4,542.8 L1283.0,544.0 L1283.4,545.2 L1283.8,546.4 L1284.1,547.7 L1284.3,549.0 L1284.4,550.3 L1284.3,551.6 L1284.2,552.8 L1283.9,554.0 L1283.5,555.0 L1282.9,556.0 L1282.3,556.9 L1281.5,557.7 L1280.6,558.3 L1279.5,558.8 L1278.4,559.2 L1277.2,559.5 L1275.8,559.6 L1274.4,559.6 L1273.0,559.5 L1271.4,559.3 L1269.9,558.9 L1268.3,558.5 L1266.6,558.0 L1265.0,557.4 L1263.4,556.7 L1261.9,556.0 L1260.3,555.3 L1258.9,554.6 L1257.5,553.8 L1256.2,553.1 L1255.0,552.4 L1254.0,551.8 L1253.0,551.2 L1252.2,550.7 L1251.6,550.3 L1251.1,550.0 L1250.7,549.8 L1250.5,549.7 L1250.5,549.7 L1250.7,549.9 L1251.0,550.1 L1251.4,550.5 L1252.1,551.0 L1252.8,551.6 L1253.8,552.3 L1254.8,553.0 L1256.0,553.9 L1257.3,554.8 L1258.6,555.8 L1260.1,556.9 L1261.6,557.9 L1263.2,559.0 L1264.8,560.1 L1266.4,561.1 L1268.0,562.1 L1269.6,563.1 L1271.2,564.0 L1272.7,564.8 L1274.2,565.6 L1275.6,566.2 L1277.0,566.7 L1278.2,567.1 L1279.4,567.4 L1280.4,567.5 L1281.3,567.5 L1282.1,567.4 L1282.8,567.1 L1283.3,566.8M1254.1,543.7 L1254.9,545.3 L1255.8,547.0 L1256.8,548.7 L1257.9,550.4 L1259.0,552.1 L1260.2,553.8 L1261.4,555.4 L1262.6,557.0 L1263.9,558.4 L1265.1,559.8 L1266.3,561.1 L1267.4,562.2 L1268.5,563.1 L1269.5,563.9 L1270.5,564.5 L1271.3,564.9 L1272.1,565.1 L1272.8,565.2 L1273.4,565.1 L1273.9,564.8 L1274.3,564.3 L1274.6,563.6 L1274.8,562.8 L1274.8,561.9 L1274.8,560.8 L1274.7,559.6 L1274.5,558.3 L1274.2,556.9 L1273.9,555.5 L1273.4,554.0 L1273.0,552.6 L1272.4,551.1 L1271.9,549.6 L1271.3,548.2 L1270.6,546.9 L1270.0,545.6 L1269.3,544.4 L1268.7,543.3 L1268.1,542.4 L1267.5,541.6 L1266.9,540.9 L1266.4,540.4 L1265.9,540.1 L1265.4,539.9 L1265.0,539.9 L1264.6,540.1 L1264.3,540.4 L1264.1,540.8 L1263.8,541.4 L1263.7,542.2 L1263.6,543.0 L1263.5,544.0 L1263.5,545.1 L1263.6,546.2 L1263.6,547.5 L1263.7,548.7 L1263.8,550.0 L1264.0,551.3 L1264.1,552.6 L1264.3,553.9 L1264.4,555.1 L1264.6,556.3 L1264.7,557.3 L1264.9,558.3 L1265.0,559.2 L1265.1,560.0 L1265.1,560.6 L1265.2,561.1 L1265.2,561.4 L1265.2,561.6 L1265.1,561.7 L1265.0,561.6 L1264.9,561.4 L1264.7,561.0 L1264.6,560.5 L1264.4,559.8 L1264.2,559.0 L1263.9,558.2 L1263.7,557.2 L1263.5,556.2 L1263.2,555.1 L1263.0,553.9 L1262.8,552.8 L1262.6,551.6 L1262.4,550.4 L1262.3,549.3 L1262.2,548.1 L1262.1,547.1 L1262.1,546.1 L1262.1,545.2 L1262.2,544.5 L1262.4,543.8 L1262.6,543.2 L1262.8,542.8 L1263.2,542.6 L1263.5,542.4 L1264.0,542.4 L1264.5,542.6 L1265.0,542.9 L1265.6,543.4 L1266.2,544.0 L1266.8,544.7 L1267.5,545.5 L1268.2,546.4 L1268.8,547.4 L1269.5,548.5 L1270.2,549.7 L1270.9,550.9 L1271.5,552.1 L1272.1,553.3 L1272.6,554.5 L1273.1,555.7 L1273.5,556.9 L1273.9,557.9 L1274.1,558.9 L1274.3,559.8 L1274.4,560.6 L1274.4,561.2 L1274.3,561.8M1297.7,588.4 L1297.9,588.2 L1298.0,588.0 L1298.1,587.7 L1298.1,587.4 L1298.1,586.9 L1298.0,586.4 L1297.9,585.8 L1297.8,585.1 L1297.5,584.4 L1297.3,583.6 L1297.0,582.7 L1296.6,581.8 L1296.2,580.8 L1295.8,579.7 L1295.3,578.6 L1294.8,577.4 L1294.3,576.2 L1293.7,575.0 L1293.0,573.7 L1292.4,572.3 L1291.7,571.0 L1291.0,569.7 L1290.3,568.3 L1289.5,566.9 L1288.8,565.6 L1288.0,564.2 L1287.2,562.9 L1286.4,561.5 L1285.7,560.3 L1284.9,559.0 L1284.1,557.8 L1283.3,556.6 L1282.6,555.5 L1281.9,554.5 L1281.2,553.5 L1280.5,552.6 L1279.8,551.8 L1279.2,551.1 L1278.6,550.5 L1278.0,549.9 L1277.5,549.5 L1277.0,549.1 L1276.6,548.9 L1276.2,548.7 L1275.9,548.7 L1275.6,548.8 L1275.3,549.0 L1275.1,549.3 L1275.0,549.7 L1274.9,550.3 L1274.8,550.9 L1274.8,551.6 L1274.9,552.5 L1275.0,553.5 L1275.2,554.5 L1275.3,555.7 L1275.6,557.0 L1275.9,558.3 L1276.2,559.7 L1276.5,561.2 L1276.9,562.8 L1277.4,564.4 L1277.8,566.1 L1278.3,567.9 L1278.8,569.6 L1279.3,571.5 L1279.9,573.3 L1280.4,575.2 L1281.0,577.0 L1281.5,578.9 L1282.1,580.8 L1282.7,582.6 L1283.2,584.5 L1283.8,586.3 L1284.3,588.0 L1284.8,589.8 L1285.3,591.4 L1285.8,593.0 L1286.2,594.5 L1286.6,596.0 L1287.0,597.3 L1287.3,598.6 L1287.6,599.8 L1287.9,600.9 L1288.1,601.8 L1288.3,602.7 L1288.4,603.5 L1288.5,604.1 L1288.5,604.6 L1288.5,605.0 L1288.4,605.2 L1288.3,605.4 L1288.1,605.4 L1287.9,605.3 L1287.6,605.0 L1287.3,604.7 L1286.9,604.2 L1286.5,603.6 L1286.0,602.9 L1285.5,602.0 L1285.0,601.1 L1284.5,600.0 L1283.9,598.9 L1283.2,597.6 L1282.6,596.3 L1281.9,594.9 L1281.2,593.4 L1280.5,591.9 L1279.8,590.3 L1279.1,588.6 L1278.3,586.9 L1277.6,585.2 L1276.9,583.4 L1276.2,581.6 L1275.5,579.8 L1274.8,578.0 L1274.1,576.2 L1273.5,574.4 L1272.9,572.7M1279.1,552.3 L1279.4,550.7 L1279.8,549.3 L1280.3,548.3 L1280.9,547.5 L1281.6,547.1 L1282.4,547.1 L1283.2,547.3 L1284.1,548.0 L1285.0,548.9 L1286.0,550.2 L1286.9,551.7 L1287.9,553.5 L1288.9,555.5 L1289.8,557.7 L1290.7,560.0 L1291.5,562.4 L1292.3,564.8 L1292.9,567.2 L1293.4,569.6 L1293.8,571.8 L1294.1,573.9 L1294.2,575.7 L1294.3,577.3 L1294.1,578.7 L1293.9,579.7 L1293.5,580.4 L1293.0,580.8 L1292.4,580.8 L1291.7,580.5 L1290.9,579.8 L1290.0,578.9 L1289.2,577.6 L1288.3,576.0 L1287.4,574.2 L1286.5,572.2 L1285.7,570.1 L1285.0,567.8 L1284.3,565.5 L1283.7,563.1 L1283.3,560.8 L1283.0,558.5 L1282.8,556.3 L1282.8,554.3 L1282.9,552.5 L1283.2,550.9 L1283.6,549.5 L1284.1,548.5 L1284.8,547.7 L1285.6,547.1 L1286.4,546.9 L1287.4,547.0 L1288.4,547.3 L1289.4,547.9 L1290.5,548.8 L1291.5,549.9 L1292.5,551.1 L1293.4,552.5 L1294.3,554.1 L1295.0,555.7 L1295.6,557.3 L1296.1,559.0 L1296.4,560.6 L1296.5,562.2 L1296.5,563.7 L1296.3,565.1 L1296.0,566.3 L1295.5,567.4 L1294.8,568.3 L1294.0,569.0 L1293.1,569.5 L1292.1,569.8 L1291.0,570.0 L1289.8,569.9 L1288.6,569.7 L1287.5,569.4 L1286.3,568.9 L1285.2,568.3 L1284.2,567.7 L1283.2,567.0 L1282.4,566.3 L1281.8,565.5 L1281.3,564.8 L1280.9,564.2 L1280.8,563.6 L1280.8,563.1 L1281.0,562.6 L1281.4,562.3 L1281.9,562.1 L1282.6,562.0 L1283.4,562.1 L1284.4,562.2 L1285.4,562.4 L1286.5,562.7 L1287.6,563.1 L1288.8,563.6 L1289.9,564.0 L1291.0,564.5 L1292.0,565.0 L1292.9,565.4 L1293.6,565.8 L1294.2,566.2 L1294.6,566.4 L1294.9,566.6 L1294.9,566.6 L1294.7,566.6 L1294.3,566.4 L1293.7,566.1 L1292.9,565.7 L1291.8,565.1 L1290.6,564.5 L1289.3,563.8 L1287.8,563.0 L1286.2,562.2 L1284.5,561.4 L1282.8,560.5 L1281.0,559.7 L1279.3,559.0 L1277.7,558.3 L1276.1,557.8M1287.6,538.9 L1285.6,537.4 L1283.5,536.0 L1281.3,534.7 L1279.1,533.6 L1276.9,532.7 L1274.8,531.8 L1272.7,531.2 L1270.7,530.7 L1268.8,530.3 L1267.1,530.1 L1265.6,530.0 L1264.3,530.1 L1263.2,530.3 L1262.3,530.6 L1261.8,531.0 L1261.4,531.5 L1261.4,532.2 L1261.6,532.9 L1262.1,533.7 L1262.8,534.6 L1263.7,535.6 L1264.8,536.6 L1266.1,537.7 L1267.6,538.9 L1269.2,540.1 L1270.9,541.3 L1272.7,542.6 L1274.5,543.8 L1276.3,545.1 L1278.1,546.5 L1279.8,547.8 L1281.4,549.1 L1282.9,550.4 L1284.2,551.7 L1285.4,552.9 L1286.4,554.1 L1287.2,555.2 L1287.8,556.3 L1288.2,557.3 L1288.3,558.2 L1288.3,558.9 L1288.0,559.6 L1287.6,560.2 L1287.0,560.6 L1286.2,560.9 L1285.3,561.0 L1284.3,561.0 L1283.3,560.8 L1282.1,560.5 L1280.9,559.9 L1279.7,559.2 L1278.6,558.4 L1277.5,557.4 L1276.4,556.3 L1275.5,555.0 L1274.7,553.6 L1274.0,552.0 L1273.4,550.4 L1273.0,548.7 L1272.8,547.0 L1272.7,545.2 L1272.9,543.5 L1273.1,541.7 L1273.6,540.1 L1274.1,538.5 L1274.9,536.9 L1275.7,535.6 L1276.6,534.3 L1277.6,533.3 L1278.7,532.5 L1279.9,531.8 L1281.0,531.4 L1282.2,531.3 L1283.3,531.4 L1284.4,531.8 L1285.4,532.5 L1286.4,533.4 L1287.3,534.6 L1288.0,536.0 L1288.7,537.7 L1289.3,539.7 L1289.8,541.8 L1290.1,544.2 L1290.4,546.7 L1290.5,549.3 L1290.5,552.0 L1290.5,554.9 L1290.4,557.7 L1290.2,560.6 L1290.0,563.4 L1289.8,566.2 L1289.5,568.9 L1289.2,571.4 L1289.0,573.8 L1288.7,576.0 L1288.5,578.0 L1288.3,579.8 L1288.2,581.3 L1288.2,582.5 L1288.2,583.4 L1288.2,584.1 L1288.4,584.4 L1288.5,584.5 L1288.7,584.3 L1289.0,583.8 L1289.3,583.0 L1289.6,582.0 L1289.9,580.8 L1290.2,579.3 L1290.5,577.6 L1290.7,575.8 L1290.9,573.9 L1291.0,571.9 L1291.1,569.8 L1291.0,567.6 L1290.9,565.5 L1290.6,563.4 L1290.3,561.3 L1289.8,559.3M1293.6,587.8 L1293.8,588.5 L1294.1,589.1 L1294.2,589.7 L1294.4,590.2 L1294.5,590.7 L1294.5,591.1 L1294.6,591.4 L1294.5,591.7 L1294.5,591.9 L1294.4,592.0 L1294.2,592.1 L1294.1,592.1 L1293.9,592.1 L1293.6,591.9 L1293.3,591.8 L1293.0,591.5 L1292.7,591.2 L1292.3,590.8 L1291.9,590.4 L1291.4,589.9 L1291.0,589.4 L1290.5,588.8 L1290.0,588.2 L1289.5,587.5 L1289.0,586.8 L1288.5,586.0 L1287.9,585.2 L1287.4,584.4 L1286.9,583.6 L1286.3,582.7 L1285.8,581.9 L1285.2,581.0 L1284.7,580.1 L1284.2,579.2 L1283.7,578.3 L1283.3,577.4 L1282.8,576.6 L1282.4,575.7 L1282.0,574.9 L1281.6,574.1 L1281.3,573.3 L1281.0,572.6 L1280.7,571.9 L1280.5,571.2 L1280.3,570.6 L1280.1,570.0 L1280.0,569.5 L1279.9,569.0 L1279.9,568.6 L1280.0,568.3 L1280.0,568.0 L1280.2,567.8 L1280.3,567.7 L1280.5,567.6 L1280.8,567.6 L1281.1,567.7 L1281.5,567.8 L1281.9,568.0 L1282.4,568.3 L1282.9,568.7 L1283.4,569.1 L1284.0,569.6 L1284.6,570.2 L1285.3,570.8 L1286.0,571.5 L1286.7,572.3 L1287.5,573.2 L1288.3,574.0 L1289.1,575.0 L1290.0,576.0 L1290.9,577.1 L1291.8,578.2 L1292.7,579.3 L1293.6,580.5 L1294.6,581.7 L1295.5,583.0 L1296.4,584.3 L1297.4,585.6 L1298.3,586.9 L1299.3,588.3 L1300.2,589.6 L1301.1,591.0 L1302.0,592.3 L1302.9,593.7 L1303.7,595.0 L1304.6,596.3 L1305.4,597.6 L1306.1,598.9 L1306.9,600.1 L1307.6,601.3 L1308.2,602.5 L1308.8,603.6 L1309.4,604.7 L1309.9,605.7 L1310.3,606.7 L1310.8,607.6 L1311.1,608.5 L1311.4,609.3 L1311.7,610.0 L1311.8,610.6 L1312.0,611.2 L1312.0,611.7 L1312.1,612.2 L1312.0,612.5 L1311.9,612.8 L1311.7,613.0 L1311.5,613.1 L1311.2,613.1 L1310.9,613.1 L1310.5,613.0 L1310.0,612.8 L1309.5,612.5 L1309.0,612.2 L1308.4,611.8 L1307.7,611.3 L1307.0,610.7 L1306.3,610.1 L1305.5,609.4 L1304.7,608.6M1289.8,590.0 L1290.0,590.6 L1290.1,591.1 L1290.0,591.2 L1289.8,591.1 L1289.5,590.8 L1289.2,590.3 L1288.7,589.7 L1288.2,588.8 L1287.7,587.9 L1287.1,586.9 L1286.6,585.8 L1286.0,584.6 L1285.5,583.5 L1285.0,582.5 L1284.6,581.5 L1284.3,580.7 L1284.1,579.9 L1283.9,579.4 L1284.0,579.0 L1284.1,578.9 L1284.4,578.9 L1284.8,579.2 L1285.4,579.7 L1286.1,580.5 L1287.0,581.4 L1287.9,582.6 L1289.0,583.9 L1290.2,585.4 L1291.4,587.1 L1292.7,588.9 L1294.1,590.7 L1295.4,592.6 L1296.8,594.5 L1298.2,596.4 L1299.5,598.3 L1300.7,600.0 L1301.9,601.7 L1302.9,603.1 L1303.9,604.4 L1304.7,605.5 L1305.3,606.4 L1305.8,607.0 L1306.2,607.4 L1306.3,607.5 L1306.3,607.4 L1306.2,607.0 L1305.9,606.3 L1305.4,605.5 L1304.8,604.4 L1304.0,603.1 L1303.2,601.7 L1302.2,600.1 L1301.2,598.4 L1300.1,596.7 L1299.0,594.9 L1297.9,593.1 L1296.8,591.3 L1295.7,589.7 L1294.6,588.1 L1293.7,586.6 L1292.8,585.3 L1292.0,584.2 L1291.3,583.3 L1290.7,582.6 L1290.2,582.1 L1289.9,581.9 L1289.7,581.9 L1289.6,582.1 L1289.6,582.5 L1289.8,583.1 L1290.0,583.9 L1290.3,584.8 L1290.8,585.9 L1291.2,587.0 L1291.7,588.2 L1292.3,589.5 L1292.8,590.7 L1293.3,591.9 L1293.8,593.1 L1294.2,594.1 L1294.5,595.0 L1294.8,595.7 L1294.9,596.2 L1295.0,596.5 L1294.9,596.6 L1294.7,596.4 L1294.3,596.0 L1293.8,595.3 L1293.2,594.4 L1292.5,593.3 L1291.6,591.9 L1290.6,590.3 L1289.6,588.5 L1288.4,586.5 L1287.2,584.4 L1285.9,582.2 L1284.6,579.9 L1283.3,577.6 L1282.0,575.3 L1280.7,573.0 L1279.5,570.8 L1278.4,568.7 L1277.4,566.7 L1276.4,564.9 L1275.6,563.3 L1274.9,561.9 L1274.4,560.7 L1274.0,559.8 L1273.8,559.1 L1273.7,558.7 L1273.8,558.5 L1274.0,558.6 L1274.4,558.9 L1274.9,559.4 L1275.5,560.1 L1276.3,560.9 L1277.1,561.9 L1277.9,563.0 L1278.9,564.2M1286.1,567.5 L1286.0,568.5 L1285.8,569.3 L1285.5,570.0 L1285.1,570.5 L1284.7,570.8 L1284.2,571.0 L1283.6,571.0 L1283.0,570.9 L1282.3,570.6 L1281.7,570.1 L1280.9,569.5 L1280.2,568.7 L1279.5,567.9 L1278.8,566.9 L1278.1,565.8 L1277.4,564.6 L1276.8,563.4 L1276.2,562.1 L1275.6,560.8 L1275.1,559.4 L1274.6,558.0 L1274.2,556.7 L1273.9,555.4 L1273.6,554.1 L1273.4,552.9 L1273.2,551.8 L1273.2,550.8 L1273.2,549.9 L1273.2,549.1 L1273.3,548.4 L1273.5,547.9 L1273.7,547.5 L1274.0,547.3 L1274.3,547.2 L1274.7,547.3 L1275.1,547.5 L1275.5,547.9 L1275.9,548.4 L1276.4,549.1 L1276.8,549.9 L1277.3,550.8 L1277.8,551.8 L1278.2,553.0 L1278.6,554.2 L1279.0,555.5 L1279.4,556.8 L1279.7,558.2 L1280.0,559.6 L1280.2,561.0 L1280.4,562.4 L1280.6,563.8 L1280.7,565.1 L1280.7,566.3 L1280.7,567.4 L1280.6,568.5 L1280.5,569.4 L1280.3,570.2 L1280.1,570.8 L1279.8,571.3 L1279.4,571.6 L1279.1,571.8 L1278.7,571.7 L1278.2,571.5 L1277.8,571.1 L1277.3,570.5 L1276.8,569.7 L1276.3,568.7 L1275.7,567.6 L1275.2,566.3 L1274.7,564.8 L1274.2,563.2 L1273.7,561.5 L1273.2,559.6 L1272.7,557.6 L1272.3,555.6 L1271.9,553.5 L1271.6,551.3 L1271.2,549.2 L1271.0,547.0 L1270.7,544.8 L1270.5,542.7 L1270.4,540.7 L1270.2,538.7 L1270.2,536.8 L1270.1,535.0 L1270.1,533.4 L1270.2,531.9 L1270.3,530.6 L1270.4,529.5 L1270.5,528.5 L1270.6,527.8 L1270.8,527.2 L1271.0,526.9 L1271.2,526.7 L1271.3,526.8 L1271.5,527.1 L1271.7,527.6 L1271.9,528.3 L1272.0,529.2 L1272.2,530.3 L1272.3,531.5 L1272.4,532.9 L1272.4,534.5 L1272.5,536.1 L1272.4,537.9 L1272.4,539.8 L1272.3,541.7 L1272.2,543.7 L1272.1,545.7 L1271.9,547.7 L1271.7,549.7 L1271.4,551.7 L1271.1,553.6 L1270.8,555.4 L1270.5,557.2 L1270.2,558.8 L1269.8,560.3 L1269.5,561.6 L1269.1,562.8M1269.4,567.4 L1270.2,568.8 L1271.0,570.1 L1271.9,571.4 L1273.0,572.6 L1274.0,573.7 L1275.2,574.7 L1276.3,575.6 L1277.5,576.4 L1278.7,577.1 L1279.8,577.7 L1281.0,578.1 L1282.0,578.5 L1283.0,578.8 L1284.0,578.9 L1284.8,579.0 L1285.5,579.0 L1286.0,578.8 L1286.4,578.6 L1286.7,578.4 L1286.8,578.0 L1286.7,577.6 L1286.5,577.1 L1286.1,576.6 L1285.5,576.1 L1284.7,575.5 L1283.8,574.9 L1282.7,574.2 L1281.5,573.6 L1280.1,572.9 L1278.6,572.3 L1277.1,571.6 L1275.4,571.0 L1273.7,570.3 L1272.0,569.7 L1270.3,569.0 L1268.6,568.4 L1266.9,567.8 L1265.3,567.2 L1263.8,566.7 L1262.3,566.1 L1261.1,565.6 L1259.9,565.0 L1258.9,564.5 L1258.1,564.0 L1257.5,563.5 L1257.1,563.1 L1257.0,562.6 L1257.0,562.2 L1257.2,561.7 L1257.7,561.3 L1258.4,560.9 L1259.3,560.6 L1260.3,560.3 L1261.6,560.0 L1263.0,559.7 L1264.6,559.4 L1266.3,559.3 L1268.1,559.1 L1269.9,559.0 L1271.8,559.0 L1273.8,559.0 L1275.7,559.0 L1277.6,559.1 L1279.5,559.3 L1281.3,559.6 L1282.9,559.9 L1284.5,560.3 L1285.9,560.8 L1287.1,561.3 L1288.1,561.9 L1289.0,562.6 L1289.6,563.3 L1290.0,564.1 L1290.2,564.9 L1290.1,565.7 L1289.8,566.6 L1289.3,567.6 L1288.6,568.5 L1287.7,569.5 L1286.5,570.4 L1285.2,571.4 L1283.8,572.3 L1282.2,573.2 L1280.5,574.1 L1278.7,574.9 L1276.8,575.6 L1274.9,576.3 L1273.0,576.9 L1271.1,577.4 L1269.3,577.8 L1267.5,578.1 L1265.8,578.3 L1264.3,578.4 L1262.8,578.3 L1261.6,578.2 L1260.5,578.0 L1259.6,577.6 L1258.9,577.1 L1258.4,576.5 L1258.2,575.9 L1258.1,575.1 L1258.3,574.3 L1258.7,573.3 L1259.3,572.4 L1260.0,571.3 L1261.0,570.3 L1262.2,569.2 L1263.5,568.1 L1264.9,567.0 L1266.4,565.9 L1268.1,564.9 L1269.8,563.9 L1271.5,562.9 L1273.2,562.1 L1275.0,561.3 L1276.7,560.6 L1278.3,560.0 L1279.9,559.5 L1281.3,559.1M1273.4,572.4 L1273.1,571.3 L1273.0,570.2 L1272.9,569.1 L1273.0,568.1 L1273.1,567.1 L1273.3,566.2 L1273.6,565.3 L1274.0,564.5 L1274.4,563.7 L1274.9,563.0 L1275.4,562.4 L1276.0,561.9 L1276.6,561.5 L1277.2,561.2 L1277.8,561.0 L1278.4,560.9 L1279.0,561.0 L1279.6,561.1 L1280.2,561.4 L1280.7,561.8 L1281.1,562.4 L1281.6,563.0 L1281.9,563.8 L1282.2,564.7 L1282.5,565.7 L1282.7,566.8 L1282.8,568.1 L1282.9,569.4 L1282.9,570.8 L1282.9,572.3 L1282.8,573.9 L1282.7,575.5 L1282.5,577.2 L1282.4,578.9 L1282.2,580.7 L1281.9,582.4 L1281.7,584.2 L1281.5,585.9 L1281.4,587.6 L1281.2,589.3 L1281.1,590.9 L1281.0,592.5 L1281.0,593.9 L1281.0,595.3 L1281.1,596.6 L1281.3,597.8 L1281.5,598.8 L1281.8,599.8 L1282.2,600.6 L1282.7,601.2 L1283.3,601.8 L1283.9,602.2 L1284.6,602.4 L1285.4,602.5 L1286.3,602.5 L1287.2,602.3 L1288.1,601.9 L1289.1,601.5 L1290.1,600.9 L1291.2,600.2 L1292.2,599.4 L1293.2,598.5 L1294.2,597.5 L1295.2,596.4 L1296.1,595.2 L1296.9,594.0 L1297.7,592.7 L1298.3,591.4 L1298.9,590.1 L1299.3,588.8 L1299.6,587.4 L1299.8,586.1 L1299.8,584.8 L1299.7,583.5 L1299.4,582.3 L1299.0,581.1 L1298.4,579.9 L1297.6,578.9 L1296.7,577.9 L1295.6,577.0 L1294.4,576.1 L1293.0,575.3 L1291.6,574.6 L1290.0,574.0 L1288.3,573.5 L1286.5,573.1 L1284.6,572.7 L1282.7,572.4 L1280.8,572.2 L1278.8,572.0 L1276.8,572.0 L1274.9,571.9 L1273.0,571.9 L1271.2,572.0 L1269.5,572.1 L1267.8,572.2 L1266.3,572.3 L1265.0,572.4 L1263.7,572.6 L1262.7,572.8 L1261.8,572.9 L1261.1,573.0 L1260.7,573.2 L1260.4,573.3 L1260.3,573.4 L1260.5,573.5 L1260.9,573.5 L1261.5,573.5 L1262.2,573.5 L1263.2,573.5 L1264.4,573.5 L1265.7,573.4 L1267.3,573.4 L1268.9,573.3 L1270.7,573.2 L1272.6,573.1 L1274.6,573.1 L1276.7,573.0 L1278.8,573.0M1267.1,546.1 L1267.0,546.1 L1266.9,546.2 L1266.8,546.2 L1266.6,546.2 L1266.5,546.3 L1266.4,546.3 L1266.2,546.4 L1266.0,546.5 L1265.9,546.5 L1265.7,546.6 L1265.5,546.7 L1265.3,546.8 L1265.1,546.9 L1264.8,547.0 L1264.6,547.1 L1264.4,547.3 L1264.1,547.4 L1263.9,547.5 L1263.7,547.7 L1263.4,547.8 L1263.2,548.0 L1262.9,548.1 L1262.7,548.3 L1262.4,548.4 L1262.2,548.5 L1262.0,548.7 L1261.8,548.8 L1261.6,548.9 L1261.4,549.1 L1261.3,549.2 L1261.1,549.3 L1261.0,549.4 L1260.9,549.5 L1260.8,549.6 L1260.8,549.6 L1260.7,549.7 L1260.7,549.7 L1260.7,549.8 L1260.8,549.8 L1260.9,549.8 L1261.0,549.7 L1261.2,549.7 L1261.4,549.6 L1261.6,549.6 L1261.8,549.5 L1262.1,549.4 L1262.4,549.3 L1262.8,549.1 L1263.2,549.0 L1263.6,548.8 L1264.0,548.6 L1264.5,548.4 L1265.0,548.2 L1265.5,548.0 L1266.0,547.7 L1266.6,547.5 L1267.1,547.2 L1267.7,547.0 L1268.3,546.7 L1268.9,546.4 L1269.6,546.1 L1270.2,545.9 L1270.8,545.6 L1271.4,545.3 L1272.0,545.0 L1272.6,544.8 L1273.2,544.5 L1273.8,544.3 L1274.4,544.1 L1274.9,543.8 L1275.4,543.6 L1275.9,543.5 L1276.4,543.3 L1276.8,543.1 L1277.1,543.0 L1277.5,542.9 L1277.8,542.8 L1278.0,542.8 L1278.3,542.8 L1278.4,542.8 L1278.5,542.8 L1278.6,542.9 L1278.6,543.0 L1278.6,543.1 L1278.5,543.2 L1278.4,543.4 L1278.2,543.6 L1277.9,543.9 L1277.6,544.1 L1277.3,544.4 L1276.9,544.8 L1276.5,545.1 L1276.0,545.5 L1275.5,545.9 L1274.9,546.3 L1274.3,546.8 L1273.7,547.2 L1273.0,547.7 L1272.3,548.2 L1271.6,548.7 L1270.9,549.2 L1270.1,549.8 L1269.4,550.3 L1268.6,550.8 L1267.8,551.4 L1267.1,551.9 L1266.3,552.5 L1265.5,553.0 L1264.8,553.5 L1264.0,554.0 L1263.3,554.5 L1262.6,555.0 L1262.0,555.5 L1261.3,555.9 L1260.7,556.4 L1260.2,556.8 L1259.7,557.1 L1259.2,557.5 L1258.8,557.8M1265.0,530.4 L1266.0,530.6 L1267.0,531.1 L1268.1,531.8 L1269.3,532.7 L1270.5,533.7 L1271.8,535.0 L1273.1,536.4 L1274.5,537.9 L1275.9,539.6 L1277.3,541.4 L1278.7,543.4 L1280.2,545.4 L1281.6,547.5 L1283.0,549.8 L1284.4,552.0 L1285.7,554.3 L1287.0,556.7 L1288.3,559.0 L1289.4,561.4 L1290.6,563.7 L1291.6,566.0 L1292.6,568.2 L1293.5,570.4 L1294.2,572.5 L1294.9,574.6 L1295.5,576.5 L1296.0,578.3 L1296.3,580.0 L1296.6,581.5 L1296.7,583.0 L1296.7,584.2 L1296.6,585.4 L1296.4,586.3 L1296.1,587.1 L1295.6,587.7 L1295.0,588.2 L1294.3,588.5 L1293.5,588.6 L1292.6,588.6 L1291.7,588.4 L1290.6,588.0 L1289.4,587.5 L1288.1,586.8 L1286.8,586.0 L1285.4,585.0 L1284.0,583.9 L1282.5,582.7 L1281.0,581.4 L1279.4,580.0 L1277.8,578.5 L1276.2,577.0 L1274.6,575.4 L1273.0,573.7 L1271.5,572.0 L1269.9,570.2 L1268.4,568.5 L1266.9,566.7 L1265.5,565.0 L1264.1,563.3 L1262.8,561.6 L1261.6,559.9 L1260.4,558.3 L1259.3,556.8 L1258.4,555.4 L1257.5,554.0 L1256.7,552.7 L1256.0,551.6 L1255.5,550.5 L1255.0,549.6 L1254.6,548.7 L1254.4,548.0 L1254.3,547.4 L1254.3,546.9 L1254.3,546.6 L1254.5,546.4 L1254.9,546.3 L1255.3,546.3 L1255.8,546.5 L1256.4,546.7 L1257.1,547.1 L1257.9,547.6 L1258.7,548.2 L1259.7,548.9 L1260.7,549.7 L1261.8,550.6 L1262.9,551.5 L1264.1,552.6 L1265.3,553.6 L1266.5,554.8 L1267.8,555.9 L1269.1,557.1 L1270.4,558.4 L1271.7,559.6 L1273.0,560.9 L1274.3,562.1 L1275.5,563.4 L1276.8,564.6 L1278.0,565.8 L1279.1,566.9 L1280.2,568.0 L1281.3,569.1 L1282.3,570.1 L1283.3,571.1 L1284.2,571.9 L1285.0,572.7 L1285.8,573.5 L1286.5,574.1 L1287.1,574.7 L1287.6,575.2 L1288.1,575.6 L1288.5,575.9 L1288.8,576.1 L1289.0,576.2 L1289.1,576.3 L1289.2,576.2 L1289.2,576.1 L1289.1,575.9 L1289.0,575.7 L1288.8,575.3M1272.4,532.1 L1271.3,532.6 L1270.2,533.3 L1268.9,534.2 L1267.7,535.3 L1266.5,536.5 L1265.2,537.8 L1264.0,539.2 L1262.9,540.8 L1261.8,542.4 L1260.9,544.1 L1260.1,545.9 L1259.4,547.7 L1258.8,549.5 L1258.5,551.4 L1258.3,553.2 L1258.3,555.0 L1258.5,556.8 L1259.0,558.5 L1259.6,560.1 L1260.5,561.7 L1261.6,563.2 L1262.8,564.5 L1264.3,565.8 L1265.9,566.9 L1267.8,568.0 L1269.7,568.9 L1271.8,569.7 L1274.0,570.4 L1276.2,570.9 L1278.5,571.4 L1280.8,571.7 L1283.1,572.0 L1285.4,572.1 L1287.6,572.1 L1289.7,572.1 L1291.7,571.9 L1293.6,571.7 L1295.3,571.4 L1296.8,571.1 L1298.0,570.7 L1299.1,570.2 L1299.9,569.7 L1300.5,569.1 L1300.8,568.5 L1300.9,567.9 L1300.7,567.2 L1300.2,566.5 L1299.6,565.8 L1298.6,565.0 L1297.4,564.2 L1296.1,563.3 L1294.5,562.4 L1292.8,561.5 L1290.9,560.5 L1288.9,559.4 L1286.8,558.3 L1284.6,557.1 L1282.4,555.9 L1280.1,554.6 L1277.9,553.3 L1275.7,551.9 L1273.5,550.4 L1271.4,548.9 L1269.5,547.3 L1267.6,545.7 L1265.9,544.0 L1264.3,542.3 L1262.9,540.6 L1261.7,538.8 L1260.6,537.0 L1259.7,535.3 L1259.0,533.6 L1258.5,531.9 L1258.1,530.2 L1257.9,528.6 L1257.9,527.1 L1258.0,525.7 L1258.2,524.4 L1258.6,523.3 L1259.0,522.3 L1259.5,521.4 L1260.1,520.7 L1260.7,520.2 L1261.4,519.9 L1262.1,519.8 L1262.7,520.0 L1263.4,520.3 L1264.0,520.9 L1264.6,521.7 L1265.1,522.7 L1265.6,523.9 L1266.0,525.4 L1266.4,527.0 L1266.7,528.9 L1266.9,530.9 L1267.1,533.1 L1267.2,535.5 L1267.3,538.0 L1267.4,540.6 L1267.4,543.3 L1267.5,546.0 L1267.5,548.9 L1267.6,551.7 L1267.7,554.5 L1267.8,557.3 L1268.0,560.1 L1268.3,562.8 L1268.7,565.4 L1269.1,567.8 L1269.7,570.2 L1270.4,572.3 L1271.2,574.3 L1272.1,576.1 L1273.1,577.7 L1274.2,579.1 L1275.5,580.3 L1276.9,581.2 L1278.3,581.9 L1279.9,582.4M1281.9,555.2 L1280.5,552.9 L1279.1,550.6 L1277.7,548.4 L1276.3,546.2 L1275.1,544.2 L1273.9,542.3 L1272.8,540.6 L1271.8,539.1 L1271.0,537.9 L1270.3,536.9 L1269.8,536.1 L1269.4,535.6 L1269.2,535.3 L1269.1,535.3 L1269.2,535.5 L1269.4,536.0 L1269.8,536.8 L1270.2,537.7 L1270.8,538.8 L1271.5,540.0 L1272.2,541.4 L1273.0,542.8 L1273.9,544.4 L1274.7,545.9 L1275.6,547.5 L1276.4,548.9 L1277.2,550.4 L1278.0,551.7 L1278.6,552.9 L1279.2,553.9 L1279.7,554.8 L1280.1,555.4 L1280.4,555.9 L1280.5,556.2 L1280.6,556.2 L1280.5,556.0 L1280.3,555.6 L1280.0,555.1 L1279.6,554.3 L1279.1,553.4 L1278.5,552.3 L1277.8,551.1 L1277.2,549.8 L1276.4,548.5 L1275.7,547.2 L1275.0,545.8 L1274.3,544.5 L1273.7,543.3 L1273.1,542.2 L1272.6,541.2 L1272.2,540.4 L1272.0,539.8 L1271.8,539.4 L1271.8,539.2 L1271.9,539.3 L1272.2,539.6 L1272.6,540.2 L1273.2,541.0 L1273.9,542.0 L1274.8,543.3 L1275.8,544.9 L1276.9,546.6 L1278.1,548.5 L1279.4,550.6 L1280.8,552.8 L1282.2,555.1 L1283.7,557.4 L1285.2,559.8 L1286.7,562.1 L1288.1,564.4 L1289.6,566.7 L1290.9,568.8 L1292.2,570.8 L1293.4,572.6 L1294.4,574.2 L1295.4,575.6 L1296.2,576.8 L1296.9,577.8 L1297.4,578.5 L1297.8,578.9 L1298.0,579.1 L1298.1,579.1 L1298.1,578.8 L1297.9,578.3 L1297.7,577.7 L1297.3,576.8 L1296.8,575.8 L1296.3,574.7 L1295.7,573.6 L1295.1,572.3 L1294.5,571.1 L1293.9,569.8 L1293.3,568.6 L1292.8,567.5 L1292.3,566.5 L1291.9,565.7 L1291.6,565.0 L1291.4,564.5 L1291.3,564.1 L1291.3,564.0 L1291.4,564.1 L1291.6,564.4 L1292.0,564.9 L1292.5,565.7 L1293.1,566.6 L1293.8,567.7 L1294.6,569.0 L1295.4,570.4 L1296.4,571.9 L1297.3,573.5 L1298.3,575.2 L1299.3,576.8 L1300.3,578.5 L1301.3,580.1 L1302.1,581.6 L1303.0,583.1 L1303.7,584.3 L1304.3,585.4 L1304.9,586.3" stroke="#ffd966" stroke-width="0.7" stroke-dasharray="1.2 0.6" fill="none" opacity="0.8" clip-path="url(#cc)"/><g stroke="#4a4b52" stroke-width="1.2" opacity="0.35"><path d="M1222,521L1330,601M1330,521L1222,601M1276,521V601M1222,561H1330"/></g></svg>
<div class="a" style="left:1221px;top:607px;width:110px;height:9px;background:#403e43"></div>
<div class="a" style="left:1276px;top:607px;width:21px;height:9px;background:#44cc44"></div>
<div class="a" style="left:1221px;top:616px;width:2px;height:6px;background:#55555a"></div>
<div class="a txt" style="left:1206px;width:32px;text-align:center;top:621px;font-size:10.5px;color:#d8d8dc">-1</div>
<div class="a" style="left:1275px;top:616px;width:2px;height:6px;background:#55555a"></div>
<div class="a txt" style="left:1260px;width:32px;text-align:center;top:621px;font-size:10.5px;color:#d8d8dc">0</div>
<div class="a" style="left:1329px;top:616px;width:2px;height:6px;background:#55555a"></div>
<div class="a txt" style="left:1314px;width:32px;text-align:center;top:621px;font-size:10.5px;color:#d8d8dc">1</div>
</body></html>
